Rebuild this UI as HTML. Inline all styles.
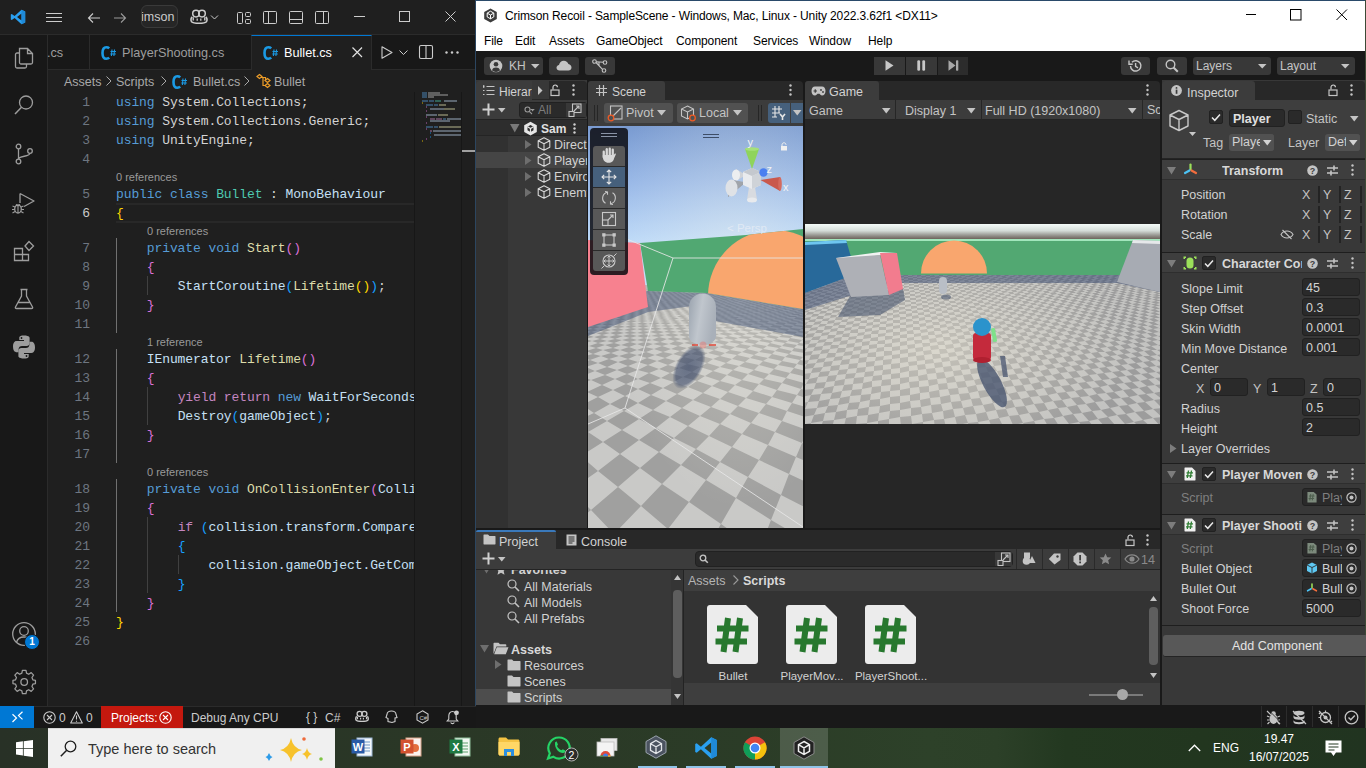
<!DOCTYPE html>
<html><head><meta charset="utf-8">
<style>
*{box-sizing:border-box;margin:0;padding:0}
html,body{width:1366px;height:768px;overflow:hidden;background:#1f1f1f;font-family:"Liberation Sans",sans-serif}
.a{position:absolute}
svg{position:absolute;overflow:visible}
/* VS Code */
#vs{left:0;top:0;width:476px;height:728px;background:#1f1f1f;overflow:hidden}
.code{font-family:"Liberation Mono",monospace;font-size:13px;letter-spacing:-0.1px;white-space:pre;color:#d4d4d4;line-height:19px;height:19px}
.ln{font-family:"Liberation Mono",monospace;font-size:13px;letter-spacing:-0.1px;color:#6e7681;width:40px;text-align:right;line-height:19px;height:19px}
.cl{font-size:11px;color:#999999;line-height:16px;height:16px;white-space:pre}
.k{color:#569cd6}.c{color:#c586c0}.t{color:#4ec9b0}.f{color:#dcdcaa}.v{color:#c6e0f5}.y{color:#ffd700}.p{color:#da70d6}.b{color:#179fff}
.ui{font-size:13px;color:#cccccc;white-space:pre}
/* Unity */
#un{left:476px;top:0;width:890px;height:728px;background:#191919;overflow:hidden}
.u{font-size:12px;color:#d2d2d2;white-space:pre}
.btn{background:#3a3a3a;border-radius:3px}
</style></head><body>

<!-- ================= VS CODE ================= -->
<div id="vs" class="a">
  <!-- title bar -->
  <div class="a" style="left:0;top:0;width:476px;height:35px;background:#1f1f1f;border-bottom:1px solid #2b2b2b"></div>
  <!-- vscode logo -->
  <svg style="left:10px;top:9px" width="16" height="16" viewBox="0 0 16 16"><path d="M11.5 0.8 L15.2 2.6 V13.4 L11.5 15.2 L4.6 8.9 L1.8 11.1 L0.8 10.6 V5.4 L1.8 4.9 L4.6 7.1 Z M11.5 4.4 L7 8 L11.5 11.6 Z" fill="#2aa0f0"/><path d="M11.5 0.8 L15.2 2.6 V13.4 L11.5 15.2 Z" fill="#1f8ad8"/></svg>
  <!-- hamburger -->
  <svg style="left:46px;top:12px" width="16" height="12"><path d="M0 1.5H16M0 5.5H16M0 9.5H16" stroke="#cccccc" stroke-width="1"/></svg>
  <!-- arrows -->
  <svg style="left:87px;top:12px" width="14" height="12"><path d="M13 6H1.5M6 1.5L1.5 6L6 10.5" stroke="#cccccc" fill="none" stroke-width="1.1"/></svg>
  <svg style="left:113px;top:12px" width="14" height="12"><path d="M1 6H12.5M8 1.5L12.5 6L8 10.5" stroke="#9a9a9a" fill="none" stroke-width="1.1"/></svg>
  <!-- search -->
  <div class="a" style="left:141px;top:5px;width:37px;height:23px;background:#262626;border:1px solid #3a3a3a;border-radius:6px;overflow:hidden"><div class="a ui" style="left:-1px;top:4px;font-size:12.5px;color:#cccccc">imson</div></div>
  <!-- copilot -->
  <svg style="left:190px;top:9px" width="30" height="16" viewBox="0 0 30 16"><path d="M2.2 7.8C0.8 8.8 0.6 11.5 1.6 12.8C3.3 14.8 14.7 14.8 16.4 12.8C17.4 11.5 17.2 8.8 15.8 7.8" stroke="#cccccc" stroke-width="1.6" fill="none"/><circle cx="6" cy="4.6" r="3.3" stroke="#cccccc" stroke-width="1.5" fill="none"/><circle cx="12" cy="4.6" r="3.3" stroke="#cccccc" stroke-width="1.5" fill="none"/><path d="M3 9.2H15V12.2C12 13.4 6 13.4 3 12.2Z" fill="none"/><path d="M3.2 8.3V11.6M14.8 8.3V11.6" stroke="#cccccc" stroke-width="1.4"/><path d="M7.2 9.6V11.8M10.8 9.6V11.8" stroke="#cccccc" stroke-width="1.3"/><path d="M21 6.5L24.5 10L28 6.5" stroke="#cccccc" fill="none" stroke-width="1"/></svg>
  <!-- layout icons -->
  <svg style="left:237px;top:12px" width="15" height="12"><rect x="0.5" y="0.5" width="5" height="11" rx="1" stroke="#cccccc" fill="none"/><rect x="8.5" y="0.5" width="5" height="4" rx="1" stroke="#cccccc" fill="none"/><rect x="8.5" y="7.5" width="5" height="4" rx="1" stroke="#cccccc" fill="none"/></svg>
  <svg style="left:263px;top:11px" width="15" height="14"><rect x="0.5" y="0.5" width="13" height="12" rx="1" stroke="#cccccc" fill="none"/><path d="M5.5 0.5V12.5" stroke="#cccccc"/></svg>
  <svg style="left:289px;top:11px" width="15" height="14"><rect x="0.5" y="0.5" width="13" height="12" rx="1" stroke="#cccccc" fill="none"/><path d="M0.5 8.5H13.5" stroke="#cccccc"/></svg>
  <svg style="left:315px;top:11px" width="15" height="14"><rect x="0.5" y="0.5" width="13" height="12" rx="1" stroke="#cccccc" fill="none"/><path d="M8.5 0.5V12.5" stroke="#cccccc"/></svg>
  <!-- window controls -->
  <svg style="left:354px;top:16px" width="12" height="2"><path d="M0 0.5H11" stroke="#cccccc"/></svg>
  <svg style="left:399px;top:11px" width="12" height="12"><rect x="0.5" y="0.5" width="10" height="10" stroke="#cccccc" fill="none"/></svg>
  <svg style="left:445px;top:11px" width="12" height="12"><path d="M0.5 0.5L10.5 10.5M10.5 0.5L0.5 10.5" stroke="#cccccc"/></svg>

  <!-- activity bar -->
  <div class="a" style="left:0;top:35px;width:48px;height:671px;background:#181818;border-right:1px solid #2b2b2b"></div>
  <!-- explorer -->
  <svg style="left:12px;top:46px" width="24" height="24" viewBox="0 0 24 24"><path d="M7.5 2.5H15.5L20.5 7.5V16.5C20.5 17.3 19.8 18 19 18H9C8.2 18 7.5 17.3 7.5 16.5Z M15.5 2.5V7.5H20.5" stroke="#9d9d9d" fill="none" stroke-width="1.3"/><path d="M7.5 7H5C4.2 7 3.5 7.7 3.5 8.5V20.5C3.5 21.3 4.2 22 5 22H13C13.8 22 14.5 21.3 14.5 20.5V18" stroke="#9d9d9d" fill="none" stroke-width="1.3"/></svg>
  <!-- search -->
  <svg style="left:12px;top:93px" width="24" height="24" viewBox="0 0 24 24"><circle cx="14" cy="9.5" r="6.5" stroke="#9d9d9d" fill="none" stroke-width="1.3"/><path d="M9.5 14.3L3 21" stroke="#9d9d9d" stroke-width="1.5"/></svg>
  <!-- scm -->
  <svg style="left:12px;top:142px" width="24" height="24" viewBox="0 0 24 24"><circle cx="6.5" cy="4.5" r="2.3" stroke="#9d9d9d" fill="none" stroke-width="1.3"/><circle cx="6.5" cy="19.5" r="2.3" stroke="#9d9d9d" fill="none" stroke-width="1.3"/><circle cx="18" cy="9" r="2.3" stroke="#9d9d9d" fill="none" stroke-width="1.3"/><path d="M6.5 6.8V17.2M18 11.3C18 15 6.5 13.5 6.5 17.2" stroke="#9d9d9d" fill="none" stroke-width="1.3"/></svg>
  <!-- run debug -->
  <svg style="left:11px;top:190px" width="26" height="26" viewBox="0 0 26 26"><path d="M9 3.5V13M9 3.5L23 11L13 16.5" stroke="#9d9d9d" fill="none" stroke-width="1.3" stroke-linejoin="round"/><ellipse cx="7" cy="19" rx="3.3" ry="4" stroke="#9d9d9d" fill="none" stroke-width="1.3"/><path d="M1.5 16L4 17M1 19.5H3.7M1.5 23L4 21.5M12.5 16L10 17M13 19.5H10.3M12.5 23L10 21.5M5 14.5L7 16L9 14.5M7 15.5V23" stroke="#9d9d9d" fill="none" stroke-width="1.1"/></svg>
  <!-- extensions -->
  <svg style="left:12px;top:239px" width="24" height="24" viewBox="0 0 24 24"><path d="M2.5 9.5H10.5V21.5H2.5Z M2.5 15.5H16.5V21.5H10.5 M10.5 9.5V15.5" stroke="#9d9d9d" fill="none" stroke-width="1.3"/><path d="M13 7L17 2.5L21.5 7L17 11.5Z" stroke="#9d9d9d" fill="none" stroke-width="1.3"/></svg>
  <!-- testing -->
  <svg style="left:12px;top:287px" width="24" height="24" viewBox="0 0 24 24"><path d="M8.5 2.5H15.5M9.5 2.5V9L3.5 20C3 21 3.5 21.5 4.5 21.5H19.5C20.5 21.5 21 21 20.5 20L14.5 9V2.5 M6 15.5H18" stroke="#9d9d9d" fill="none" stroke-width="1.3"/></svg>
  <!-- python -->
  <svg style="left:11px;top:334px" width="26" height="26" viewBox="0 0 26 26"><path d="M12.8 1.5C8 1.5 8.3 3.6 8.3 3.6V6H13V7H6C6 7 2 6.6 2 12.5C2 18.4 5.5 18.2 5.5 18.2H7.6V15.4C7.6 15.4 7.5 11.9 11 11.9H15.5C15.5 11.9 18.6 12 18.6 8.9V4C18.6 4 19.1 1.5 12.8 1.5Z" fill="#9d9d9d"/><path d="M13.2 24.5C18 24.5 17.7 22.4 17.7 22.4V20H13V19H20C20 19 24 19.4 24 13.5C24 7.6 20.5 7.8 20.5 7.8H18.4V10.6C18.4 10.6 18.5 14.1 15 14.1H10.5C10.5 14.1 7.4 14 7.4 17.1V22C7.4 22 6.9 24.5 13.2 24.5Z" fill="#9d9d9d"/><circle cx="10.5" cy="4" r="0.9" fill="#181818"/><circle cx="15.5" cy="22" r="0.9" fill="#181818"/></svg>
  <!-- account -->
  <svg style="left:11px;top:621px" width="28" height="28" viewBox="0 0 28 28"><circle cx="13" cy="13" r="11.3" stroke="#9d9d9d" fill="none" stroke-width="1.3"/><circle cx="13" cy="10" r="4.3" stroke="#9d9d9d" fill="none" stroke-width="1.3"/><path d="M5.5 21.5C6.5 17.5 9.5 16 13 16C16.5 16 19.5 17.5 20.5 21.5" stroke="#9d9d9d" fill="none" stroke-width="1.3"/></svg>
  <div class="a" style="left:24px;top:634px;width:16px;height:16px;border-radius:8px;background:#0078d4;border:1px solid #181818;color:#fff;font-size:10px;font-weight:bold;text-align:center;line-height:14px">1</div>
  <!-- settings -->
  <svg style="left:11px;top:670px" width="26" height="26" viewBox="0 0 26 26"><path d="M11 2H15L15.6 5.2L18 6.4L20.8 4.6L23.4 7.4L21.6 10L22.6 12.6L25.5 13.2V16.8L22.6 17.4L21.6 20L23.4 22.6L20.8 25.4L18 23.6L15.6 24.8L15 28H11L10.4 24.8L8 23.6L5.2 25.4L2.6 22.6L4.4 20L3.4 17.4L0.5 16.8V13.2L3.4 12.6L4.4 10L2.6 7.4L5.2 4.6L8 6.4L10.4 5.2Z" transform="translate(1.5,-1.5) scale(0.9)" stroke="#9d9d9d" fill="none" stroke-width="1.4" stroke-linejoin="round"/><circle cx="13.2" cy="12" r="3.3" stroke="#9d9d9d" fill="none" stroke-width="1.3"/></svg>

  <!-- tab bar -->
  <div class="a" style="left:48px;top:35px;width:428px;height:35px;background:#181818;border-bottom:1px solid #2b2b2b"></div>
  <div class="a ui" style="left:47px;top:46px;color:#9d9d9d;font-size:12.7px">.cs</div>
  <div class="a" style="left:89px;top:35px;width:1px;height:35px;background:#2b2b2b"></div>
  <svg style="left:101px;top:46px" width="16" height="14" viewBox="0 0 16 14"><path d="M8.2 2.3C7.4 1.5 6.3 1.2 5.3 1.2C2.8 1.2 1.5 3.6 1.5 7C1.5 10.4 2.8 12.8 5.3 12.8C6.3 12.8 7.4 12.5 8.2 11.7" stroke="#1b9ae4" stroke-width="2.6" fill="none"/><path d="M11 3.5L10.4 10M13.5 3.5L12.9 10M9.5 5.5H15M9.3 8H14.8" stroke="#1b9ae4" stroke-width="1.1"/></svg>
  <div class="a ui" style="left:122px;top:46px;color:#9d9d9d;font-size:12.7px">PlayerShooting.cs</div>
  <div class="a" style="left:251px;top:35px;width:121px;height:35px;background:#1f1f1f;border-top:1px solid #0078d4;border-left:1px solid #2b2b2b;border-right:1px solid #2b2b2b"></div>
  <svg style="left:263px;top:46px" width="16" height="14" viewBox="0 0 16 14"><path d="M8.2 2.3C7.4 1.5 6.3 1.2 5.3 1.2C2.8 1.2 1.5 3.6 1.5 7C1.5 10.4 2.8 12.8 5.3 12.8C6.3 12.8 7.4 12.5 8.2 11.7" stroke="#1b9ae4" stroke-width="2.6" fill="none"/><path d="M11 3.5L10.4 10M13.5 3.5L12.9 10M9.5 5.5H15M9.3 8H14.8" stroke="#1b9ae4" stroke-width="1.1"/></svg>
  <div class="a ui" style="left:284px;top:46px;color:#ffffff;font-size:12.7px">Bullet.cs</div>
  <svg style="left:352px;top:47px" width="11" height="11"><path d="M0.5 0.5L10 10M10 0.5L0.5 10" stroke="#e0e0e0" stroke-width="1.2"/></svg>
  <svg style="left:381px;top:46px" width="12" height="13"><path d="M1 0.8L11 6.5L1 12.2Z" stroke="#cccccc" fill="none" stroke-width="1.1" stroke-linejoin="round"/></svg>
  <svg style="left:399px;top:50px" width="9" height="5"><path d="M0.5 0.5L4.5 4.5L8.5 0.5" stroke="#cccccc" fill="none"/></svg>
  <svg style="left:419px;top:45px" width="15" height="14"><rect x="0.5" y="0.5" width="13" height="13" rx="1.5" stroke="#cccccc" fill="none" stroke-width="1.1"/><path d="M7 0.5V13.5" stroke="#cccccc" stroke-width="1.1"/></svg>
  <svg style="left:445px;top:51px" width="14" height="3"><circle cx="1.5" cy="1.5" r="1.2" fill="#cccccc"/><circle cx="7" cy="1.5" r="1.2" fill="#cccccc"/><circle cx="12.5" cy="1.5" r="1.2" fill="#cccccc"/></svg>

  <!-- breadcrumbs -->
  <div class="a ui" style="left:64px;top:75px;color:#a9a9a9;font-size:12.5px">Assets</div>
  <svg style="left:106px;top:76px" width="6" height="10"><path d="M0.5 0.5L5 5L0.5 9.5" stroke="#a9a9a9" fill="none"/></svg>
  <div class="a ui" style="left:116px;top:75px;color:#a9a9a9;font-size:12.5px">Scripts</div>
  <svg style="left:161px;top:76px" width="6" height="10"><path d="M0.5 0.5L5 5L0.5 9.5" stroke="#a9a9a9" fill="none"/></svg>
  <svg style="left:172px;top:75px" width="16" height="14" viewBox="0 0 16 14"><path d="M8.2 2.3C7.4 1.5 6.3 1.2 5.3 1.2C2.8 1.2 1.5 3.6 1.5 7C1.5 10.4 2.8 12.8 5.3 12.8C6.3 12.8 7.4 12.5 8.2 11.7" stroke="#1b9ae4" stroke-width="2.6" fill="none"/><path d="M11 3.5L10.4 10M13.5 3.5L12.9 10M9.5 5.5H15M9.3 8H14.8" stroke="#1b9ae4" stroke-width="1.1"/></svg>
  <div class="a ui" style="left:193px;top:75px;color:#a9a9a9;font-size:12.5px">Bullet.cs</div>
  <svg style="left:244px;top:76px" width="6" height="10"><path d="M0.5 0.5L5 5L0.5 9.5" stroke="#a9a9a9" fill="none"/></svg>
  <svg style="left:256px;top:74px" width="15" height="15" viewBox="0 0 15 15"><path d="M1 2.5L3.5 0.5L6 2.5L3.5 4.5Z M9 6.5L11.5 4.5L14 6.5L11.5 8.5Z M9 11.5L11.5 9.5L14 11.5L11.5 13.5Z M5 3.5H9.5V6 M7 3.5V11.5H9.5" stroke="#ee9d28" fill="none" stroke-width="1.2"/></svg>
  <div class="a ui" style="left:274px;top:75px;color:#a9a9a9;font-size:12.5px">Bullet</div>

  <!-- current line highlight (line 6) -->
  <div class="a" style="left:116px;top:203px;width:298px;height:20px;border-top:2px solid #282828;border-bottom:2px solid #282828"></div>

  <!-- indent guides -->
  <div class="a" style="left:116px;top:238px;width:1px;height:95px;background:#707070"></div>
  <div class="a" style="left:116px;top:349px;width:1px;height:114px;background:#707070"></div>
  <div class="a" style="left:116px;top:479px;width:1px;height:133px;background:#707070"></div>
  <div class="a" style="left:147px;top:276px;width:1px;height:19px;background:#404040"></div>
  <div class="a" style="left:147px;top:387px;width:1px;height:38px;background:#404040"></div>
  <div class="a" style="left:147px;top:517px;width:1px;height:76px;background:#404040"></div>
  <div class="a" style="left:178px;top:555px;width:1px;height:19px;background:#404040"></div>

  <!-- code -->
  <div class="a" style="left:0;top:0;width:414px;height:706px;overflow:hidden">
  <div class="a ln" style="left:50px;top:93px;color:#6e7681">1</div>
  <div class="a code" style="left:116px;top:93px"><span class="k">using</span> System.Collections;</div>
  <div class="a ln" style="left:50px;top:112px;color:#6e7681">2</div>
  <div class="a code" style="left:116px;top:112px"><span class="k">using</span> System.Collections.Generic;</div>
  <div class="a ln" style="left:50px;top:131px;color:#6e7681">3</div>
  <div class="a code" style="left:116px;top:131px"><span class="k">using</span> UnityEngine;</div>
  <div class="a ln" style="left:50px;top:150px;color:#6e7681">4</div>
  <div class="a cl" style="left:116px;top:169px">0 references</div>
  <div class="a ln" style="left:50px;top:185px;color:#6e7681">5</div>
  <div class="a code" style="left:116px;top:185px"><span class="k">public</span> <span class="k">class</span> <span class="t">Bullet</span> : <span class="v">MonoBehaviour</span></div>
  <div class="a ln" style="left:50px;top:204px;color:#cccccc">6</div>
  <div class="a code" style="left:116px;top:204px"><span class="y">{</span></div>
  <div class="a cl" style="left:147px;top:223px">0 references</div>
  <div class="a ln" style="left:50px;top:239px;color:#6e7681">7</div>
  <div class="a code" style="left:116px;top:239px">    <span class="k">private</span> <span class="k">void</span> <span class="f">Start</span><span class="p">()</span></div>
  <div class="a ln" style="left:50px;top:258px;color:#6e7681">8</div>
  <div class="a code" style="left:116px;top:258px">    <span class="p">{</span></div>
  <div class="a ln" style="left:50px;top:277px;color:#6e7681">9</div>
  <div class="a code" style="left:116px;top:277px">        <span class="v">StartCoroutine</span><span class="b">(</span><span class="f">Lifetime</span><span class="y">()</span><span class="b">)</span>;</div>
  <div class="a ln" style="left:50px;top:296px;color:#6e7681">10</div>
  <div class="a code" style="left:116px;top:296px">    <span class="p">}</span></div>
  <div class="a ln" style="left:50px;top:315px;color:#6e7681">11</div>
  <div class="a cl" style="left:147px;top:334px">1 reference</div>
  <div class="a ln" style="left:50px;top:350px;color:#6e7681">12</div>
  <div class="a code" style="left:116px;top:350px">    <span class="v">IEnumerator</span> <span class="f">Lifetime</span><span class="p">()</span></div>
  <div class="a ln" style="left:50px;top:369px;color:#6e7681">13</div>
  <div class="a code" style="left:116px;top:369px">    <span class="p">{</span></div>
  <div class="a ln" style="left:50px;top:388px;color:#6e7681">14</div>
  <div class="a code" style="left:116px;top:388px">        <span class="c">yield</span> <span class="c">return</span> <span class="k">new</span> <span class="v">WaitForSeconds(2f);</span></div>
  <div class="a ln" style="left:50px;top:407px;color:#6e7681">15</div>
  <div class="a code" style="left:116px;top:407px">        <span class="v">Destroy</span><span class="b">(</span><span class="v">gameObject</span><span class="b">)</span>;</div>
  <div class="a ln" style="left:50px;top:426px;color:#6e7681">16</div>
  <div class="a code" style="left:116px;top:426px">    <span class="p">}</span></div>
  <div class="a ln" style="left:50px;top:445px;color:#6e7681">17</div>
  <div class="a cl" style="left:147px;top:464px">0 references</div>
  <div class="a ln" style="left:50px;top:480px;color:#6e7681">18</div>
  <div class="a code" style="left:116px;top:480px">    <span class="k">private</span> <span class="k">void</span> <span class="f">OnCollisionEnter</span><span class="p">(</span><span class="v">Collision collision)</span></div>
  <div class="a ln" style="left:50px;top:499px;color:#6e7681">19</div>
  <div class="a code" style="left:116px;top:499px">    <span class="p">{</span></div>
  <div class="a ln" style="left:50px;top:518px;color:#6e7681">20</div>
  <div class="a code" style="left:116px;top:518px">        <span class="c">if</span> <span class="b">(</span><span class="v">collision.transform.CompareTag</span></div>
  <div class="a ln" style="left:50px;top:537px;color:#6e7681">21</div>
  <div class="a code" style="left:116px;top:537px">        <span class="b">{</span></div>
  <div class="a ln" style="left:50px;top:556px;color:#6e7681">22</div>
  <div class="a code" style="left:116px;top:556px">            <span class="v">collision.gameObject.GetComponent</span></div>
  <div class="a ln" style="left:50px;top:575px;color:#6e7681">23</div>
  <div class="a code" style="left:116px;top:575px">        <span class="b">}</span></div>
  <div class="a ln" style="left:50px;top:594px;color:#6e7681">24</div>
  <div class="a code" style="left:116px;top:594px">    <span class="p">}</span></div>
  <div class="a ln" style="left:50px;top:613px;color:#6e7681">25</div>
  <div class="a code" style="left:116px;top:613px"><span class="y">}</span></div>
  <div class="a ln" style="left:50px;top:632px;color:#6e7681">26</div>
  </div>

  <!-- minimap -->
  <div class="a" style="left:414px;top:92px;width:1px;height:614px;background:#171717"></div>
  <div class="a" style="left:461px;top:92px;width:1px;height:614px;background:#171717"></div>
  <div class="a" style="left:462px;top:150px;width:13px;height:2px;background:#a0a0a0"></div>
  <div class="a" style="left:475px;top:0;width:1px;height:728px;background:#2c4660"></div>
  <div class="a" style="left:422px;top:92px;width:5px;height:2px;background:#569cd6;opacity:.4"></div>
  <div class="a" style="left:428px;top:92px;width:12px;height:2px;background:#c0c0c0;opacity:.4"></div>
  <div class="a" style="left:422px;top:94px;width:5px;height:2px;background:#569cd6;opacity:.4"></div>
  <div class="a" style="left:428px;top:94px;width:20px;height:2px;background:#c0c0c0;opacity:.4"></div>
  <div class="a" style="left:422px;top:96px;width:5px;height:2px;background:#569cd6;opacity:.4"></div>
  <div class="a" style="left:428px;top:96px;width:6px;height:2px;background:#c0c0c0;opacity:.4"></div>
  <div class="a" style="left:422px;top:100px;width:6px;height:2px;background:#569cd6;opacity:.4"></div>
  <div class="a" style="left:429px;top:100px;width:5px;height:2px;background:#569cd6;opacity:.4"></div>
  <div class="a" style="left:435px;top:100px;width:6px;height:2px;background:#4ec9b0;opacity:.4"></div>
  <div class="a" style="left:444px;top:100px;width:13px;height:2px;background:#b8d0e8;opacity:.4"></div>
  <div class="a" style="left:422px;top:102px;width:1px;height:2px;background:#ffd700;opacity:.4"></div>
  <div class="a" style="left:426px;top:104px;width:7px;height:2px;background:#569cd6;opacity:.4"></div>
  <div class="a" style="left:434px;top:104px;width:4px;height:2px;background:#569cd6;opacity:.4"></div>
  <div class="a" style="left:439px;top:104px;width:7px;height:2px;background:#dcdcaa;opacity:.4"></div>
  <div class="a" style="left:426px;top:106px;width:1px;height:2px;background:#da70d6;opacity:.4"></div>
  <div class="a" style="left:430px;top:108px;width:14px;height:2px;background:#b8d0e8;opacity:.4"></div>
  <div class="a" style="left:444px;top:108px;width:11px;height:2px;background:#dcdcaa;opacity:.4"></div>
  <div class="a" style="left:426px;top:110px;width:1px;height:2px;background:#da70d6;opacity:.4"></div>
  <div class="a" style="left:426px;top:114px;width:11px;height:2px;background:#b8d0e8;opacity:.4"></div>
  <div class="a" style="left:438px;top:114px;width:10px;height:2px;background:#dcdcaa;opacity:.4"></div>
  <div class="a" style="left:426px;top:116px;width:1px;height:2px;background:#da70d6;opacity:.4"></div>
  <div class="a" style="left:430px;top:118px;width:5px;height:2px;background:#c586c0;opacity:.4"></div>
  <div class="a" style="left:436px;top:118px;width:6px;height:2px;background:#c586c0;opacity:.4"></div>
  <div class="a" style="left:443px;top:118px;width:3px;height:2px;background:#569cd6;opacity:.4"></div>
  <div class="a" style="left:447px;top:118px;width:14px;height:2px;background:#b8d0e8;opacity:.4"></div>
  <div class="a" style="left:430px;top:120px;width:20px;height:2px;background:#b8d0e8;opacity:.4"></div>
  <div class="a" style="left:426px;top:122px;width:1px;height:2px;background:#da70d6;opacity:.4"></div>
  <div class="a" style="left:426px;top:126px;width:7px;height:2px;background:#569cd6;opacity:.4"></div>
  <div class="a" style="left:434px;top:126px;width:4px;height:2px;background:#569cd6;opacity:.4"></div>
  <div class="a" style="left:439px;top:126px;width:22px;height:2px;background:#dcdcaa;opacity:.4"></div>
  <div class="a" style="left:426px;top:128px;width:1px;height:2px;background:#da70d6;opacity:.4"></div>
  <div class="a" style="left:430px;top:130px;width:2px;height:2px;background:#c586c0;opacity:.4"></div>
  <div class="a" style="left:433px;top:130px;width:28px;height:2px;background:#b8d0e8;opacity:.4"></div>
  <div class="a" style="left:430px;top:132px;width:1px;height:2px;background:#179fff;opacity:.4"></div>
  <div class="a" style="left:434px;top:134px;width:27px;height:2px;background:#b8d0e8;opacity:.4"></div>
  <div class="a" style="left:430px;top:136px;width:1px;height:2px;background:#179fff;opacity:.4"></div>
  <div class="a" style="left:426px;top:138px;width:1px;height:2px;background:#da70d6;opacity:.4"></div>
  <div class="a" style="left:422px;top:140px;width:1px;height:2px;background:#ffd700;opacity:.4"></div>

  <!-- status bar -->
  <div class="a" style="left:0;top:706px;width:476px;height:22px;background:#181818;border-top:1px solid #2b2b2b"></div>
  <div class="a" style="left:0;top:706px;width:34px;height:22px;background:#0078d4"></div>
  <svg style="left:12px;top:711px" width="11" height="12"><path d="M0.5 11L4.5 7L0.5 3.2M10.5 0.8L6.5 4.6L10.5 8.4" stroke="#ffffff" fill="none" stroke-width="1.2"/></svg>
  <svg style="left:43px;top:711px" width="13" height="13"><circle cx="6.5" cy="6.5" r="5.7" stroke="#cccccc" fill="none" stroke-width="1.1"/><path d="M4 4L9 9M9 4L4 9" stroke="#cccccc" stroke-width="1.1"/></svg>
  <div class="a ui" style="left:59px;top:711px;font-size:12px">0</div>
  <svg style="left:70px;top:711px" width="13" height="13"><path d="M6.5 0.8L12.3 12H0.7Z" stroke="#cccccc" fill="none" stroke-width="1.1" stroke-linejoin="round"/><path d="M6.5 4.5V8.5M6.5 9.8V10.8" stroke="#cccccc" stroke-width="1.1"/></svg>
  <div class="a ui" style="left:86px;top:711px;font-size:12px">0</div>
  <div class="a" style="left:101px;top:706px;width:82px;height:22px;background:#c4180e"></div>
  <div class="a ui" style="left:111px;top:711px;font-size:12px;color:#ffffff">Projects:</div>
  <svg style="left:159px;top:711px" width="13" height="13"><circle cx="6.5" cy="6.5" r="5.7" stroke="#ffffff" fill="none" stroke-width="1.1"/><path d="M4 4L9 9M9 4L4 9" stroke="#ffffff" stroke-width="1.1"/></svg>
  <div class="a ui" style="left:191px;top:711px;font-size:12px">Debug Any CPU</div>
  <div class="a ui" style="left:306px;top:710px;font-size:12px">{ }</div>
  <div class="a ui" style="left:325px;top:711px;font-size:12px">C#</div>
  <svg style="left:355px;top:710px" width="14" height="13" viewBox="0 0 18 16"><path d="M2.2 7.8C0.8 8.8 0.6 11.5 1.6 12.8C3.3 14.8 14.7 14.8 16.4 12.8C17.4 11.5 17.2 8.8 15.8 7.8" stroke="#cccccc" stroke-width="1.8" fill="none"/><circle cx="6" cy="4.6" r="3.3" stroke="#cccccc" stroke-width="1.7" fill="none"/><circle cx="12" cy="4.6" r="3.3" stroke="#cccccc" stroke-width="1.7" fill="none"/><path d="M3.2 8.3V11.6M14.8 8.3V11.6M7.2 9.6V11.8M10.8 9.6V11.8" stroke="#cccccc" stroke-width="1.5"/></svg>
  <svg style="left:385px;top:710px" width="13" height="14"><path d="M2 4.5C2 2.5 4 1 6.5 1C9 1 11 2.5 11 4.5L12 7.5L10 8V11.5L7 12.5L3 11.5V8.5L1 7.5Z" stroke="#cccccc" fill="none" stroke-width="1.1"/></svg>
  <svg style="left:416px;top:710px" width="13" height="14"><path d="M6.5 0.8L12 4V10L6.5 13.2L1 10V4Z" stroke="#cccccc" fill="none" stroke-width="1.1"/><text x="3.5" y="9.5" font-size="6" fill="#cccccc" font-family="Liberation Sans">C#</text></svg>
  <svg style="left:446px;top:710px" width="13" height="14"><path d="M6.5 1.5C4 1.5 2.8 3.5 2.8 6V9L1.2 11H11.8L10.2 9V6C10.2 3.5 9 1.5 6.5 1.5Z M4.8 12.3C5 13.2 5.7 13.6 6.5 13.6C7.3 13.6 8 13.2 8.2 12.3" stroke="#cccccc" fill="none" stroke-width="1.1"/><circle cx="10.5" cy="2.8" r="2.4" fill="#cccccc"/></svg>
</div>

<!-- ================= UNITY ================= -->
<div class="a" style="left:476px;top:0;width:890px;height:728px;background:#191919"></div>
<!-- title + menu -->
<div class="a" style="left:476px;top:0;width:889px;height:51px;background:#ffffff"></div>
<div class="a" style="left:476px;top:0;width:890px;height:1px;background:#2a4a6a"></div>
<svg style="left:483px;top:8px" width="15" height="15" viewBox="0 0 15 15"><path d="M7.5 0.5L13.8 4V11L7.5 14.5L1.2 11V4Z" fill="#3c3c3c"/><path d="M7.5 3.2L10.8 5.1V8.9L7.5 10.8L4.2 8.9V5.1Z" fill="none" stroke="#ffffff" stroke-width="1"/><path d="M7.5 7V10.8M4.2 5.1L7.5 7L10.8 5.1" stroke="#ffffff" stroke-width="1" fill="none"/></svg>
<div class="a" style="left:505px;top:9px;font-size:12px;letter-spacing:-0.12px;color:#000000;white-space:pre">Crimson Recoil - SampleScene - Windows, Mac, Linux - Unity 2022.3.62f1 &lt;DX11&gt;</div>
<svg style="left:1246px;top:14px" width="11" height="2"><path d="M0 0.5H10" stroke="#000" stroke-width="1"/></svg>
<svg style="left:1290px;top:9px" width="12" height="12"><rect x="0.5" y="0.5" width="10.5" height="10.5" fill="none" stroke="#000"/></svg>
<svg style="left:1336px;top:9px" width="12" height="12"><path d="M0.5 0.5L11 11M11 0.5L0.5 11" stroke="#000"/></svg>
<div class="a" style="left:484px;top:34px;font-size:12px;letter-spacing:-0.1px;color:#000;white-space:pre">File</div>
<div class="a" style="left:515px;top:34px;font-size:12px;letter-spacing:-0.1px;color:#000;white-space:pre">Edit</div>
<div class="a" style="left:549px;top:34px;font-size:12px;letter-spacing:-0.1px;color:#000;white-space:pre">Assets</div>
<div class="a" style="left:596px;top:34px;font-size:12px;letter-spacing:-0.1px;color:#000;white-space:pre">GameObject</div>
<div class="a" style="left:676px;top:34px;font-size:12px;letter-spacing:-0.1px;color:#000;white-space:pre">Component</div>
<div class="a" style="left:753px;top:34px;font-size:12px;letter-spacing:-0.1px;color:#000;white-space:pre">Services</div>
<div class="a" style="left:809px;top:34px;font-size:12px;letter-spacing:-0.1px;color:#000;white-space:pre">Window</div>
<div class="a" style="left:868px;top:34px;font-size:12px;letter-spacing:-0.1px;color:#000;white-space:pre">Help</div>
<!-- right 1px strip -->
<div class="a" style="left:1365px;top:0;width:1px;height:728px;background:#3d4a36"></div>

<!-- toolbar -->
<div class="a" style="left:476px;top:51px;width:889px;height:29px;background:#191919"></div>
<div class="a btn" style="left:484px;top:57px;width:59px;height:18px;background:#383838"></div>
<svg style="left:489px;top:59px" width="14" height="14" viewBox="0 0 14 14"><circle cx="7" cy="7" r="6.3" fill="#c4c4c4"/><circle cx="7" cy="5.3" r="2.3" fill="#383838"/><path d="M3 11.2C3.6 9.3 5 8.6 7 8.6C9 8.6 10.4 9.3 11 11.2C10 12.3 8.6 12.9 7 12.9C5.4 12.9 4 12.3 3 11.2Z" fill="#383838"/></svg>
<div class="a u" style="left:509px;top:59px;color:#c4c4c4;font-size:12px">KH</div>
<svg style="left:531px;top:64px" width="9" height="5"><path d="M0 0H8.5L4.25 4.5Z" fill="#c4c4c4"/></svg>
<div class="a btn" style="left:549px;top:57px;width:30px;height:18px;background:#383838"></div>
<svg style="left:556px;top:60px" width="16" height="11" viewBox="0 0 16 11"><path d="M3.5 10.5C1.8 10.5 0.5 9.3 0.5 7.8C0.5 6.4 1.6 5.3 3 5.1C3.3 2.6 5.3 0.7 7.8 0.7C10 0.7 11.8 2.1 12.4 4.1C14.2 4.3 15.5 5.8 15.5 7.5C15.5 9.2 14.1 10.5 12.4 10.5Z" fill="#c4c4c4"/></svg>
<div class="a btn" style="left:585px;top:57px;width:30px;height:18px;background:#383838"></div>
<svg style="left:592px;top:59px" width="16" height="14" viewBox="0 0 16 14"><circle cx="2.5" cy="2.5" r="1.8" stroke="#c4c4c4" fill="none" stroke-width="1.1"/><circle cx="13" cy="3.5" r="1.8" stroke="#c4c4c4" fill="none" stroke-width="1.1"/><circle cx="12" cy="11.5" r="1.8" stroke="#c4c4c4" fill="none" stroke-width="1.1"/><path d="M4.3 2.8L11.2 3.3M4 3.5L10.5 10.3M7 6.5V3" stroke="#c4c4c4" stroke-width="1.1"/></svg>
<!-- play controls -->
<div class="a" style="left:874px;top:57px;width:31px;height:18px;background:#383838"></div>
<div class="a" style="left:906px;top:57px;width:31px;height:18px;background:#383838"></div>
<div class="a" style="left:938px;top:57px;width:30px;height:18px;background:#2c2c2c"></div>
<svg style="left:885px;top:60px" width="9" height="11"><path d="M0.5 0.3L8.5 5.5L0.5 10.7Z" fill="#c8c8c8"/></svg>
<svg style="left:917px;top:60px" width="9" height="11"><rect x="0.3" y="0.3" width="2.8" height="10.4" rx="1.2" fill="#c8c8c8"/><rect x="5.3" y="0.3" width="2.8" height="10.4" rx="1.2" fill="#c8c8c8"/></svg>
<svg style="left:948px;top:60px" width="11" height="11"><path d="M0.5 0.3L7.5 5.5L0.5 10.7Z" fill="#a8a8a8"/><rect x="8" y="0.3" width="2.3" height="10.4" rx="0.8" fill="#a8a8a8"/></svg>
<!-- right toolbar -->
<div class="a btn" style="left:1121px;top:57px;width:29px;height:18px;background:#383838"></div>
<svg style="left:1128px;top:59px" width="15" height="14" viewBox="0 0 15 14"><path d="M2.5 7A5.2 5.2 0 1 0 4 3.2" stroke="#c4c4c4" fill="none" stroke-width="1.5"/><path d="M1 1.5V5.2H4.7" stroke="#c4c4c4" fill="none" stroke-width="1.4"/><path d="M7.6 4V7.3L10 8.8" stroke="#c4c4c4" fill="none" stroke-width="1.4"/></svg>
<div class="a btn" style="left:1157px;top:57px;width:30px;height:18px;background:#383838"></div>
<svg style="left:1165px;top:59px" width="14" height="14"><circle cx="5.5" cy="5.5" r="4.3" stroke="#c4c4c4" fill="none" stroke-width="1.4"/><path d="M8.5 8.5L12.8 12.8" stroke="#c4c4c4" stroke-width="2"/></svg>
<div class="a btn" style="left:1193px;top:57px;width:78px;height:18px;background:#383838"></div>
<div class="a u" style="left:1196px;top:59px;color:#c4c4c4">Layers</div>
<svg style="left:1258px;top:64px" width="9" height="5"><path d="M0 0H8.5L4.25 4.5Z" fill="#c4c4c4"/></svg>
<div class="a btn" style="left:1277px;top:57px;width:78px;height:18px;background:#383838"></div>
<div class="a u" style="left:1280px;top:59px;color:#c4c4c4">Layout</div>
<svg style="left:1341px;top:64px" width="9" height="5"><path d="M0 0H8.5L4.25 4.5Z" fill="#c4c4c4"/></svg>

<!-- ===== dock area backgrounds ===== -->
<div class="a" style="left:476px;top:80px;width:889px;height:625px;background:#191919"></div>

<!-- ===== HIERARCHY ===== -->
<div class="a" style="left:476px;top:80px;width:111px;height:448px;background:#383838"></div>
<div class="a" style="left:476px;top:81px;width:111px;height:19px;background:#282828;border-radius:4px 4px 0 0"></div>
<div class="a" style="left:476px;top:81px;width:56px;height:19px;background:#3c3c3c;border-radius:3px 0 0 0;overflow:hidden"></div>
<svg style="left:482px;top:85px" width="13" height="11"><path d="M4.5 1.5H12.5M4.5 5.5H12.5M4.5 9.5H12.5" stroke="#c4c4c4" stroke-width="1.1"/><path d="M1 1.5H2.5M1 5.5H2.5M1 9.5H2.5M1.75 0V3" stroke="#c4c4c4" stroke-width="1.1"/></svg>
<div class="a" style="left:499px;top:81px;width:33px;height:19px;overflow:hidden"><div class="a u" style="left:0;top:4px;color:#d2d2d2">Hierarchy</div></div>
<div class="a" style="left:532px;top:81px;width:17px;height:18px;background:#383838"></div>
<svg style="left:538px;top:86px" width="5" height="9"><path d="M0 0L4.5 4.5L0 9Z" fill="#c4c4c4"/></svg>
<svg style="left:550px;top:84px" width="10" height="12"><path d="M3 5.5V3.2C3 1.8 4 1 5.2 1C6.4 1 7.4 1.8 7.4 3.2" stroke="#d0d0d0" fill="none" stroke-width="1.2"/><rect x="1" y="6" width="8" height="5.5" stroke="#c4c4c4" fill="none" stroke-width="1.2"/></svg>
<svg style="left:572px;top:84px" width="3" height="12"><circle cx="1.5" cy="1.5" r="1.2" fill="#c4c4c4"/><circle cx="1.5" cy="6" r="1.2" fill="#c4c4c4"/><circle cx="1.5" cy="10.5" r="1.2" fill="#c4c4c4"/></svg>
<!-- hierarchy toolbar -->
<div class="a" style="left:476px;top:100px;width:111px;height:20px;background:#3c3c3c;border-bottom:1px solid #232323"></div>
<svg style="left:482px;top:103px" width="13" height="13"><path d="M6.5 0.5V12.5M0.5 6.5H12.5" stroke="#d0d0d0" stroke-width="2"/></svg>
<svg style="left:498px;top:108px" width="8" height="5"><path d="M0 0H7.5L3.75 4.5Z" fill="#c4c4c4"/></svg>
<div class="a" style="left:519px;top:102px;width:68px;height:16px;background:#2a2a2a;border:1px solid #212121;border-radius:3px"></div>
<svg style="left:524px;top:106px" width="10" height="9"><circle cx="3.5" cy="3.5" r="2.5" stroke="#9a9a9a" fill="none" stroke-width="1.1"/><path d="M5.3 5.3L8 8M6.5 3.5H9.5L8 5" stroke="#9a9a9a" stroke-width="1.1" fill="none"/></svg>
<div class="a u" style="left:538px;top:103px;color:#7d7d7d">All</div>
<div class="a" style="left:565px;top:103px;width:21px;height:14px;background:#383838;border-left:1px solid #2a2a2a"></div>
<svg style="left:568px;top:103px" width="14" height="14"><rect x="4.5" y="1" width="8.5" height="8.5" stroke="#c4c4c4" fill="none" stroke-width="1.1"/><rect x="1" y="8.5" width="5" height="5" stroke="#c4c4c4" fill="#383838" stroke-width="1.1"/><path d="M6 8L11 3M8 3H11V6" stroke="#c4c4c4" fill="none" stroke-width="1.1"/></svg>
<!-- hierarchy rows -->
<div class="a" style="left:476px;top:120px;width:111px;height:16px;background:#2d2d2d;border-bottom:1px solid #242424"></div>
<div class="a" style="left:476px;top:136px;width:32px;height:392px;background:#313131"></div>
<div class="a" style="left:476px;top:152px;width:111px;height:16px;background:#454545"></div>
<svg style="left:510px;top:124px" width="10" height="9"><path d="M0 0H9.5L4.75 8.5Z" fill="#7a7a7a"/></svg>
<svg style="left:523px;top:121px" width="15" height="15" viewBox="0 0 15 15"><path d="M7.5 0.8L13.8 4.3V11L7.5 14.5L1.2 11V4.3Z" fill="#e6e6e6"/><path d="M7.5 4L10.5 5.8V9.2L7.5 11L4.5 9.2V5.8Z" fill="#2d2d2d"/><path d="M7.5 7.5V11M4.5 5.8L7.5 7.5L10.5 5.8" stroke="#e6e6e6" stroke-width="1.2" fill="none"/></svg>
<div class="a u" style="left:541px;top:122px;color:#e0e0e0;font-weight:bold">Sam</div>
<svg style="left:573px;top:123px" width="3" height="11"><circle cx="1.5" cy="1.5" r="1.2" fill="#d0d0d0"/><circle cx="1.5" cy="5.5" r="1.2" fill="#d0d0d0"/><circle cx="1.5" cy="9.5" r="1.2" fill="#d0d0d0"/></svg>
<svg style="left:525px;top:140px" width="7" height="9"><path d="M0 0L6.5 4.5L0 9Z" fill="#6e6e6e"/></svg>
<svg style="left:537px;top:137px" width="14" height="14" viewBox="0 0 14 14"><path d="M7 0.8L12.8 3.8V10.2L7 13.2L1.2 10.2V3.8Z M1.2 3.8L7 6.8L12.8 3.8 M7 6.8V13.2" stroke="#d8d8d8" fill="none" stroke-width="1.1" stroke-linejoin="round"/></svg>
<div class="a" style="left:554px;top:136px;width:33px;height:16px;overflow:hidden"><div class="a u" style="left:0;top:2px;color:#d2d2d2;font-size:12.5px">Directional Light</div></div>
<svg style="left:525px;top:156px" width="7" height="9"><path d="M0 0L6.5 4.5L0 9Z" fill="#6e6e6e"/></svg>
<svg style="left:537px;top:153px" width="14" height="14" viewBox="0 0 14 14"><path d="M7 0.8L12.8 3.8V10.2L7 13.2L1.2 10.2V3.8Z M1.2 3.8L7 6.8L12.8 3.8 M7 6.8V13.2" stroke="#d8d8d8" fill="none" stroke-width="1.1" stroke-linejoin="round"/></svg>
<div class="a" style="left:554px;top:152px;width:33px;height:16px;overflow:hidden"><div class="a u" style="left:0;top:2px;color:#d2d2d2;font-size:12.5px">Player</div></div>
<svg style="left:525px;top:172px" width="7" height="9"><path d="M0 0L6.5 4.5L0 9Z" fill="#6e6e6e"/></svg>
<svg style="left:537px;top:169px" width="14" height="14" viewBox="0 0 14 14"><path d="M7 0.8L12.8 3.8V10.2L7 13.2L1.2 10.2V3.8Z M1.2 3.8L7 6.8L12.8 3.8 M7 6.8V13.2" stroke="#d8d8d8" fill="none" stroke-width="1.1" stroke-linejoin="round"/></svg>
<div class="a" style="left:554px;top:168px;width:33px;height:16px;overflow:hidden"><div class="a u" style="left:0;top:2px;color:#d2d2d2;font-size:12.5px">Environment</div></div>
<svg style="left:525px;top:188px" width="7" height="9"><path d="M0 0L6.5 4.5L0 9Z" fill="#6e6e6e"/></svg>
<svg style="left:537px;top:185px" width="14" height="14" viewBox="0 0 14 14"><path d="M7 0.8L12.8 3.8V10.2L7 13.2L1.2 10.2V3.8Z M1.2 3.8L7 6.8L12.8 3.8 M7 6.8V13.2" stroke="#d8d8d8" fill="none" stroke-width="1.1" stroke-linejoin="round"/></svg>
<div class="a" style="left:554px;top:184px;width:33px;height:16px;overflow:hidden"><div class="a u" style="left:0;top:2px;color:#d2d2d2;font-size:12.5px">Enemy</div></div>

<!-- ===== SCENE ===== -->
<div class="a" style="left:588px;top:81px;width:215px;height:19px;background:#282828;border-radius:4px 4px 0 0"></div>
<div class="a" style="left:588px;top:81px;width:77px;height:19px;background:#3c3c3c;border-radius:3px 3px 0 0"></div>
<svg style="left:596px;top:85px" width="11" height="11"><path d="M3.5 0V11M7.5 0V11M0 3.5H11M0 7.5H11" stroke="#c4c4c4" stroke-width="1.2"/></svg>
<div class="a u" style="left:612px;top:85px;color:#d2d2d2">Scene</div>
<svg style="left:789px;top:84px" width="3" height="12"><circle cx="1.5" cy="1.5" r="1.2" fill="#c4c4c4"/><circle cx="1.5" cy="6" r="1.2" fill="#c4c4c4"/><circle cx="1.5" cy="10.5" r="1.2" fill="#c4c4c4"/></svg>
<div class="a" style="left:588px;top:100px;width:215px;height:26px;background:#3c3c3c"></div>
<div class="a" style="left:594px;top:105px;width:1px;height:16px;background:#262626"></div>
<div class="a" style="left:597px;top:105px;width:1px;height:16px;background:#262626"></div>
<div class="a" style="left:604px;top:103px;width:69px;height:20px;background:#515151;border-radius:3px"></div>
<svg style="left:607px;top:105px" width="16" height="16" viewBox="0 0 16 16"><rect x="3.5" y="1" width="11.5" height="13" stroke="#c4c4c4" fill="none" stroke-width="1.1"/><path d="M5 12L14 3" stroke="#c4c4c4" stroke-width="1.1"/><circle cx="4" cy="13" r="2.8" stroke="#ee5a24" fill="#515151" stroke-width="1.3"/></svg>
<div class="a u" style="left:626px;top:106px;color:#c4c4c4;font-size:12.5px">Pivot</div>
<svg style="left:657px;top:110px" width="10" height="6"><path d="M0 0H9L4.5 5.5Z" fill="#c4c4c4"/></svg>
<div class="a" style="left:677px;top:103px;width:71px;height:20px;background:#515151;border-radius:3px"></div>
<svg style="left:680px;top:105px" width="17" height="17" viewBox="0 0 17 17"><path d="M7.5 1L13.5 4V11L7.5 14L1.5 11V4Z M1.5 4L7.5 7L13.5 4 M7.5 7V14" stroke="#c4c4c4" fill="none" stroke-width="1.1"/><circle cx="12.5" cy="13" r="2.8" stroke="#ee5a24" fill="#515151" stroke-width="1.3"/></svg>
<div class="a u" style="left:699px;top:106px;color:#c4c4c4;font-size:12.5px">Local</div>
<svg style="left:733px;top:110px" width="10" height="6"><path d="M0 0H9L4.5 5.5Z" fill="#c4c4c4"/></svg>
<div class="a" style="left:758px;top:105px;width:1px;height:16px;background:#262626"></div>
<div class="a" style="left:761px;top:105px;width:1px;height:16px;background:#262626"></div>
<div class="a" style="left:768px;top:103px;width:22px;height:20px;background:#46607c;border-radius:3px 0 0 3px"></div>
<div class="a" style="left:791px;top:103px;width:12px;height:20px;background:#46607c"></div>
<svg style="left:771px;top:105px" width="17" height="16" viewBox="0 0 17 16"><path d="M4 1V12M8 1V8M1 4H11M1 8H9M1 12H6" stroke="#e6e6e6" stroke-width="1.1"/><path d="M9 9L11.5 12L14 9M11.5 12V15" stroke="#e6e6e6" stroke-width="1.6" fill="none"/></svg>
<svg style="left:793px;top:110px" width="9" height="6"><path d="M0 0H8.5L4.25 5.5Z" fill="#c4c4c4"/></svg>
<svg style="left:588px;top:126px;overflow:hidden" width="215" height="402" viewBox="0 0 215 402">
<defs><linearGradient id="sky" gradientUnits="userSpaceOnUse" x1="0" y1="0" x2="0" y2="117"><stop offset="0" stop-color="#7a9bd1"/><stop offset="0.5" stop-color="#98b8e8"/><stop offset="1" stop-color="#bddaf9"/></linearGradient><radialGradient id="glow" cx="0.7" cy="0.35" r="0.6"><stop offset="0" stop-color="#fffbea" stop-opacity="0.35"/><stop offset="1" stop-color="#fffbea" stop-opacity="0"/></radialGradient><radialGradient id="shad" cx="0.5" cy="0.5" r="0.5"><stop offset="0" stop-color="#3a4868" stop-opacity="0.7"/><stop offset="0.8" stop-color="#3a4868" stop-opacity="0.6"/><stop offset="1" stop-color="#3a4868" stop-opacity="0.05"/></radialGradient><linearGradient id="caps" x1="0" y1="0" x2="1" y2="0.3"><stop offset="0" stop-color="#9aa3ae"/><stop offset="0.5" stop-color="#c0c6cd"/><stop offset="1" stop-color="#a9b0b9"/></linearGradient></defs>
<rect x="0" y="0" width="215" height="402" fill="url(#sky)"/>
<rect x="0" y="159" width="215" height="402" fill="#b0b0b0"/>
<rect x="0" y="163" width="215" height="402" fill="#c9c9c7"/><path d="M-31 413L3 384L-17 364L-49 388ZM26 408L53 380L30 361L3 384ZM-17 364L10 345L-7 330L-33 347ZM155 465L171 425L133 398L113 431ZM80 403L101 376L74 358L53 380ZM30 361L52 342L32 328L10 345ZM-7 330L15 316L0 306L-22 318ZM218 458L226 419L183 394L171 425ZM133 398L148 372L118 354L101 376ZM74 358L93 339L71 326L52 342ZM32 328L51 314L34 304L15 316ZM0 306L19 295L6 287L-13 296ZM183 394L193 369L160 351L148 372ZM118 354L132 336L108 323L93 339ZM71 326L86 312L68 302L51 314ZM34 304L51 293L36 285L19 295ZM6 287L22 278L10 271L-6 279ZM232 389L237 365L201 348L193 369ZM160 351L171 334L144 321L132 336ZM108 323L121 310L100 300L86 312ZM68 302L82 291L65 284L51 293ZM36 285L50 277L37 270L22 278ZM10 271L25 264L14 259L-1 266ZM-11 260L3 254L-6 250L-20 255ZM201 348L208 331L180 319L171 334ZM144 321L154 308L132 298L121 310ZM100 300L112 290L94 282L82 291ZM65 284L78 275L63 269L50 277ZM37 270L50 263L38 258L25 264ZM14 259L27 253L17 249L3 254ZM-6 250L7 245L-2 241L-15 246ZM241 345L245 329L214 317L208 331ZM180 319L187 306L163 297L154 308ZM132 298L142 288L123 281L112 290ZM94 282L105 274L89 268L78 275ZM63 269L75 262L62 257L50 263ZM38 258L50 253L39 248L27 253ZM17 249L29 244L19 241L7 245ZM-2 241L10 237L2 234L-10 238ZM214 317L219 304L194 295L187 306ZM163 297L171 287L150 280L142 288ZM123 281L132 273L115 267L105 274ZM89 268L100 261L86 256L75 262ZM62 257L73 252L61 247L50 253ZM39 248L50 244L40 240L29 244ZM19 241L30 236L21 233L10 237ZM2 234L13 230L5 228L-6 231ZM194 295L199 285L178 278L171 287ZM150 280L158 272L140 266L132 273ZM115 267L124 260L109 255L100 261ZM86 256L95 251L82 247L73 252ZM61 247L71 243L60 239L50 244ZM40 240L50 236L40 233L30 236ZM21 233L31 230L23 227L13 230ZM5 228L15 224L8 222L-2 225ZM-9 222L1 220L-6 218L-15 220ZM223 293L227 284L204 277L199 285ZM178 278L184 271L165 265L158 272ZM140 266L147 259L132 255L124 260ZM109 255L117 250L104 246L95 251ZM82 247L91 242L80 239L71 243ZM60 239L69 235L59 232L50 236ZM40 233L49 229L41 227L31 230ZM23 227L32 224L25 222L15 224ZM8 222L17 219L10 217L1 220ZM-6 218L4 215L-3 213L-12 216ZM204 277L209 269L189 264L184 271ZM165 265L171 258L154 254L147 259ZM132 255L139 249L125 245L117 250ZM104 246L112 241L99 238L91 242ZM80 239L88 235L77 232L69 235ZM59 232L67 229L58 226L49 229ZM41 227L49 224L41 221L32 224ZM25 222L33 219L26 217L17 219ZM10 217L19 215L12 213L4 215ZM-3 213L6 211L0 209L-8 211ZM230 276L233 268L213 263L209 269ZM189 264L194 257L176 253L171 258ZM154 254L160 248L145 244L139 249ZM125 245L132 241L119 237L112 241ZM99 238L107 234L96 231L88 235ZM77 232L85 228L75 226L67 229ZM58 226L66 223L57 221L49 224ZM41 221L49 218L42 216L33 219ZM26 217L34 214L27 213L19 215ZM12 213L21 211L14 209L6 211ZM0 209L8 207L3 206L-5 208ZM213 263L216 257L198 252L194 257ZM176 253L181 248L166 244L160 248ZM145 244L151 240L138 237L132 241ZM119 237L125 233L114 230L107 234ZM96 231L103 228L92 225L85 228ZM75 226L83 223L74 220L66 223ZM57 221L65 218L57 216L49 218ZM42 216L49 214L42 212L34 214ZM27 213L35 210L28 209L21 211ZM14 209L22 207L16 206L8 207ZM3 206L10 204L5 203L-3 204ZM198 252L202 247L186 243L181 248ZM166 244L171 239L157 236L151 240ZM138 237L144 233L132 230L125 233ZM114 230L120 227L109 225L103 228ZM92 225L99 222L90 220L83 223ZM74 220L81 218L72 216L65 218ZM57 216L64 214L56 212L49 214ZM42 212L49 210L42 208L35 210ZM28 209L36 207L29 205L22 207ZM16 206L23 204L18 203L10 204ZM5 203L12 201L7 200L-0 201ZM-5 200L2 199L-3 198L-10 199ZM220 251L222 246L206 242L202 247ZM186 243L190 239L175 235L171 239ZM157 236L162 232L149 229L144 233ZM132 230L137 227L126 224L120 227ZM109 225L115 222L105 219L99 222ZM90 220L96 217L87 215L81 218ZM72 216L79 213L71 211L64 214ZM56 212L63 210L56 208L49 210ZM42 208L49 207L42 205L36 207ZM29 205L36 204L30 202L23 204ZM18 203L24 201L19 200L12 201ZM7 200L14 198L9 197L2 199ZM-3 198L4 196L-1 195L-8 196ZM206 242L209 238L194 235L190 239ZM175 235L180 232L166 229L162 232ZM149 229L154 226L142 224L137 227ZM126 224L131 221L121 219L115 222ZM105 219L111 217L102 215L96 217ZM87 215L93 213L85 211L79 213ZM71 211L77 209L70 208L63 210ZM56 208L62 206L55 205L49 207ZM42 205L49 203L43 202L36 204ZM30 202L37 201L31 199L24 201ZM19 200L26 198L20 197L14 198ZM9 197L15 196L10 195L4 196ZM-1 195L6 194L1 193L-5 194ZM225 242L228 237L212 234L209 238ZM194 235L197 231L184 228L180 232ZM166 229L171 226L159 223L154 226ZM142 224L147 221L137 219L131 221ZM121 219L126 216L117 214L111 217ZM102 215L108 213L99 211L93 213ZM85 211L91 209L83 207L77 209ZM70 208L76 206L68 204L62 206ZM55 205L62 203L55 202L49 203ZM43 202L49 200L43 199L37 201ZM31 199L37 198L32 197L26 198ZM20 197L26 196L21 195L15 196ZM10 195L17 194L12 193L6 194ZM1 193L7 192L3 191L-3 192ZM212 234L215 231L201 228L197 231ZM184 228L187 225L175 223L171 226ZM159 223L163 220L152 218L147 221ZM137 219L141 216L131 214L126 216ZM117 214L122 212L113 210L108 213ZM99 211L104 209L96 207L91 209ZM83 207L89 206L81 204L76 206ZM68 204L74 203L67 201L62 203ZM55 202L61 200L55 199L49 200ZM43 199L49 198L43 197L37 198ZM32 197L38 196L32 195L26 196ZM21 195L27 194L23 193L17 194ZM12 193L18 192L13 191L7 192ZM3 191L9 190L5 189L-1 190ZM-5 189L1 188L-3 188L-9 188ZM230 234L232 230L217 227L215 231ZM201 228L204 225L191 222L187 225ZM175 223L179 220L167 218L163 220ZM152 218L156 216L146 214L141 216ZM131 214L136 212L127 210L122 212ZM113 210L118 208L110 207L104 209ZM96 207L102 205L94 204L89 206ZM81 204L87 203L80 201L74 203ZM67 201L73 200L67 199L61 200ZM55 199L60 198L54 196L49 198ZM43 197L49 195L43 194L38 196ZM32 195L38 193L33 192L27 194ZM23 193L28 192L23 191L18 192ZM13 191L19 190L15 189L9 190ZM5 189L10 188L6 187L1 188ZM-3 188L2 187L-1 186L-7 187ZM217 227L220 224L206 222L204 225ZM191 222L194 220L182 217L179 220ZM167 218L171 215L160 213L156 216ZM146 214L150 212L140 210L136 212ZM127 210L131 208L123 207L118 208ZM110 207L114 205L106 204L102 205ZM94 204L99 202L92 201L87 203ZM80 201L85 200L78 199L73 200ZM67 199L72 197L66 196L60 198ZM54 196L60 195L54 194L49 195ZM43 194L49 193L44 192L38 193ZM33 192L38 191L34 190L28 192ZM23 191L29 190L24 189L19 190ZM15 189L20 188L16 187L10 188ZM6 187L12 187L8 186L2 187ZM-1 186L4 185L0 184L-5 185ZM206 222L209 219L197 217L194 220ZM182 217L185 215L174 213L171 215ZM160 213L164 211L154 210L150 212ZM140 210L145 208L136 206L131 208ZM123 207L127 205L119 203L114 205ZM106 204L111 202L104 201L99 202ZM92 201L97 200L90 198L85 200ZM78 199L83 197L77 196L72 197ZM66 196L71 195L65 194L60 195ZM54 194L59 193L54 192L49 193ZM44 192L49 191L44 190L38 191ZM34 190L39 189L34 189L29 190ZM24 189L30 188L25 187L20 188ZM16 187L21 186L17 186L12 187ZM8 186L13 185L9 184L4 185ZM0 184L5 184L2 183L-3 184ZM222 221L224 219L211 217L209 219ZM197 217L200 215L188 213L185 215ZM174 213L178 211L167 209L164 211ZM154 210L158 208L149 206L145 208ZM136 206L140 205L131 203L127 205ZM119 203L123 202L116 201L111 202ZM104 201L108 199L101 198L97 200ZM90 198L94 197L88 196L83 197ZM77 196L82 195L76 194L71 195ZM65 194L70 193L64 192L59 193ZM54 192L59 191L54 190L49 191ZM44 190L49 189L44 188L39 189ZM34 189L39 188L35 187L30 188ZM25 187L30 186L26 186L21 186ZM17 186L22 185L18 184L13 185ZM9 184L14 184L10 183L5 184ZM2 183L7 182L3 182L-2 182ZM211 217L214 214L202 212L200 215ZM188 213L191 211L181 209L178 211ZM167 209L171 207L161 206L158 208ZM149 206L152 204L144 203L140 205ZM131 203L135 202L127 200L123 202ZM116 201L120 199L113 198L108 199ZM101 198L106 197L99 196L94 197ZM88 196L92 195L86 194L82 195ZM76 194L80 193L74 192L70 193ZM64 192L69 191L64 190L59 191ZM54 190L58 189L53 188L49 189ZM44 188L49 188L44 187L39 188ZM35 187L39 186L35 185L30 186ZM26 186L31 185L27 184L22 185ZM18 184L23 183L19 183L14 184ZM10 183L15 182L12 182L7 182ZM3 182L8 181L5 180L-0 181ZM-3 181L1 180L-2 179L-7 180ZM226 216L228 214L216 212L214 214ZM202 212L205 210L194 209L191 211ZM181 209L184 207L174 205L171 207ZM161 206L165 204L156 203L152 204ZM144 203L147 201L139 200L135 202ZM127 200L131 199L124 198L120 199ZM113 198L117 197L110 195L106 197ZM99 196L103 194L97 193L92 195ZM86 194L91 192L85 192L80 193ZM74 192L79 191L73 190L69 191ZM64 190L68 189L63 188L58 189ZM53 188L58 187L53 187L49 188ZM44 187L49 186L44 185L39 186ZM35 185L40 185L36 184L31 185ZM27 184L31 183L27 183L23 183ZM19 183L24 182L20 181L15 182ZM12 182L16 181L13 180L8 181ZM5 180L9 180L6 179L1 180ZM-2 179L3 179L-0 178L-5 179ZM216 212L218 210L207 208L205 210ZM194 209L196 207L186 205L184 207ZM174 205L177 204L168 202L165 204ZM156 203L159 201L151 200L147 201ZM139 200L143 199L135 197L131 199ZM124 198L128 196L121 195L117 197ZM110 195L114 194L107 193L103 194ZM97 193L101 192L95 191L91 192ZM85 192L89 191L83 190L79 191ZM73 190L78 189L73 188L68 189ZM63 188L67 187L62 187L58 187ZM53 187L58 186L53 185L49 186ZM44 185L49 184L44 184L40 185ZM36 184L40 183L36 183L31 183ZM27 183L32 182L28 181L24 182ZM20 181L24 181L21 180L16 181ZM13 180L17 180L14 179L9 180ZM6 179L10 179L7 178L3 179ZM-0 178L4 178L1 177L-4 178ZM207 208L209 206L199 205L196 207ZM186 205L189 203L180 202L177 204ZM168 202L171 201L162 200L159 201ZM151 200L154 198L146 197L143 199ZM135 197L139 196L131 195L128 196ZM121 195L124 194L118 193L114 194ZM107 193L111 192L105 191L101 192ZM95 191L99 190L93 189L89 191ZM83 190L87 189L82 188L78 189ZM73 188L77 187L72 186L67 187ZM62 187L67 186L62 185L58 186ZM53 185L57 184L53 184L49 184ZM44 184L49 183L44 182L40 183ZM36 183L40 182L36 181L32 182ZM28 181L32 181L29 180L24 181ZM21 180L25 180L22 179L17 180ZM14 179L18 179L15 178L10 179ZM7 178L11 178L8 177L4 178ZM1 177L5 177L2 176L-2 177ZM220 208L222 206L211 205L209 206ZM199 205L201 203L192 202L189 203ZM180 202L182 201L174 199L171 201ZM162 200L165 198L157 197L154 198ZM146 197L149 196L142 195L139 196ZM131 195L135 194L128 193L124 194ZM118 193L121 192L115 191L111 192ZM105 191L109 190L103 189L99 190ZM93 189L97 189L91 188L87 189ZM82 188L86 187L81 186L77 187ZM72 186L76 186L71 185L67 186ZM62 185L66 184L61 184L57 184ZM53 184L57 183L53 182L49 183ZM44 182L49 182L44 181L40 182ZM36 181L40 181L37 180L32 181ZM29 180L33 180L29 179L25 180ZM22 179L26 179L22 178L18 179ZM15 178L19 178L16 177L11 178ZM8 177L12 177L9 176L5 177ZM2 176L6 176L3 175L-1 176ZM-4 175L1 175L-2 175L-6 175ZM211 205L213 203L203 202L201 203ZM192 202L194 200L185 199L182 201ZM174 199L176 198L168 197L165 198ZM157 197L160 196L152 195L149 196ZM142 195L145 194L138 193L135 194ZM128 193L131 192L125 191L121 192ZM115 191L118 190L112 189L109 190ZM103 189L106 188L101 188L97 189ZM91 188L95 187L90 186L86 187ZM81 186L85 185L80 185L76 186ZM71 185L75 184L70 183L66 184ZM61 184L65 183L61 182L57 183ZM53 182L57 182L53 181L49 182ZM44 181L48 180L45 180L40 181ZM37 180L41 179L37 179L33 180ZM29 179L33 178L30 178L26 179ZM22 178L26 177L23 177L19 178ZM16 177L20 177L17 176L12 177ZM9 176L13 176L10 175L6 176ZM3 175L7 175L5 175L1 175ZM-2 175L2 174L-1 174L-5 174ZM223 204L225 203L215 201L213 203ZM203 202L205 200L196 199L194 200ZM185 199L187 198L179 197L176 198ZM168 197L171 196L163 194L160 196ZM152 195L155 193L148 193L145 194ZM138 193L141 192L135 191L131 192ZM125 191L128 190L122 189L118 190ZM112 189L116 188L110 187L106 188ZM101 188L104 187L99 186L95 187ZM90 186L93 185L88 185L85 185ZM80 185L83 184L79 183L75 184ZM70 183L74 183L69 182L65 183ZM61 182L65 182L61 181L57 182ZM53 181L56 180L52 180L48 180ZM45 180L48 179L45 179L41 179ZM37 179L41 178L37 178L33 178ZM30 178L34 177L30 177L26 177ZM23 177L27 176L24 176L20 177ZM17 176L21 176L17 175L13 176ZM10 175L14 175L11 174L7 175ZM5 175L9 174L6 174L2 174ZM-1 174L3 173L0 173L-4 173ZM215 201L217 200L207 199L205 200ZM196 199L198 197L190 196L187 198ZM179 197L181 195L173 194L171 196ZM163 194L166 193L158 192L155 193ZM148 193L151 191L144 191L141 192ZM135 191L138 190L131 189L128 190ZM122 189L125 188L119 187L116 188ZM110 187L113 187L108 186L104 187ZM99 186L102 185L97 184L93 185ZM88 185L92 184L87 183L83 184ZM79 183L82 183L78 182L74 183ZM69 182L73 181L69 181L65 182ZM61 181L64 180L60 180L56 180ZM52 180L56 179L52 179L48 179ZM45 179L48 178L45 178L41 178ZM37 178L41 177L38 177L34 177ZM30 177L34 176L31 176L27 176ZM24 176L28 176L24 175L21 176ZM17 175L21 175L18 174L14 175ZM11 174L15 174L12 174L9 174ZM6 174L9 173L7 173L3 173ZM0 173L4 173L1 172L-2 173ZM207 199L209 197L200 196L198 197ZM190 196L192 195L184 194L181 195ZM173 194L176 193L168 192L166 193ZM158 192L161 191L154 190L151 191ZM144 191L147 190L141 189L138 190ZM131 189L134 188L128 187L125 188ZM119 187L122 186L117 186L113 187ZM108 186L111 185L106 184L102 185ZM97 184L100 184L95 183L92 184ZM87 183L90 182L86 182L82 183ZM78 182L81 181L77 181L73 181ZM69 181L72 180L68 180L64 180ZM60 180L64 179L60 179L56 179ZM52 179L56 178L52 178L48 178ZM45 178L48 177L45 177L41 177ZM38 177L41 176L38 176L34 176ZM31 176L35 175L31 175L28 176ZM24 175L28 175L25 174L21 175ZM18 174L22 174L19 174L15 174ZM12 174L16 173L13 173L9 173ZM7 173L10 172L8 172L4 173ZM1 172L5 172L2 171L-1 172ZM218 198L220 197L211 196L209 197ZM200 196L202 195L194 194L192 195ZM184 194L186 193L178 192L176 193ZM168 192L171 191L164 190L161 191ZM154 190L157 189L150 189L147 190ZM141 189L144 188L137 187L134 188ZM128 187L131 186L125 186L122 186ZM117 186L120 185L114 184L111 185ZM106 184L109 184L104 183L100 184ZM95 183L99 182L94 182L90 182ZM86 182L89 181L85 181L81 181ZM77 181L80 180L76 180L72 180ZM68 180L71 179L67 179L64 179ZM60 179L63 178L59 178L56 178ZM52 178L56 177L52 177L48 177ZM45 177L48 176L45 176L41 176ZM38 176L41 175L38 175L35 175ZM31 175L35 175L32 174L28 175ZM25 174L29 174L26 173L22 174ZM19 174L23 173L20 173L16 173ZM13 173L17 172L14 172L10 172ZM8 172L11 172L9 171L5 172ZM2 171L6 171L4 171L-0 171ZM-3 171L1 170L-1 170L-5 171ZM211 196L213 195L204 194L202 195ZM194 194L196 193L188 192L186 193ZM178 192L180 191L173 190L171 191ZM164 190L166 189L159 188L157 189ZM150 189L153 188L146 187L144 188ZM137 187L140 186L134 185L131 186ZM125 186L128 185L123 184L120 185ZM114 184L117 183L112 183L109 184ZM104 183L107 182L102 182L99 182ZM94 182L97 181L92 181L89 181ZM85 181L88 180L83 179L80 180ZM76 180L79 179L75 178L71 179ZM67 179L71 178L67 177L63 178ZM59 178L63 177L59 177L56 177ZM52 177L55 176L52 176L48 176ZM45 176L48 175L45 175L41 175ZM38 175L42 175L38 174L35 175ZM32 174L35 174L32 173L29 174ZM26 173L29 173L26 173L23 173ZM20 173L23 172L20 172L17 172ZM14 172L18 172L15 171L11 172ZM9 171L12 171L10 171L6 171ZM4 171L7 170L5 170L1 170ZM-1 170L2 170L-0 170L-4 170ZM221 196L223 195L214 194L213 195ZM204 194L206 193L198 192L196 193ZM188 192L190 191L183 190L180 191ZM173 190L175 189L168 188L166 189ZM159 188L162 187L155 187L153 188ZM146 187L149 186L143 185L140 186ZM134 185L137 185L131 184L128 185ZM123 184L126 183L120 183L117 183ZM112 183L115 182L110 182L107 182ZM102 182L105 181L100 180L97 181ZM92 181L96 180L91 179L88 180ZM83 179L87 179L82 178L79 179ZM75 178L78 178L74 177L71 178ZM67 177L70 177L66 177L63 177ZM59 177L63 176L59 176L55 176ZM52 176L55 175L52 175L48 175ZM45 175L48 174L45 174L42 175ZM38 174L42 174L39 173L35 174ZM32 173L35 173L32 173L29 173ZM26 173L29 172L27 172L23 172ZM20 172L24 172L21 171L18 172ZM15 171L18 171L16 171L12 171ZM10 171L13 170L10 170L7 170ZM5 170L8 170L5 170L2 170ZM-0 170L3 169L1 169L-3 169ZM214 194L216 192L208 191L206 193ZM198 192L200 191L192 190L190 191ZM183 190L185 189L178 188L175 189ZM168 188L171 187L164 187L162 187ZM155 187L158 186L151 185L149 186ZM143 185L145 184L140 184L137 185ZM131 184L134 183L128 183L126 183ZM120 183L123 182L118 181L115 182ZM110 182L113 181L108 180L105 181ZM100 180L103 180L99 179L96 180ZM91 179L94 179L90 178L87 179ZM82 178L86 178L81 177L78 178ZM74 177L77 177L73 176L70 177ZM66 177L70 176L66 176L63 176ZM59 176L62 175L59 175L55 175ZM52 175L55 174L52 174L48 174ZM45 174L48 174L45 173L42 174ZM39 173L42 173L39 173L35 173ZM32 173L36 172L33 172L29 172ZM27 172L30 172L27 171L24 172ZM21 171L24 171L22 171L18 171ZM16 171L19 170L16 170L13 170ZM10 170L14 170L11 169L8 170ZM5 170L9 169L6 169L3 169ZM1 169L4 169L2 168L-2 169ZM208 191L209 190L201 190L200 191ZM192 190L194 189L187 188L185 189ZM178 188L180 187L173 186L171 187ZM164 187L166 186L160 185L158 186ZM151 185L154 184L148 184L145 184ZM140 184L142 183L137 182L134 183ZM128 183L131 182L126 181L123 182ZM118 181L121 181L116 180L113 181ZM108 180L111 180L106 179L103 180ZM99 179L102 179L97 178L94 179ZM90 178L93 178L89 177L86 178ZM81 177L84 177L80 176L77 177ZM73 176L77 176L73 175L70 176ZM66 176L69 175L65 175L62 175ZM59 175L62 174L58 174L55 174ZM52 174L55 174L52 173L48 174ZM45 173L48 173L45 172L42 173ZM39 173L42 172L39 172L36 172ZM33 172L36 171L33 171L30 172ZM27 171L30 171L28 171L24 171ZM22 171L25 170L22 170L19 170ZM16 170L20 170L17 169L14 170ZM11 169L15 169L12 169L9 169ZM6 169L10 169L7 168L4 169ZM2 168L5 168L3 168L-1 168ZM-3 168L0 168L-2 167L-5 168ZM217 191L219 190L211 189L209 190ZM201 190L203 189L196 188L194 189ZM187 188L189 187L182 186L180 187ZM173 186L175 186L169 185L166 186ZM160 185L162 184L156 184L154 184ZM148 184L150 183L145 182L142 183ZM137 182L139 182L134 181L131 182ZM126 181L129 181L123 180L121 181ZM116 180L119 180L114 179L111 180ZM106 179L109 179L105 178L102 179ZM97 178L100 178L96 177L93 178ZM89 177L92 177L87 176L84 177ZM80 176L83 176L80 175L77 176ZM73 175L76 175L72 175L69 175ZM65 175L68 174L65 174L62 174ZM58 174L61 173L58 173L55 174ZM52 173L55 173L51 172L48 173ZM45 172L48 172L45 172L42 172ZM39 172L42 171L39 171L36 171ZM33 171L36 171L34 171L30 171ZM28 171L31 170L28 170L25 170ZM22 170L25 170L23 169L20 170ZM17 169L20 169L18 169L15 169ZM12 169L15 169L13 168L10 169ZM7 168L10 168L8 168L5 168ZM3 168L6 168L4 167L0 168ZM-2 167L1 167L-1 167L-4 167ZM211 189L212 188L205 188L203 189ZM196 188L198 187L191 186L189 187ZM182 186L184 185L177 185L175 186ZM169 185L171 184L165 183L162 184ZM156 184L159 183L153 182L150 183ZM145 182L147 182L142 181L139 182ZM134 181L136 181L131 180L129 181ZM123 180L126 179L121 179L119 180ZM114 179L116 178L112 178L109 179ZM105 178L107 178L103 177L100 178ZM96 177L99 177L94 176L92 177ZM87 176L90 176L86 175L83 176ZM80 175L83 175L79 175L76 175ZM72 175L75 174L71 174L68 174ZM65 174L68 173L64 173L61 173ZM58 173L61 173L58 172L55 173ZM51 172L55 172L51 172L48 172ZM45 172L48 171L45 171L42 171ZM39 171L42 171L39 170L36 171ZM34 171L37 170L34 170L31 170ZM28 170L31 170L28 169L25 170ZM23 169L26 169L23 169L20 169ZM18 169L21 169L18 168L15 169ZM13 168L16 168L14 168L10 168ZM8 168L11 168L9 167L6 168ZM4 167L7 167L4 167L1 167ZM-1 167L2 167L0 166L-3 167ZM220 189L221 188L214 188L212 188ZM205 188L206 187L199 186L198 187ZM191 186L192 185L186 185L184 185ZM177 185L179 184L173 183L171 184ZM165 183L167 183L161 182L159 183ZM153 182L155 182L149 181L147 182ZM142 181L144 180L139 180L136 181ZM131 180L134 179L129 179L126 179ZM121 179L124 178L119 178L116 178ZM112 178L115 177L110 177L107 178ZM103 177L106 177L101 176L99 177ZM94 176L97 176L93 175L90 176ZM86 175L89 175L85 174L83 175ZM79 175L82 174L78 174L75 174ZM71 174L74 173L71 173L68 173ZM64 173L67 173L64 172L61 173ZM58 172L61 172L58 172L55 172ZM51 172L54 171L51 171L48 171ZM45 171L48 171L45 170L42 171ZM39 170L42 170L40 170L37 170ZM34 170L37 170L34 169L31 170ZM28 169L31 169L29 169L26 169ZM23 169L26 168L24 168L21 169ZM18 168L21 168L19 168L16 168ZM14 168L17 167L14 167L11 168ZM9 167L12 167L10 167L7 167ZM4 167L8 167L5 166L2 167ZM0 166L3 166L1 166L-2 166ZM214 188L215 187L208 186L206 187ZM199 186L201 185L194 185L192 185ZM186 185L187 184L181 183L179 184ZM173 183L175 183L169 182L167 183ZM161 182L163 181L157 181L155 182ZM149 181L152 180L146 180L144 180ZM139 180L141 179L136 179L134 179ZM129 179L131 178L126 178L124 178ZM119 178L122 177L117 177L115 177ZM110 177L113 176L108 176L106 177ZM101 176L104 176L100 175L97 176ZM93 175L96 175L92 174L89 175ZM85 174L88 174L84 174L82 174ZM78 174L81 173L77 173L74 173ZM71 173L74 173L70 172L67 173ZM64 172L67 172L64 172L61 172ZM58 172L60 171L57 171L54 171ZM51 171L54 171L51 170L48 171ZM45 170L48 170L45 170L42 170ZM40 170L43 169L40 169L37 170ZM34 169L37 169L34 169L31 169ZM29 169L32 168L29 168L26 168ZM24 168L27 168L24 168L21 168ZM19 168L22 167L20 167L17 167ZM14 167L17 167L15 167L12 167ZM10 167L13 167L10 166L8 167ZM5 166L8 166L6 166L3 166ZM1 166L4 166L2 165L-1 166ZM208 186L209 185L202 184L201 185ZM194 185L196 184L189 183L187 184ZM181 183L183 183L177 182L175 183ZM169 182L171 181L165 181L163 181ZM157 181L159 180L154 180L152 180ZM146 180L149 179L143 179L141 179ZM136 179L138 178L134 178L131 178ZM126 178L129 177L124 177L122 177ZM117 177L120 176L115 176L113 176ZM108 176L111 176L107 175L104 176ZM100 175L103 175L99 174L96 175ZM92 174L95 174L91 174L88 174ZM84 174L87 173L83 173L81 173ZM77 173L80 173L76 172L74 173ZM70 172L73 172L70 172L67 172ZM64 172L66 171L63 171L60 171ZM57 171L60 171L57 170L54 171ZM51 170L54 170L51 170L48 170ZM45 170L48 169L45 169L43 169ZM40 169L43 169L40 169L37 169ZM34 169L37 168L35 168L32 168ZM29 168L32 168L30 168L27 168ZM24 168L27 167L25 167L22 167ZM20 167L22 167L20 167L17 167ZM15 167L18 166L16 166L13 167ZM10 166L13 166L11 166L8 166ZM6 166L9 166L7 165L4 166ZM2 165L5 165L3 165L-0 165ZM-2 165L1 165L-1 165L-4 165ZM216 186L218 185L211 184L209 185ZM202 184L204 184L197 183L196 184ZM189 183L191 182L185 182L183 183ZM177 182L179 181L173 181L171 181ZM165 181L167 180L161 180L159 180ZM154 180L156 179L151 179L149 179ZM143 179L146 178L141 178L138 178ZM134 178L136 177L131 177L129 177ZM124 177L127 176L122 176L120 176ZM115 176L118 175L113 175L111 176ZM107 175L109 175L105 174L103 175ZM99 174L101 174L97 173L95 174ZM91 174L94 173L90 173L87 173ZM83 173L86 172L83 172L80 173ZM76 172L79 172L76 171L73 172ZM70 172L72 171L69 171L66 171ZM63 171L66 171L63 170L60 171ZM57 170L60 170L57 170L54 170ZM51 170L54 169L51 169L48 169ZM45 169L48 169L45 169L43 169ZM40 169L43 168L40 168L37 168ZM35 168L38 168L35 168L32 168ZM30 168L32 167L30 167L27 167ZM25 167L28 167L25 167L22 167ZM20 167L23 166L21 166L18 166ZM16 166L18 166L16 166L13 166ZM11 166L14 166L12 165L9 166ZM7 165L10 165L8 165L5 165ZM3 165L6 165L4 165L1 165ZM-1 165L2 164L-0 164L-3 164ZM211 184L212 184L205 183L204 184ZM197 183L199 182L192 182L191 182ZM185 182L186 181L180 181L179 181ZM173 181L175 180L169 179L167 180ZM161 180L163 179L158 178L156 179ZM151 179L153 178L148 178L146 178ZM141 178L143 177L138 177L136 177ZM131 177L133 176L129 176L127 176ZM122 176L124 175L120 175L118 175ZM113 175L116 175L112 174L109 175ZM105 174L108 174L104 173L101 174ZM97 173L100 173L96 173L94 173ZM90 173L92 172L89 172L86 172ZM83 172L85 172L82 171L79 172ZM76 171L78 171L75 171L72 171ZM69 171L72 170L69 170L66 171ZM63 170L66 170L63 170L60 170ZM57 170L60 169L57 169L54 169ZM51 169L54 169L51 169L48 169ZM45 169L48 168L46 168L43 168ZM40 168L43 168L40 168L38 168ZM35 168L38 167L35 167L32 167ZM30 167L33 167L30 167L28 167ZM25 167L28 166L26 166L23 166ZM21 166L23 166L21 166L18 166ZM16 166L19 166L17 165L14 166ZM12 165L15 165L13 165L10 165ZM8 165L10 165L8 165L6 165ZM4 165L6 164L4 164L2 164ZM-0 164L3 164L1 164L-2 164ZM219 184L220 183L213 183L212 184ZM205 183L207 182L200 182L199 182ZM192 182L194 181L188 180L186 181ZM180 181L182 180L176 179L175 180ZM169 179L171 179L165 178L163 179ZM158 178L160 178L155 177L153 178ZM148 178L150 177L145 177L143 177ZM138 177L140 176L136 176L133 176ZM129 176L131 175L127 175L124 175ZM120 175L122 174L118 174L116 175ZM112 174L114 174L110 173L108 174ZM104 173L106 173L102 173L100 173ZM96 173L99 172L95 172L92 172ZM89 172L91 172L88 171L85 172ZM82 171L84 171L81 171L78 171ZM75 171L78 170L74 170L72 170ZM69 170L71 170L68 170L66 170ZM63 170L65 169L62 169L60 169ZM57 169L59 169L56 168L54 169ZM51 169L54 168L51 168L48 168ZM46 168L48 168L46 167L43 168ZM40 168L43 167L40 167L38 167ZM35 167L38 167L35 167L33 167ZM30 167L33 166L31 166L28 166ZM26 166L28 166L26 166L23 166ZM21 166L24 165L22 165L19 166ZM17 165L19 165L17 165L15 165ZM13 165L15 165L13 165L10 165ZM8 165L11 164L9 164L6 164ZM4 164L7 164L5 164L3 164ZM1 164L3 164L1 163L-1 164ZM213 183L215 182L208 181L207 182ZM200 182L202 181L196 180L194 181ZM188 180L190 180L184 179L182 180ZM176 179L178 179L173 178L171 179ZM165 178L167 178L162 177L160 178ZM155 177L157 177L152 176L150 177ZM145 177L147 176L142 176L140 176ZM136 176L138 175L133 175L131 175ZM127 175L129 174L125 174L122 174ZM118 174L121 174L116 173L114 174ZM110 173L112 173L109 173L106 173ZM102 173L105 172L101 172L99 172ZM95 172L97 172L94 171L91 172ZM88 171L90 171L87 171L84 171ZM81 171L84 170L80 170L78 170ZM74 170L77 170L74 169L71 170ZM68 170L71 169L68 169L65 169ZM62 169L65 169L62 168L59 169ZM56 168L59 168L56 168L54 168ZM51 168L54 168L51 167L48 168ZM46 167L48 167L46 167L43 167ZM40 167L43 167L41 167L38 167ZM35 167L38 166L36 166L33 166ZM31 166L33 166L31 166L28 166ZM26 166L29 165L26 165L24 165ZM22 165L24 165L22 165L19 165ZM17 165L20 165L18 164L15 165ZM13 165L16 164L14 164L11 164ZM9 164L12 164L10 164L7 164ZM5 164L8 164L6 163L3 164ZM1 163L4 163L2 163L-0 163ZM-2 163L0 163L-1 163L-4 163ZM221 183L222 182L216 181L215 182ZM208 181L209 181L203 180L202 181ZM196 180L197 180L191 179L190 180ZM184 179L185 179L180 178L178 179ZM173 178L174 178L169 177L167 178ZM162 177L164 177L159 176L157 177ZM152 176L154 176L149 176L147 176ZM142 176L144 175L140 175L138 175ZM133 175L135 174L131 174L129 174ZM125 174L127 174L123 173L121 174ZM116 173L119 173L115 173L112 173ZM109 173L111 172L107 172L105 172ZM101 172L103 172L100 171L97 172ZM94 171L96 171L93 171L90 171ZM87 171L89 170L86 170L84 170ZM80 170L83 170L80 169L77 170ZM74 169L76 169L73 169L71 169ZM68 169L70 169L67 168L65 169ZM62 168L64 168L62 168L59 168ZM56 168L59 168L56 167L54 168ZM51 167L53 167L51 167L48 167ZM46 167L48 167L46 166L43 167ZM41 167L43 166L41 166L38 166ZM36 166L38 166L36 166L33 166ZM31 166L34 165L31 165L29 165ZM26 165L29 165L27 165L24 165ZM22 165L25 165L23 164L20 165ZM18 164L20 164L18 164L16 164ZM14 164L16 164L14 164L12 164ZM10 164L12 164L10 163L8 164ZM6 163L9 163L7 163L4 163ZM2 163L5 163L3 163L0 163ZM216 181L217 181L211 180L209 181ZM203 180L204 180L198 179L197 180ZM191 179L193 179L187 178L185 179ZM180 178L181 178L176 177L174 178ZM169 177L171 177L166 176L164 177ZM159 176L161 176L156 175L154 176ZM149 176L151 175L146 175L144 175ZM140 175L142 174L138 174L135 174ZM131 174L133 174L129 173L127 174ZM123 173L125 173L121 172L119 173ZM115 173L117 172L113 172L111 172ZM107 172L109 171L106 171L103 172ZM100 171L102 171L99 171L96 171ZM93 171L95 170L92 170L89 170ZM86 170L88 170L85 169L83 170ZM80 169L82 169L79 169L76 169ZM73 169L76 169L73 168L70 169ZM67 168L70 168L67 168L64 168ZM62 168L64 168L61 167L59 168ZM56 167L59 167L56 167L53 167ZM51 167L53 167L51 166L48 167ZM46 166L48 166L46 166L43 166ZM41 166L43 166L41 166L38 166ZM36 166L38 165L36 165L34 165ZM31 165L34 165L32 165L29 165ZM27 165L29 165L27 164L25 165ZM23 164L25 164L23 164L20 164ZM18 164L21 164L19 164L16 164ZM14 164L17 164L15 163L12 164ZM10 163L13 163L11 163L9 163ZM7 163L9 163L7 163L5 163ZM211 180L212 180L206 179L204 180ZM198 179L200 179L194 178L193 179ZM187 178L188 178L183 177L181 178ZM176 177L178 177L172 176L171 177ZM166 176L167 176L162 175L161 176ZM156 175L158 175L153 175L151 175ZM146 175L148 174L144 174L142 174ZM138 174L140 173L135 173L133 174ZM129 173L131 173L127 172L125 173ZM121 172L123 172L119 172L117 172ZM113 172L115 171L112 171L109 171ZM106 171L108 171L104 170L102 171ZM99 171L101 170L97 170L95 170ZM92 170L94 170L91 169L88 170ZM85 169L88 169L84 169L82 169ZM79 169L81 169L78 168L76 169ZM73 168L75 168L72 168L70 168ZM67 168L69 168L67 167L64 168ZM61 167L64 167L61 167L59 167ZM56 167L58 167L56 166L53 167ZM51 166L53 166L51 166L48 166ZM46 166L48 166L46 166L43 166ZM41 166L43 165L41 165L38 165ZM36 165L39 165L36 165L34 165ZM32 165L34 165L32 164L29 165ZM27 164L30 164L28 164L25 164ZM23 164L26 164L23 164L21 164ZM19 164L21 163L19 163L17 164ZM15 163L17 163L15 163L13 163ZM11 163L14 163L12 163L9 163ZM218 180L219 179L213 179L212 180ZM206 179L207 178L201 178L200 179ZM194 178L195 177L190 177L188 178ZM183 177L185 177L179 176L178 177ZM172 176L174 176L169 175L167 176ZM162 175L164 175L159 174L158 175ZM153 175L155 174L150 174L148 174ZM144 174L146 173L142 173L140 173ZM135 173L137 173L133 172L131 173ZM127 172L129 172L125 172L123 172ZM119 172L121 171L117 171L115 171ZM112 171L114 171L110 170L108 171ZM104 170L107 170L103 170L101 170ZM97 170L100 170L96 169L94 170ZM91 169L93 169L90 169L88 169ZM84 169L87 168L84 168L81 169ZM78 168L81 168L78 168L75 168ZM72 168L75 167L72 167L69 168ZM67 167L69 167L66 167L64 167ZM61 167L63 167L61 166L58 167ZM56 166L58 166L56 166L53 166ZM51 166L53 166L51 166L48 166ZM46 166L48 165L46 165L43 165ZM41 165L43 165L41 165L39 165ZM36 165L39 165L37 164L34 165ZM32 164L34 164L32 164L30 164ZM28 164L30 164L28 164L26 164ZM23 164L26 163L24 163L21 163ZM19 163L22 163L20 163L17 163ZM213 179L214 178L208 178L207 178ZM201 178L202 177L197 177L195 177ZM190 177L191 176L186 176L185 177ZM179 176L181 176L176 175L174 176ZM169 175L171 175L166 174L164 175ZM159 174L161 174L157 174L155 174ZM150 174L152 173L148 173L146 173ZM142 173L143 173L139 172L137 173ZM133 172L135 172L131 172L129 172ZM125 172L127 171L123 171L121 171ZM117 171L120 171L116 170L114 171ZM110 170L112 170L109 170L107 170ZM103 170L105 169L102 169L100 170ZM96 169L99 169L95 169L93 169ZM90 169L92 168L89 168L87 168ZM84 168L86 168L83 168L81 168ZM78 168L80 167L77 167L75 167ZM72 167L74 167L71 167L69 167ZM66 167L69 167L66 166L63 167ZM61 166L63 166L61 166L58 166ZM56 166L58 166L55 165L53 166ZM51 166L53 165L51 165L48 165ZM46 165L48 165L46 165L43 165ZM41 165L43 164L41 164L39 165ZM37 164L39 164L37 164L34 164ZM32 164L35 164L32 164L30 164ZM28 164L30 163L28 163L26 163ZM24 163L26 163L24 163L22 163ZM220 179L221 178L215 178L214 178ZM208 178L209 177L204 177L202 177ZM197 177L198 176L193 176L191 176ZM186 176L187 176L182 175L181 176ZM176 175L177 175L172 174L171 175ZM166 174L168 174L163 174L161 174ZM157 174L158 173L154 173L152 173ZM148 173L150 173L145 172L143 173ZM139 172L141 172L137 172L135 172ZM131 172L133 171L129 171L127 171ZM123 171L125 171L122 170L120 171ZM116 170L118 170L114 170L112 170ZM109 170L111 169L107 169L105 169ZM102 169L104 169L101 169L99 169ZM95 169L97 168L94 168L92 168ZM89 168L91 168L88 168L86 168ZM83 168L85 167L82 167L80 167ZM77 167L79 167L76 167L74 167ZM71 167L74 166L71 166L69 167ZM66 166L68 166L65 166L63 166ZM61 166L63 166L60 165L58 166ZM55 165L58 165L55 165L53 165ZM51 165L53 165L51 165L48 165ZM46 165L48 164L46 164L43 164ZM41 164L44 164L41 164L39 164ZM37 164L39 164L37 164L35 164ZM32 164L35 163L33 163L30 163ZM28 163L31 163L29 163L26 163ZM215 178L216 177L210 177L209 177ZM204 177L205 176L199 176L198 176ZM193 176L194 175L189 175L187 176ZM182 175L184 175L179 174L177 175ZM172 174L174 174L169 174L168 174ZM163 174L165 173L160 173L158 173ZM154 173L156 172L151 172L150 173ZM145 172L147 172L143 171L141 172ZM137 172L139 171L135 171L133 171ZM129 171L131 171L127 170L125 171ZM122 170L124 170L120 170L118 170ZM114 170L116 169L113 169L111 169ZM107 169L109 169L106 169L104 169ZM101 169L103 168L100 168L97 168ZM94 168L96 168L93 168L91 168ZM88 168L90 167L87 167L85 167ZM82 167L84 167L81 167L79 167ZM76 167L79 166L76 166L74 166ZM71 166L73 166L70 166L68 166ZM65 166L68 166L65 165L63 166ZM60 165L63 165L60 165L58 165ZM55 165L58 165L55 165L53 165ZM51 165L53 164L50 164L48 164ZM46 164L48 164L46 164L44 164ZM41 164L44 164L41 164L39 164ZM37 164L39 163L37 163L35 163ZM33 163L35 163L33 163L31 163ZM210 177L212 176L206 176L205 176ZM199 176L201 175L195 175L194 175ZM189 175L190 175L185 174L184 175ZM179 174L180 174L175 173L174 174ZM169 174L171 173L166 173L165 173ZM160 173L162 172L157 172L156 172ZM151 172L153 172L149 171L147 172ZM143 171L145 171L141 171L139 171ZM135 171L137 170L133 170L131 171ZM127 170L129 170L126 170L124 170ZM120 170L122 169L118 169L116 169ZM113 169L115 169L111 169L109 169ZM106 169L108 168L105 168L103 168ZM100 168L102 168L99 168L96 168ZM93 168L95 167L92 167L90 167ZM87 167L89 167L86 167L84 167ZM81 167L84 166L81 166L79 166ZM76 166L78 166L75 166L73 166ZM70 166L73 166L70 165L68 166ZM65 165L67 165L65 165L63 165ZM60 165L62 165L60 165L58 165ZM55 165L57 164L55 164L53 164ZM50 164L53 164L50 164L48 164ZM46 164L48 164L46 163L44 164ZM41 164L44 163L42 163L39 163ZM37 163L39 163L37 163L35 163ZM217 177L218 176L213 176L212 176ZM206 176L207 175L202 175L201 175ZM195 175L197 175L192 174L190 175ZM185 174L187 174L182 173L180 174ZM175 173L177 173L172 173L171 173ZM166 173L168 172L163 172L162 172ZM157 172L159 172L155 171L153 172ZM149 171L151 171L147 171L145 171ZM141 171L143 170L139 170L137 170ZM133 170L135 170L131 170L129 170ZM126 170L127 169L124 169L122 169ZM118 169L120 169L117 168L115 169ZM111 169L113 168L110 168L108 168ZM105 168L107 168L104 167L102 168ZM99 168L101 167L97 167L95 167ZM92 167L94 167L91 167L89 167ZM86 167L89 166L86 166L84 166ZM81 166L83 166L80 166L78 166ZM75 166L77 166L75 165L73 166ZM70 165L72 165L70 165L67 165ZM65 165L67 165L65 165L62 165ZM60 165L62 164L60 164L57 164ZM55 164L57 164L55 164L53 164ZM50 164L53 164L50 163L48 164ZM46 163L48 163L46 163L44 163ZM42 163L44 163L42 163L39 163ZM213 176L214 175L208 175L207 175ZM202 175L203 174L198 174L197 175ZM192 174L193 174L188 173L187 174ZM182 173L183 173L178 173L177 173ZM172 173L174 172L169 172L168 172ZM163 172L165 172L161 171L159 172ZM155 171L156 171L152 171L151 171ZM147 171L148 170L144 170L143 170ZM139 170L140 170L137 170L135 170ZM131 170L133 169L129 169L127 169ZM124 169L126 169L122 168L120 169ZM117 168L119 168L115 168L113 168ZM110 168L112 168L109 167L107 168ZM104 167L106 167L103 167L101 167ZM97 167L100 167L96 167L94 167ZM91 167L94 166L91 166L89 166ZM86 166L88 166L85 166L83 166ZM80 166L82 165L80 165L77 166ZM75 165L77 165L74 165L72 165ZM70 165L72 165L69 164L67 165ZM65 165L67 164L64 164L62 164ZM60 164L62 164L59 164L57 164ZM55 164L57 164L55 163L53 164ZM50 163L53 163L50 163L48 163ZM46 163L48 163L46 163L44 163ZM219 176L220 175L215 175L214 175ZM208 175L209 174L204 174L203 174ZM198 174L199 174L194 173L193 174ZM188 173L189 173L184 173L183 173ZM178 173L180 172L175 172L174 172ZM169 172L171 172L166 171L165 172ZM161 171L162 171L158 171L156 171ZM152 171L154 170L150 170L148 170ZM144 170L146 170L142 169L140 170ZM137 170L138 169L135 169L133 169ZM129 169L131 169L128 168L126 169ZM122 168L124 168L121 168L119 168ZM115 168L117 168L114 167L112 168ZM109 167L111 167L108 167L106 167ZM103 167L105 167L101 166L100 167ZM96 167L98 166L96 166L94 166ZM91 166L93 166L90 166L88 166ZM85 166L87 165L84 165L82 165ZM80 165L82 165L79 165L77 165ZM74 165L76 165L74 164L72 165ZM69 164L71 164L69 164L67 164ZM64 164L66 164L64 164L62 164ZM59 164L62 164L59 163L57 164ZM55 163L57 163L55 163L53 163ZM50 163L52 163L50 163L48 163ZM215 175L216 174L210 174L209 174ZM204 174L205 174L200 173L199 174ZM194 173L195 173L190 172L189 173ZM184 173L186 172L181 172L180 172ZM175 172L177 171L172 171L171 172ZM166 171L168 171L164 171L162 171ZM158 171L160 170L156 170L154 170ZM150 170L152 170L148 169L146 170ZM142 169L144 169L140 169L138 169ZM135 169L136 169L133 168L131 169ZM128 168L129 168L126 168L124 168ZM121 168L122 168L119 167L117 168ZM114 167L116 167L113 167L111 167ZM108 167L110 167L106 166L105 167ZM101 166L103 166L100 166L98 166ZM96 166L98 166L95 166L93 166ZM90 166L92 165L89 165L87 165ZM84 165L86 165L84 165L82 165ZM79 165L81 165L78 164L76 165ZM74 164L76 164L73 164L71 164ZM69 164L71 164L68 164L66 164ZM64 164L66 164L64 163L62 164ZM59 163L61 163L59 163L57 163ZM55 163L57 163L55 163L52 163ZM210 174L211 173L206 173L205 174ZM200 173L201 173L196 172L195 173ZM190 172L192 172L187 172L186 172ZM181 172L182 171L178 171L177 171ZM172 171L174 171L169 170L168 171ZM164 171L165 170L161 170L160 170ZM156 170L157 170L153 169L152 170ZM148 169L149 169L145 169L144 169ZM140 169L142 169L138 168L136 169ZM133 168L135 168L131 168L129 168ZM126 168L128 168L124 167L122 168ZM119 167L121 167L118 167L116 167ZM113 167L115 167L111 166L110 167ZM106 166L108 166L105 166L103 166ZM100 166L102 166L99 166L98 166ZM95 166L97 165L94 165L92 165ZM89 165L91 165L88 165L86 165ZM84 165L86 165L83 164L81 165ZM78 164L80 164L78 164L76 164ZM73 164L75 164L73 164L71 164ZM68 164L70 164L68 163L66 164ZM64 163L66 163L63 163L61 163ZM59 163L61 163L59 163L57 163ZM217 174L218 173L212 173L211 173ZM206 173L207 173L202 172L201 173ZM196 172L198 172L193 172L192 172ZM187 172L188 171L184 171L182 171ZM178 171L179 171L175 170L174 171ZM169 170L171 170L167 170L165 170ZM161 170L163 170L159 169L157 170ZM153 169L155 169L151 169L149 169ZM145 169L147 168L143 168L142 169ZM138 168L140 168L136 168L135 168ZM131 168L133 168L129 167L128 168ZM124 167L126 167L123 167L121 167ZM118 167L120 167L116 166L115 167ZM111 166L113 166L110 166L108 166ZM105 166L107 166L104 166L102 166ZM99 166L101 165L98 165L97 165ZM94 165L96 165L93 165L91 165ZM88 165L90 165L88 164L86 165ZM83 164L85 164L82 164L80 164ZM78 164L80 164L77 164L75 164ZM73 164L75 163L72 163L70 164ZM68 163L70 163L68 163L66 163ZM63 163L65 163L63 163L61 163ZM212 173L213 173L208 172L207 173ZM202 172L203 172L199 172L198 172ZM193 172L194 171L189 171L188 171ZM184 171L185 171L181 170L179 171ZM175 170L176 170L172 170L171 170ZM167 170L168 170L164 169L163 170ZM159 169L160 169L156 169L155 169ZM151 169L152 168L149 168L147 168ZM143 168L145 168L141 168L140 168ZM136 168L138 167L134 167L133 168ZM129 167L131 167L128 167L126 167ZM123 167L124 167L121 166L120 167ZM116 166L118 166L115 166L113 166ZM110 166L112 166L109 165L107 166ZM104 166L106 165L103 165L101 165ZM98 165L100 165L98 165L96 165ZM93 165L95 165L92 164L90 165ZM88 164L89 164L87 164L85 164ZM82 164L84 164L82 164L80 164ZM77 164L79 163L77 163L75 163ZM72 163L74 163L72 163L70 163ZM218 173L219 173L214 172L213 173ZM208 172L209 172L205 172L203 172ZM199 172L200 171L195 171L194 171ZM189 171L191 171L186 170L185 171ZM181 170L182 170L178 170L176 170ZM172 170L174 169L169 169L168 170ZM164 169L165 169L162 169L160 169ZM156 169L158 168L154 168L152 168ZM149 168L150 168L147 168L145 168ZM141 168L143 167L140 167L138 167ZM134 167L136 167L133 167L131 167ZM128 167L129 166L126 166L124 167ZM121 166L123 166L120 166L118 166ZM115 166L117 166L114 165L112 166ZM109 165L111 165L108 165L106 165ZM103 165L105 165L102 165L100 165ZM98 165L99 164L97 164L95 165ZM92 164L94 164L91 164L89 164ZM87 164L89 164L86 164L84 164ZM82 164L84 163L81 163L79 163ZM77 163L79 163L76 163L74 163ZM214 172L215 172L210 171L209 172ZM205 172L206 171L201 171L200 171ZM195 171L196 171L192 170L191 171ZM186 170L187 170L183 170L182 170ZM178 170L179 169L175 169L174 169ZM169 169L171 169L167 169L165 169ZM162 169L163 168L159 168L158 168ZM154 168L155 168L152 168L150 168ZM147 168L148 167L145 167L143 167ZM140 167L141 167L138 167L136 167ZM133 167L134 166L131 166L129 166ZM126 166L128 166L125 166L123 166ZM120 166L122 166L119 165L117 166ZM114 165L115 165L113 165L111 165ZM108 165L110 165L107 165L105 165ZM102 165L104 164L101 164L99 164ZM97 164L98 164L96 164L94 164ZM91 164L93 164L91 164L89 164ZM86 164L88 163L85 163L84 163ZM81 163L83 163L81 163L79 163ZM210 171L211 171L207 171L206 171ZM201 171L202 171L197 170L196 171ZM192 170L193 170L189 170L187 170ZM183 170L184 169L180 169L179 169ZM175 169L176 169L172 169L171 169ZM167 169L168 168L164 168L163 168ZM159 168L161 168L157 168L155 168ZM152 168L153 167L150 167L148 167ZM145 167L146 167L143 167L141 167ZM138 167L139 166L136 166L134 166ZM131 166L133 166L129 166L128 166ZM125 166L126 166L123 165L122 166ZM119 165L120 165L117 165L115 165ZM113 165L114 165L111 165L110 165ZM107 165L109 164L106 164L104 164ZM101 164L103 164L100 164L98 164ZM96 164L98 164L95 164L93 164ZM91 164L92 163L90 163L88 163ZM85 163L87 163L85 163L83 163ZM216 171L217 171L212 171L211 171ZM207 171L208 170L203 170L202 171ZM197 170L198 170L194 170L193 170ZM189 170L190 169L186 169L184 169ZM180 169L181 169L177 169L176 169ZM172 169L173 168L169 168L168 168ZM164 168L166 168L162 168L161 168ZM157 168L158 167L155 167L153 167ZM150 167L151 167L148 167L146 167ZM143 167L144 166L141 166L139 166ZM136 166L138 166L134 166L133 166ZM129 166L131 166L128 165L126 166ZM123 165L125 165L122 165L120 165ZM117 165L119 165L116 165L114 165ZM111 165L113 164L110 164L109 164ZM106 164L107 164L105 164L103 164ZM100 164L102 164L99 163L98 164ZM95 164L97 163L94 163L92 163ZM90 163L92 163L89 163L87 163ZM212 171L213 170L208 170L208 170ZM203 170L204 170L199 170L198 170ZM194 170L195 169L191 169L190 169ZM186 169L187 169L183 168L181 169ZM177 169L179 168L175 168L173 168ZM169 168L171 168L167 167L166 168ZM162 168L163 167L160 167L158 167ZM155 167L156 167L153 167L151 167ZM148 167L149 166L146 166L144 166ZM141 166L142 166L139 166L138 166ZM134 166L136 165L133 165L131 166ZM128 165L130 165L126 165L125 165ZM122 165L123 165L120 165L119 165ZM116 165L118 164L115 164L113 164ZM110 164L112 164L109 164L107 164ZM105 164L106 164L104 163L102 164ZM99 163L101 163L98 163L97 163ZM94 163L96 163L93 163L92 163ZM218 171L219 170L214 170L213 170ZM208 170L209 170L205 169L204 170ZM199 170L200 169L196 169L195 169ZM191 169L192 169L188 168L187 169ZM183 168L184 168L180 168L179 168ZM175 168L176 168L172 167L171 168ZM167 167L168 167L165 167L163 167ZM160 167L161 167L157 167L156 167ZM153 167L154 166L150 166L149 166ZM146 166L147 166L144 166L142 166ZM139 166L141 165L137 165L136 165ZM133 165L134 165L131 165L130 165ZM126 165L128 165L125 164L123 165ZM120 165L122 164L119 164L118 164ZM115 164L116 164L114 164L112 164ZM109 164L111 164L108 163L106 164ZM104 163L105 163L103 163L101 163ZM98 163L100 163L98 163L96 163ZM214 170L215 170L210 169L209 170ZM205 169L206 169L201 169L200 169ZM196 169L197 169L193 168L192 169ZM188 168L189 168L185 168L184 168ZM180 168L181 168L177 167L176 168ZM172 167L173 167L170 167L168 167ZM165 167L166 167L162 166L161 167ZM157 167L159 166L155 166L154 166ZM150 166L152 166L149 166L147 166ZM144 166L145 165L142 165L141 165ZM137 165L139 165L136 165L134 165ZM131 165L133 165L130 164L128 165ZM125 164L127 164L124 164L122 164ZM119 164L121 164L118 164L116 164ZM114 164L115 164L112 163L111 164ZM108 163L110 163L107 163L105 163ZM103 163L104 163L102 163L100 163ZM219 170L220 170L216 169L215 170ZM210 169L211 169L207 169L206 169ZM201 169L202 169L198 168L197 169ZM193 168L194 168L190 168L189 168ZM185 168L186 168L182 167L181 168ZM177 167L178 167L174 167L173 167ZM170 167L171 167L167 166L166 167ZM162 166L164 166L160 166L159 166ZM155 166L157 166L153 166L152 166ZM149 166L150 165L147 165L145 165ZM142 165L143 165L140 165L139 165ZM136 165L137 165L134 164L133 165ZM130 164L131 164L128 164L127 164ZM124 164L125 164L122 164L121 164ZM118 164L120 164L117 163L115 164ZM112 163L114 163L111 163L110 163ZM107 163L109 163L106 163L104 163ZM216 169L216 169L212 169L211 169ZM207 169L208 169L203 168L202 169ZM198 168L199 168L195 168L194 168ZM190 168L191 168L187 167L186 168ZM182 167L183 167L179 167L178 167ZM174 167L176 167L172 166L171 167ZM167 166L168 166L165 166L164 166ZM160 166L161 166L158 166L157 166ZM153 166L155 165L151 165L150 165ZM147 165L148 165L145 165L143 165ZM140 165L142 165L139 164L137 165ZM134 164L136 164L133 164L131 164ZM128 164L130 164L127 164L125 164ZM122 164L124 163L121 163L120 164ZM117 163L118 163L116 163L114 163ZM111 163L113 163L110 163L109 163ZM212 169L213 168L209 168L208 169ZM203 168L204 168L200 168L199 168ZM195 168L196 167L192 167L191 168ZM187 167L188 167L184 167L183 167ZM179 167L181 167L177 166L176 167ZM172 166L173 166L170 166L168 166ZM165 166L166 166L163 165L161 166ZM158 166L159 165L156 165L155 165ZM151 165L153 165L149 165L148 165ZM145 165L146 165L143 164L142 165ZM139 164L140 164L137 164L136 164ZM133 164L134 164L131 164L130 164ZM127 164L128 163L125 163L124 163ZM121 163L123 163L120 163L118 163ZM217 169L218 168L214 168L213 168ZM209 168L209 168L205 168L204 168ZM200 168L201 167L197 167L196 167ZM192 167L193 167L189 167L188 167ZM184 167L185 167L182 166L181 167ZM177 166L178 166L174 166L173 166ZM170 166L171 166L167 165L166 166ZM163 165L164 165L160 165L159 165ZM156 165L157 165L154 165L153 165ZM149 165L151 164L148 164L146 165ZM143 164L144 164L141 164L140 164ZM137 164L138 164L135 164L134 164ZM131 164L132 163L130 163L128 163ZM125 163L127 163L124 163L123 163ZM214 168L214 168L210 168L209 168ZM205 168L206 167L202 167L201 167ZM197 167L198 167L194 167L193 167ZM189 167L190 166L186 166L185 167ZM182 166L183 166L179 166L178 166ZM174 166L175 166L172 165L171 166ZM167 165L168 165L165 165L164 165ZM160 165L162 165L158 165L157 165ZM154 165L155 164L152 164L151 164ZM148 164L149 164L146 164L144 164ZM141 164L143 164L140 164L138 164ZM135 164L137 163L134 163L132 163ZM130 163L131 163L128 163L127 163ZM219 168L219 168L215 168L214 168ZM210 168L211 167L207 167L206 167ZM202 167L203 167L199 167L198 167ZM194 167L195 166L191 166L190 166ZM186 166L187 166L184 166L183 166ZM179 166L180 166L177 165L175 166ZM172 165L173 165L170 165L168 165ZM165 165L166 165L163 165L162 165ZM158 165L160 164L156 164L155 164ZM152 164L153 164L150 164L149 164ZM146 164L147 164L144 164L143 164ZM140 164L141 163L138 163L137 163ZM134 163L135 163L132 163L131 163ZM215 168L216 167L212 167L211 167ZM207 167L208 167L204 167L203 167ZM199 167L200 166L196 166L195 166ZM191 166L192 166L188 166L187 166ZM184 166L185 166L181 165L180 166ZM177 165L178 165L174 165L173 165ZM170 165L171 165L167 165L166 165ZM163 165L164 164L161 164L160 164ZM156 164L158 164L155 164L153 164ZM150 164L151 164L148 163L147 164ZM144 164L145 163L142 163L141 163ZM138 163L140 163L137 163L135 163ZM212 167L213 167L209 167L208 167ZM204 167L205 166L201 166L200 166ZM196 166L197 166L193 166L192 166ZM188 166L189 166L186 165L185 166ZM181 165L182 165L179 165L178 165ZM174 165L175 165L172 165L171 165ZM167 165L169 164L165 164L164 164ZM161 164L162 164L159 164L158 164ZM155 164L156 164L153 163L151 164ZM148 163L150 163L147 163L145 163ZM142 163L144 163L141 163L140 163ZM217 167L217 167L213 167L213 167ZM209 167L209 166L205 166L205 166ZM201 166L202 166L198 166L197 166ZM193 166L194 165L190 165L189 166ZM186 165L187 165L183 165L182 165ZM179 165L180 165L176 164L175 165ZM172 165L173 164L170 164L169 164ZM165 164L166 164L163 164L162 164ZM159 164L160 164L157 163L156 164ZM153 163L154 163L151 163L150 163ZM147 163L148 163L145 163L144 163ZM213 167L214 166L210 166L209 166ZM205 166L206 166L202 166L202 166ZM198 166L199 165L195 165L194 165ZM190 165L191 165L188 165L187 165ZM183 165L184 165L181 164L180 165ZM176 164L177 164L174 164L173 164ZM170 164L171 164L168 164L166 164ZM163 164L164 164L161 163L160 164ZM157 163L158 163L155 163L154 163ZM151 163L152 163L149 163L148 163ZM218 166L219 166L215 166L214 166ZM210 166L211 166L207 166L206 166ZM202 166L203 165L200 165L199 165ZM195 165L196 165L192 165L191 165ZM188 165L189 165L185 164L184 165ZM181 164L182 164L178 164L177 164ZM174 164L175 164L172 164L171 164ZM168 164L169 164L165 163L164 164ZM161 163L162 163L159 163L158 163ZM155 163L156 163L153 163L152 163ZM215 166L216 166L212 166L211 166ZM207 166L208 165L204 165L203 165ZM200 165L200 165L197 165L196 165ZM192 165L193 165L190 164L189 165ZM185 164L186 164L183 164L182 164ZM178 164L179 164L176 164L175 164ZM172 164L173 164L170 163L169 164ZM165 163L167 163L163 163L162 163ZM159 163L160 163L157 163L156 163ZM212 166L212 165L209 165L208 165ZM204 165L205 165L201 165L200 165ZM197 165L198 165L194 164L193 165ZM190 164L191 164L187 164L186 164ZM183 164L184 164L180 164L179 164ZM176 164L177 163L174 163L173 164ZM170 163L171 163L168 163L167 163ZM163 163L165 163L162 163L160 163ZM216 166L217 165L213 165L212 165ZM209 165L209 165L206 165L205 165ZM201 165L202 165L198 164L198 165ZM194 164L195 164L191 164L191 164ZM187 164L188 164L185 164L184 164ZM180 164L181 163L178 163L177 163ZM174 163L175 163L172 163L171 163ZM213 165L214 165L210 165L209 165ZM206 165L206 164L203 164L202 165ZM198 164L199 164L196 164L195 164ZM191 164L192 164L189 164L188 164ZM185 164L186 163L182 163L181 163ZM178 163L179 163L176 163L175 163ZM218 165L218 165L215 165L214 165ZM210 165L211 164L207 164L206 164ZM203 164L204 164L200 164L199 164ZM196 164L197 164L193 164L192 164ZM189 164L190 163L187 163L186 163ZM182 163L183 163L180 163L179 163ZM215 165L215 164L212 164L211 164ZM207 164L208 164L204 164L204 164ZM200 164L201 164L197 164L197 164ZM193 164L194 163L191 163L190 163ZM187 163L187 163L184 163L183 163ZM212 164L212 164L209 164L208 164ZM204 164L205 164L202 163L201 164ZM197 164L198 163L195 163L194 163ZM191 163L192 163L188 163L187 163ZM216 164L217 164L213 164L212 164ZM209 164L209 164L206 163L205 164ZM202 163L202 163L199 163L198 163ZM195 163L196 163L192 163L192 163ZM213 164L214 164L210 163L209 164ZM206 163L207 163L203 163L202 163ZM199 163L200 163L197 163L196 163ZM217 164L218 164L214 163L214 164ZM210 163L211 163L207 163L207 163ZM203 163L204 163L201 163L200 163ZM214 163L215 163L211 163L211 163ZM207 163L208 163L205 163L204 163ZM218 163L219 163L216 163L215 163ZM211 163L212 163L209 163L208 163Z" fill="#a0a09f"/>
<rect x="0" y="0" width="215" height="402" fill="url(#glow)"/>
<polygon points="0.0,174.0 60.0,165.0 119.0,167.0 215.0,183.0 215.0,211.0 127.0,195.0 104.0,180.0 60.0,186.0 0.0,210.0" fill="#34486e" fill-opacity="0.45"/>
<polygon points="52.0,117.0 158.0,109.0 215.0,103.0 215.0,183.0 119.0,167.0 60.0,165.0" fill="#51a872"/>
<clipPath id="wallclip"><polygon points="52.0,117.0 158.0,109.0 215.0,103.0 215.0,183.0 119.0,167.0 60.0,165.0"/></clipPath>
<ellipse cx="186.0" cy="170.0" rx="66" ry="66" fill="#f9a66e" clip-path="url(#wallclip)"/>
<polygon points="0.0,114.0 52.0,117.0 60.0,181.0 0.0,201.0" fill="#f7818f"/>
<ellipse cx="101.0" cy="241.0" rx="13" ry="24" transform="rotate(30 101.0 241.0)" fill="url(#shad)"/>
<path d="M101.0 210.0 V181.0 A13.5 13.5 0 0 1 128.0 181.0 V210.0 A13.5 9 0 0 1 101.0 210.0 Z" fill="url(#caps)"/>
<path d="M104.0 219.0 H110.0 M121.0 219.0 H128.0" stroke="#e23a2a" stroke-width="1.5" opacity="0.9"/>
<circle cx="115.0" cy="219.0" r="3.5" fill="#e8716a" opacity="0.45"/>
<path d="M12.0,102.0 L85.0,132.0 L215.0,132.0 M85.0,132.0 L37.0,282.0 L0.0,298.0 M37.0,282.0 L215.0,401.0" stroke="#e8e8e8" stroke-width="1" fill="none" opacity="0.85"/>
</svg>
<!-- scene overlays -->
<div class="a" style="left:590px;top:128px;width:38px;height:147px;background:rgba(12,12,16,0.86);border-radius:4px"></div>
<svg style="left:601px;top:133px" width="16" height="5"><path d="M0 0.5H16M0 3.5H16" stroke="#8a94a6" stroke-width="1"/></svg>
<div class="a" style="left:593px;top:146px;width:32px;height:125px;background:#585858;border-radius:3px"></div>
<div class="a" style="left:593px;top:166px;width:32px;height:21px;background:#46607c"></div>
<div class="a" style="left:593px;top:166px;width:32px;height:1px;background:#2a2a2a"></div>
<div class="a" style="left:593px;top:187px;width:32px;height:1px;background:#2a2a2a"></div>
<div class="a" style="left:593px;top:208px;width:32px;height:1px;background:#2a2a2a"></div>
<div class="a" style="left:593px;top:229px;width:32px;height:1px;background:#2a2a2a"></div>
<div class="a" style="left:593px;top:250px;width:32px;height:1px;background:#2a2a2a"></div>
<svg style="left:601px;top:147px" width="16" height="17" viewBox="0 0 16 17"><rect x="1.6" y="3.5" width="2.3" height="8" rx="1.15" fill="#d8d8d8"/><rect x="4.6" y="1" width="2.3" height="9" rx="1.15" fill="#d8d8d8"/><rect x="7.6" y="0.5" width="2.3" height="9.5" rx="1.15" fill="#d8d8d8"/><rect x="10.6" y="1.5" width="2.3" height="9" rx="1.15" fill="#d8d8d8"/><path d="M1.8 9C1.8 13.5 4 15.8 7.5 15.8C11 15.8 12.8 13.5 13 11.5L14.8 7.5C15.2 6.5 14.2 6 13.6 6.8L12.5 8.5V8H1.8Z" fill="#d8d8d8"/></svg>
<svg style="left:601px;top:169px" width="16" height="16" viewBox="0 0 16 16"><path d="M8 1V15M1 8H15M5.8 3.2L8 1L10.2 3.2M5.8 12.8L8 15L10.2 12.8M3.2 5.8L1 8L3.2 10.2M12.8 5.8L15 8L12.8 10.2" stroke="#e6e6e6" stroke-width="1.1" fill="none"/></svg>
<svg style="left:601px;top:190px" width="16" height="16" viewBox="0 0 16 16"><path d="M11.5 2.8A6 6 0 0 1 9.5 13.8M4.5 13.2A6 6 0 0 1 6.5 2.2M9.5 11.3V14L12 14.5M6.5 4.7V2L4 1.5" stroke="#c8c8c8" stroke-width="1.1" fill="none"/></svg>
<svg style="left:601px;top:211px" width="16" height="16" viewBox="0 0 16 16"><rect x="1.5" y="1.5" width="13" height="13" stroke="#c8c8c8" fill="none" stroke-width="1.1"/><rect x="1.5" y="9" width="5.5" height="5.5" stroke="#c8c8c8" fill="none" stroke-width="1.1"/><path d="M7 9L12 4M9 4H12V7" stroke="#c8c8c8" stroke-width="1.1" fill="none"/></svg>
<svg style="left:601px;top:232px" width="16" height="16" viewBox="0 0 16 16"><rect x="3" y="3" width="10" height="10" stroke="#c8c8c8" fill="none" stroke-width="1.1"/><rect x="1.2" y="1.2" width="3.3" height="3.3" fill="#c8c8c8"/><rect x="11.5" y="1.2" width="3.3" height="3.3" fill="#c8c8c8"/><rect x="1.2" y="11.5" width="3.3" height="3.3" fill="#c8c8c8"/><rect x="11.5" y="11.5" width="3.3" height="3.3" fill="#c8c8c8"/></svg>
<svg style="left:600px;top:253px" width="18" height="16" viewBox="0 0 18 16"><circle cx="9" cy="8" r="6" stroke="#c8c8c8" fill="none" stroke-width="1.1"/><path d="M9 3V13M4 8H14M7.5 4.5L9 3L10.5 4.5M7.5 11.5L9 13L10.5 11.5M5.5 6.5L4 8L5.5 9.5M12.5 6.5L14 8L12.5 9.5M1.5 15.5L4 13M16.5 0.5L14 3" stroke="#c8c8c8" stroke-width="1" fill="none"/></svg>
<!-- scene handle, lock -->
<svg style="left:703px;top:134px" width="16" height="5"><path d="M0 0.5H16M0 3.5H16" stroke="#3d4d66" stroke-width="1"/></svg>
<svg style="left:780px;top:142px" width="8" height="9"><path d="M2 4V2.8C2 1.6 2.8 0.8 4 0.8C5.2 0.8 6 1.6 6 2.8" stroke="#f0f0f0" fill="none"/><rect x="1" y="4" width="6" height="4.5" fill="#f0f0f0"/></svg>
<!-- gizmo -->
<svg style="left:715px;top:130px" width="88" height="110" viewBox="0 0 88 110">
 <path d="M31 45L21 39L21 51Z" fill="#d0d3d8"/>
 <ellipse cx="21" cy="45" rx="4" ry="5.5" fill="#eceef0"/>
 <path d="M28 50L16.5 50L16.5 66L28 50Z" fill="none"/>
 <path d="M30 53L18 50L13 67L18 63Z" fill="#9a9ea6"/>
 <path d="M30 52L14 50L13 67Z" fill="#a0a4aa"/>
 <ellipse cx="16.5" cy="58" rx="6" ry="8.5" fill="#dfe2e6"/>
 <path d="M34 57L32 70H42L40 57Z" fill="#d8dbe0"/>
 <ellipse cx="37" cy="70" rx="5" ry="2.5" fill="#e8eaed"/>
 <path d="M28 42L37 38L46 42V55L37 59L28 55Z" fill="#e9ebee"/>
 <path d="M37 46V59L46 55V42Z" fill="#cfd3d8"/>
 <path d="M28 42L37 38L46 42L37 46Z" fill="#c4c8ce"/>
 <path d="M45.5 50L65 47L65 61Z" fill="#c9584c"/>
 <ellipse cx="65" cy="54" rx="1.8" ry="7" fill="#d46a5e"/>
 <path d="M30 19H44L37 39Z" fill="#8fd45c"/>
 <ellipse cx="37" cy="19" rx="7" ry="1.8" fill="#a5e07a"/>
 <circle cx="48.5" cy="42.5" r="4.2" fill="#4a7ff0"/>
 <text x="32.5" y="16" font-size="11" fill="#f4f4f4" font-family="Liberation Sans">y</text>
 <text x="51.5" y="43" font-size="11" fill="#f4f4f4" font-family="Liberation Sans">z</text>
 <text x="68" y="61" font-size="11" fill="#f4f4f4" font-family="Liberation Sans">x</text>
</svg>
<div class="a" style="left:727px;top:222px;font-size:11.5px;color:#e8eef6;opacity:0.75;white-space:pre">&lt; Persp</div>


<!-- ===== GAME ===== -->
<div class="a" style="left:805px;top:81px;width:355px;height:19px;background:#282828;border-radius:4px 4px 0 0"></div>
<div class="a" style="left:805px;top:81px;width:74px;height:19px;background:#3c3c3c;border-radius:3px 3px 0 0"></div>
<svg style="left:811px;top:86px" width="15" height="10" viewBox="0 0 15 10"><path d="M4 0.5H11C13.2 0.5 14.5 2.5 14.5 5C14.5 7.5 13.2 9.5 11 9.5C9.8 9.5 9 8.5 8.5 7.8H6.5C6 8.5 5.2 9.5 4 9.5C1.8 9.5 0.5 7.5 0.5 5C0.5 2.5 1.8 0.5 4 0.5Z" fill="#c4c4c4"/><path d="M2.5 5H6M4.25 3.2V6.8" stroke="#3c3c3c" stroke-width="1.2"/><circle cx="10" cy="4" r="0.9" fill="#3c3c3c"/><circle cx="12" cy="6" r="0.9" fill="#3c3c3c"/></svg>
<div class="a u" style="left:829px;top:85px;color:#d2d2d2;font-size:12.5px">Game</div>
<svg style="left:1146px;top:84px" width="3" height="12"><circle cx="1.5" cy="1.5" r="1.2" fill="#c4c4c4"/><circle cx="1.5" cy="6" r="1.2" fill="#c4c4c4"/><circle cx="1.5" cy="10.5" r="1.2" fill="#c4c4c4"/></svg>
<div class="a" style="left:805px;top:100px;width:355px;height:20px;background:#3c3c3c;border-bottom:1px solid #242424"></div>
<div class="a" style="left:895px;top:100px;width:1px;height:20px;background:#262626"></div>
<div class="a" style="left:981px;top:100px;width:1px;height:20px;background:#262626"></div>
<div class="a" style="left:1142px;top:100px;width:1px;height:20px;background:#262626"></div>
<div class="a u" style="left:809px;top:104px;color:#c4c4c4;font-size:12.5px">Game</div>
<svg style="left:882px;top:108px" width="9" height="6"><path d="M0 0H8.5L4.25 5.5Z" fill="#c4c4c4"/></svg>
<div class="a u" style="left:905px;top:104px;color:#c4c4c4;font-size:12.5px">Display 1</div>
<svg style="left:967px;top:108px" width="9" height="6"><path d="M0 0H8.5L4.25 5.5Z" fill="#c4c4c4"/></svg>
<div class="a u" style="left:985px;top:104px;color:#c4c4c4;font-size:12.5px">Full HD (1920x1080)</div>
<svg style="left:1128px;top:108px" width="9" height="6"><path d="M0 0H8.5L4.25 5.5Z" fill="#c4c4c4"/></svg>
<div class="a" style="left:1143px;top:101px;width:17px;height:18px;overflow:hidden"><div class="a u" style="left:4px;top:2px;color:#c4c4c4;font-size:12.5px">Sc</div></div>
<div class="a" style="left:805px;top:120px;width:355px;height:408px;background:#262626"></div>
<svg style="left:805px;top:224px;overflow:hidden" width="355" height="200" viewBox="0 0 355 200">
<defs><linearGradient id="gsky" x1="0" y1="0" x2="0" y2="1"><stop offset="0" stop-color="#f4fbf8"/><stop offset="0.45" stop-color="#d4dcd8"/><stop offset="0.8" stop-color="#8e8c86"/><stop offset="1" stop-color="#6e645c"/></linearGradient><radialGradient id="gglow" cx="0.38" cy="0.62" r="0.55"><stop offset="0" stop-color="#f6f0dc" stop-opacity="0.45"/><stop offset="1" stop-color="#f6f0dc" stop-opacity="0"/></radialGradient><linearGradient id="gshad" x1="0" y1="0" x2="0" y2="1"><stop offset="0" stop-color="#3a4a6a" stop-opacity="0.7"/><stop offset="1" stop-color="#3a4a6a" stop-opacity="0.0"/></linearGradient></defs>
<rect x="0" y="0" width="355" height="200" fill="#aaaaaa"/>
<rect x="0" y="46" width="355" height="200" fill="#c3c3c1"/><path d="M-4 48L1 48L2 47L-2 47ZM-1 46L3 46L4 45L-0 45ZM-6 55L-1 54L0 53L-4 53ZM-3 52L2 52L3 50L-2 51ZM-0 49L4 49L5 48L1 48ZM2 47L6 47L7 46L3 46ZM-5 59L0 58L1 57L-3 57ZM-2 56L3 55L4 54L-1 54ZM0 53L5 53L6 51L2 52ZM3 50L8 50L9 49L4 49ZM5 48L10 48L11 47L6 47ZM-4 63L1 62L3 61L-3 61ZM-1 60L4 59L5 58L0 58ZM1 57L6 56L8 55L3 55ZM4 54L9 54L10 52L5 53ZM6 51L11 51L12 50L8 50ZM9 49L13 49L14 47L10 48ZM11 47L15 46L16 45L12 45ZM-6 71L-1 71L1 69L-5 69ZM-3 67L2 67L4 65L-2 66ZM-0 64L5 64L6 62L1 62ZM3 61L8 61L9 59L4 59ZM5 58L10 58L11 56L6 56ZM8 55L12 55L13 53L9 54ZM10 52L15 52L16 51L11 51ZM12 50L17 50L18 48L13 49ZM14 47L19 47L20 46L15 46ZM-5 76L0 76L2 74L-4 74ZM-2 73L4 72L5 70L-1 71ZM1 69L6 68L8 67L2 67ZM4 65L9 65L10 63L5 64ZM6 62L11 62L13 60L8 61ZM9 59L14 59L15 57L10 58ZM11 56L16 56L17 54L12 55ZM13 53L18 53L19 52L15 52ZM16 51L20 51L21 49L17 50ZM18 48L22 48L23 47L19 47ZM20 46L24 46L25 45L20 45ZM-8 87L-2 87L0 84L-6 85ZM-4 82L2 82L3 80L-3 80ZM-1 78L5 78L6 76L0 76ZM2 74L8 74L9 72L4 72ZM5 70L10 70L12 68L6 68ZM8 67L13 66L14 65L9 65ZM10 63L15 63L17 61L11 62ZM13 60L18 60L19 58L14 59ZM15 57L20 57L21 56L16 56ZM17 54L22 54L23 53L18 53ZM19 52L24 52L25 50L20 51ZM21 49L26 49L26 48L22 48ZM23 47L27 47L28 46L24 46ZM-7 94L-0 94L1 91L-5 92ZM-3 89L3 88L5 86L-2 87ZM0 84L6 84L8 81L2 82ZM3 80L9 79L11 77L5 78ZM6 76L12 75L13 73L8 74ZM9 72L15 71L16 69L10 70ZM12 68L17 68L18 66L13 66ZM14 65L20 64L21 63L15 63ZM17 61L22 61L23 60L18 60ZM19 58L24 58L25 57L20 57ZM21 56L26 55L27 54L22 54ZM23 53L27 53L28 51L24 52ZM25 50L29 50L30 49L26 49ZM26 48L31 48L32 46L27 47ZM-6 102L1 101L3 98L-4 99ZM-2 96L5 96L6 93L-0 94ZM1 91L8 90L9 88L3 88ZM5 86L11 86L12 83L6 84ZM8 81L14 81L15 79L9 79ZM11 77L17 77L18 75L12 75ZM13 73L19 73L20 71L15 71ZM16 69L21 69L23 67L17 68ZM18 66L24 66L25 64L20 64ZM21 63L26 62L27 61L22 61ZM23 60L28 59L29 58L24 58ZM25 57L30 56L30 55L26 55ZM27 54L31 54L32 52L27 53ZM28 51L33 51L34 50L29 50ZM30 49L34 49L35 47L31 48ZM32 46L36 46L37 45L32 45ZM-10 118L-2 117L0 114L-7 114ZM-5 111L2 110L4 107L-3 108ZM-1 104L6 104L8 101L1 101ZM3 98L10 98L11 95L5 96ZM6 93L13 92L14 90L8 90ZM9 88L16 87L17 85L11 86ZM12 83L19 83L20 81L14 81ZM15 79L21 78L22 76L17 77ZM18 75L24 74L25 72L19 73ZM20 71L26 71L27 69L21 69ZM23 67L28 67L29 65L24 66ZM25 64L30 64L31 62L26 62ZM27 61L32 60L33 59L28 59ZM29 58L33 58L34 56L30 56ZM30 55L35 55L36 53L31 54ZM32 52L37 52L37 51L33 51ZM34 50L38 50L39 48L34 49ZM35 47L40 47L40 46L36 46ZM-9 129L-0 128L2 124L-6 125ZM-4 121L4 120L6 116L-2 117ZM0 114L8 113L10 109L2 110ZM4 107L12 106L13 103L6 104ZM8 101L15 100L17 97L10 98ZM11 95L18 95L19 92L13 92ZM14 90L21 89L22 87L16 87ZM17 85L23 85L25 82L19 83ZM20 81L26 80L27 78L21 78ZM22 76L28 76L29 74L24 74ZM25 72L30 72L31 70L26 71ZM27 69L32 68L33 67L28 67ZM29 65L34 65L35 63L30 64ZM31 62L36 62L37 60L32 60ZM33 59L38 59L38 57L33 58ZM34 56L39 56L40 54L35 55ZM36 53L41 53L41 52L37 52ZM37 51L42 50L43 49L38 50ZM39 48L43 48L44 47L40 47ZM-7 141L2 140L4 136L-5 137ZM-2 132L6 131L8 127L-0 128ZM2 124L10 123L12 119L4 120ZM6 116L14 116L16 112L8 113ZM10 109L17 109L19 106L12 106ZM13 103L20 102L22 100L15 100ZM17 97L23 97L25 94L18 95ZM19 92L26 91L27 89L21 89ZM22 87L28 86L30 84L23 85ZM25 82L31 82L32 80L26 80ZM27 78L33 78L34 75L28 76ZM29 74L35 74L36 72L30 72ZM31 70L37 70L38 68L32 68ZM33 67L38 66L39 65L34 65ZM35 63L40 63L41 61L36 62ZM37 60L42 60L42 58L38 59ZM38 57L43 57L44 55L39 56ZM40 54L45 54L45 53L41 53ZM41 52L46 51L46 50L42 50ZM43 49L47 49L48 48L43 48ZM44 47L48 47L49 46L45 46ZM-12 168L-2 166L1 160L-9 162ZM-6 156L4 155L6 149L-3 150ZM-1 145L8 144L11 139L2 140ZM4 136L13 135L15 130L6 131ZM8 127L17 126L18 122L10 123ZM12 119L20 118L22 115L14 116ZM16 112L23 111L25 108L17 109ZM19 106L26 105L28 102L20 102ZM22 100L29 99L30 96L23 97ZM25 94L31 93L32 91L26 91ZM27 89L34 88L35 86L28 86ZM30 84L36 84L37 81L31 82ZM32 80L38 79L39 77L33 78ZM34 75L40 75L40 73L35 74ZM36 72L41 71L42 69L37 70ZM38 68L43 68L44 66L38 66ZM39 65L44 64L45 63L40 63ZM41 61L46 61L47 60L42 60ZM42 58L47 58L48 57L43 57ZM44 55L49 55L49 54L45 54ZM45 53L50 53L50 51L46 51ZM46 50L51 50L51 49L47 49ZM48 48L52 48L53 46L48 47ZM-11 187L0 185L3 178L-8 180ZM-4 173L6 171L9 165L-2 166ZM1 160L11 159L13 153L4 155ZM6 149L15 148L18 143L8 144ZM11 139L19 138L21 134L13 135ZM15 130L23 129L25 125L17 126ZM18 122L26 121L28 118L20 118ZM22 115L29 114L31 111L23 111ZM25 108L32 107L33 104L26 105ZM28 102L34 101L36 98L29 99ZM30 96L37 96L38 93L31 93ZM32 91L39 90L40 88L34 88ZM35 86L41 85L42 83L36 84ZM37 81L43 81L44 79L38 79ZM39 77L44 77L45 75L40 75ZM40 73L46 73L47 71L41 71ZM42 69L48 69L48 67L43 68ZM44 66L49 66L50 64L44 64ZM45 63L50 62L51 61L46 61ZM47 60L51 59L52 58L47 58ZM48 57L53 56L53 55L49 55ZM49 54L54 54L54 52L50 53ZM50 51L55 51L55 50L51 50ZM51 49L56 48L56 47L52 48ZM53 46L57 46L57 45L53 45ZM-9 210L3 208L6 199L-6 201ZM-3 193L9 191L12 184L0 185ZM3 178L14 177L16 170L6 171ZM9 165L19 164L21 158L11 159ZM13 153L23 152L25 147L15 148ZM18 143L26 142L28 137L19 138ZM21 134L30 133L31 129L23 129ZM25 125L33 124L34 121L26 121ZM28 118L36 117L37 113L29 114ZM31 111L38 110L39 107L32 107ZM33 104L40 104L41 101L34 101ZM36 98L42 98L43 95L37 96ZM38 93L44 92L45 90L39 90ZM40 88L46 87L47 85L41 85ZM42 83L48 83L49 80L43 81ZM44 79L49 78L50 76L44 77ZM45 75L51 74L52 72L46 73ZM47 71L52 70L53 69L48 69ZM48 67L53 67L54 65L49 66ZM50 64L55 64L55 62L50 62ZM51 61L56 60L56 59L51 59ZM52 58L57 57L57 56L53 56ZM53 55L58 55L58 53L54 54ZM54 52L59 52L59 51L55 51ZM55 50L60 49L60 48L56 48ZM56 47L61 47L61 46L57 46ZM6 199L18 197L20 189L9 191ZM12 184L23 182L25 175L14 177ZM16 170L27 169L29 162L19 164ZM21 158L30 157L32 151L23 152ZM25 147L34 146L35 141L26 142ZM28 137L37 136L38 132L30 133ZM31 129L40 128L41 124L33 124ZM34 121L42 120L43 116L36 117ZM37 113L44 113L45 109L38 110ZM39 107L46 106L47 103L40 104ZM41 101L48 100L49 97L42 98ZM43 95L50 94L51 92L44 92ZM45 90L52 89L52 87L46 87ZM47 85L53 84L54 82L48 83ZM49 80L54 80L55 78L49 78ZM50 76L56 76L56 74L51 74ZM52 72L57 72L58 70L52 70ZM53 69L58 68L59 67L53 67ZM54 65L59 65L60 63L55 64ZM55 62L60 62L61 60L56 60ZM56 59L61 59L62 57L57 57ZM57 56L62 56L62 54L58 55ZM58 53L63 53L63 52L59 52ZM59 51L64 50L64 49L60 49ZM60 48L64 48L65 47L61 47ZM15 206L27 204L29 196L18 197ZM20 189L31 188L33 181L23 182ZM25 175L35 174L37 167L27 169ZM29 162L39 161L40 155L30 157ZM32 151L41 150L43 145L34 146ZM35 141L44 140L45 135L37 136ZM38 132L47 131L48 127L40 128ZM41 124L49 123L50 119L42 120ZM43 116L51 115L52 112L44 113ZM45 109L53 109L53 105L46 106ZM47 103L54 102L55 99L48 100ZM49 97L56 97L56 94L50 94ZM51 92L57 91L58 89L52 89ZM52 87L59 86L59 84L53 84ZM54 82L60 82L60 79L54 80ZM55 78L61 77L61 75L56 76ZM56 74L62 73L62 71L57 72ZM58 70L63 70L63 68L58 68ZM59 67L64 66L64 64L59 65ZM60 63L65 63L65 61L60 62ZM61 60L66 60L66 58L61 59ZM62 57L66 57L67 55L62 56ZM62 54L67 54L67 53L63 53ZM63 52L68 51L68 50L64 50ZM64 49L68 49L69 48L64 48ZM65 47L69 47L69 45L65 46ZM29 196L41 194L42 186L31 188ZM33 181L44 179L45 172L35 174ZM37 167L47 166L48 160L39 161ZM40 155L49 154L51 149L41 150ZM43 145L52 144L53 139L44 140ZM45 135L54 134L55 130L47 131ZM48 127L56 126L57 122L49 123ZM50 119L57 118L58 115L51 115ZM52 112L59 111L60 108L53 109ZM53 105L60 105L61 102L54 102ZM55 99L62 99L62 96L56 97ZM56 94L63 93L64 91L57 91ZM58 89L64 88L65 86L59 86ZM59 84L65 83L66 81L60 82ZM60 79L66 79L67 77L61 77ZM61 75L67 75L67 73L62 73ZM62 71L68 71L68 69L63 70ZM63 68L69 67L69 66L64 66ZM64 64L69 64L70 63L65 63ZM65 61L70 61L70 59L66 60ZM66 58L71 58L71 57L66 57ZM67 55L71 55L72 54L67 54ZM67 53L72 52L72 51L68 51ZM68 50L73 50L73 49L68 49ZM69 48L73 47L73 46L69 47ZM39 202L51 200L52 192L41 194ZM42 186L53 185L55 178L44 179ZM45 172L56 171L57 165L47 166ZM48 160L58 159L59 153L49 154ZM51 149L60 148L61 143L52 144ZM53 139L61 138L62 133L54 134ZM55 130L63 129L64 125L56 126ZM57 122L64 121L65 117L57 118ZM58 115L66 114L66 110L59 111ZM60 108L67 107L67 104L60 105ZM61 102L68 101L68 98L62 99ZM62 96L69 95L69 93L63 93ZM64 91L70 90L70 88L64 88ZM65 86L71 85L71 83L65 83ZM66 81L71 81L72 79L66 79ZM67 77L72 77L73 75L67 75ZM67 73L73 73L73 71L68 71ZM68 69L74 69L74 67L69 67ZM69 66L74 65L74 64L69 64ZM70 63L75 62L75 61L70 61ZM70 59L75 59L75 58L71 58ZM71 57L76 56L76 55L71 55ZM72 54L76 53L76 52L72 52ZM72 51L77 51L77 50L73 50ZM73 49L77 48L77 47L73 47ZM73 46L78 46L78 45L74 45ZM49 209L61 207L62 199L51 200ZM52 192L63 191L64 183L53 185ZM55 178L65 176L66 170L56 171ZM57 165L67 163L67 157L58 159ZM59 153L68 152L69 147L60 148ZM61 143L69 142L70 137L61 138ZM62 133L71 133L71 128L63 129ZM64 125L72 124L72 120L64 121ZM65 117L73 117L73 113L66 114ZM66 110L73 110L74 106L67 107ZM67 104L74 103L75 100L68 101ZM68 98L75 98L75 95L69 95ZM69 93L76 92L76 90L70 90ZM70 88L76 87L77 85L71 85ZM71 83L77 82L77 80L71 81ZM72 79L78 78L78 76L72 77ZM73 75L78 74L78 72L73 73ZM73 71L79 70L79 69L74 69ZM74 67L79 67L79 65L74 65ZM74 64L79 63L80 62L75 62ZM75 61L80 60L80 59L75 59ZM75 58L80 57L80 56L76 56ZM76 55L81 55L81 53L76 53ZM76 52L81 52L81 51L77 51ZM77 50L81 49L81 48L77 48ZM77 47L82 47L82 46L78 46ZM62 199L73 197L74 189L63 191ZM64 183L75 182L75 175L65 176ZM66 170L76 168L76 162L67 163ZM67 157L77 156L77 151L68 152ZM69 147L78 146L78 141L69 142ZM70 137L78 136L79 132L71 133ZM71 128L79 127L79 123L72 124ZM72 120L80 120L80 116L73 117ZM73 113L80 112L81 109L73 110ZM74 106L81 106L81 103L74 103ZM75 100L81 100L82 97L75 98ZM75 95L82 94L82 92L76 92ZM76 90L82 89L82 87L76 87ZM77 85L83 84L83 82L77 82ZM77 80L83 80L83 78L78 78ZM78 76L83 76L84 74L78 74ZM78 72L84 72L84 70L79 70ZM79 69L84 68L84 66L79 67ZM79 65L84 65L84 63L79 63ZM80 62L85 62L85 60L80 60ZM80 59L85 58L85 57L80 57ZM80 56L85 56L85 54L81 55ZM81 53L85 53L85 52L81 52ZM81 51L85 50L86 49L81 49ZM81 48L86 48L86 47L82 47ZM73 205L84 203L84 195L73 197ZM74 189L85 187L85 180L75 182ZM75 175L85 173L85 167L76 168ZM76 162L86 161L86 155L77 156ZM77 151L86 150L86 145L78 146ZM78 141L86 140L87 135L78 136ZM79 132L87 131L87 127L79 127ZM79 123L87 123L87 119L80 120ZM80 116L87 115L88 112L80 112ZM81 109L88 108L88 105L81 106ZM81 103L88 102L88 99L81 100ZM82 97L88 96L88 94L82 94ZM82 92L88 91L88 89L82 89ZM82 87L88 86L89 84L83 84ZM83 82L89 82L89 79L83 80ZM83 78L89 77L89 75L83 76ZM84 74L89 73L89 71L84 72ZM84 70L89 70L89 68L84 68ZM84 66L89 66L89 64L84 65ZM84 63L89 63L89 61L85 62ZM85 60L89 60L89 58L85 58ZM85 57L90 57L90 55L85 56ZM85 54L90 54L90 53L85 53ZM85 52L90 51L90 50L85 50ZM86 49L90 49L90 48L86 48ZM86 47L90 46L90 45L86 46ZM84 195L95 193L95 186L85 187ZM85 180L95 179L95 172L85 173ZM85 167L95 166L95 160L86 161ZM86 155L95 154L95 149L86 150ZM86 145L95 144L95 139L86 140ZM87 135L95 134L95 130L87 131ZM87 127L95 126L95 122L87 123ZM87 119L95 118L95 114L87 115ZM88 112L95 111L95 108L88 108ZM88 105L95 104L95 101L88 102ZM88 99L95 99L95 96L88 96ZM88 94L95 93L94 90L88 91ZM88 89L94 88L94 86L88 86ZM89 84L94 83L94 81L89 82ZM89 79L94 79L94 77L89 77ZM89 75L94 75L94 73L89 73ZM89 71L94 71L94 69L89 70ZM89 68L94 67L94 66L89 66ZM89 64L94 64L94 62L89 63ZM89 61L94 61L94 59L89 60ZM89 58L94 58L94 56L90 57ZM90 55L94 55L94 54L90 54ZM90 53L94 52L94 51L90 51ZM90 50L94 50L94 49L90 49ZM90 48L94 47L94 46L90 46ZM96 202L107 200L106 192L95 193ZM95 186L106 184L105 177L95 179ZM95 172L105 171L105 164L95 166ZM95 160L104 158L104 153L95 154ZM95 149L104 147L104 142L95 144ZM95 139L103 138L103 133L95 134ZM95 130L103 129L103 125L95 126ZM95 122L102 121L102 117L95 118ZM95 114L102 114L102 110L95 111ZM95 108L102 107L101 104L95 104ZM95 101L101 101L101 98L95 99ZM95 96L101 95L101 93L95 93ZM94 90L101 90L101 87L94 88ZM94 86L100 85L100 83L94 83ZM94 81L100 81L100 78L94 79ZM94 77L100 76L100 74L94 75ZM94 73L100 72L100 71L94 71ZM94 69L99 69L99 67L94 67ZM94 66L99 65L99 64L94 64ZM94 62L99 62L99 61L94 61ZM94 59L99 59L99 58L94 58ZM94 56L99 56L99 55L94 55ZM94 54L99 53L99 52L94 52ZM94 51L98 51L98 50L94 50ZM94 49L98 48L98 47L94 47ZM94 46L98 46L98 45L94 45ZM107 208L119 207L118 198L107 200ZM106 192L117 190L116 183L106 184ZM105 177L115 176L115 169L105 171ZM105 164L114 163L114 157L104 158ZM104 153L113 152L113 146L104 147ZM104 142L112 141L112 137L103 138ZM103 133L111 132L111 128L103 129ZM103 125L110 124L110 120L102 121ZM102 117L109 116L109 113L102 114ZM102 110L109 110L108 106L102 107ZM101 104L108 103L108 100L101 101ZM101 98L108 97L107 95L101 95ZM101 93L107 92L107 89L101 90ZM101 87L107 87L106 85L100 85ZM100 83L106 82L106 80L100 81ZM100 78L106 78L105 76L100 76ZM100 74L105 74L105 72L100 72ZM100 71L105 70L105 68L99 69ZM99 67L104 67L104 65L99 65ZM99 64L104 63L104 62L99 62ZM99 61L104 60L104 59L99 59ZM99 58L104 57L103 56L99 56ZM99 55L103 54L103 53L99 53ZM99 52L103 52L103 51L98 51ZM98 50L103 49L103 48L98 48ZM98 47L102 47L102 46L98 46ZM118 198L129 196L127 189L117 190ZM116 183L126 181L125 174L115 176ZM115 169L124 168L124 162L114 163ZM114 157L123 156L122 150L113 152ZM113 146L121 145L120 140L112 141ZM112 137L120 136L119 131L111 132ZM111 128L118 127L118 123L110 124ZM110 120L117 119L117 116L109 116ZM109 113L116 112L116 109L109 110ZM108 106L115 106L115 103L108 103ZM108 100L114 100L114 97L108 97ZM107 95L114 94L113 91L107 92ZM107 89L113 89L112 86L107 87ZM106 85L112 84L112 82L106 82ZM106 80L111 80L111 78L106 78ZM105 76L111 76L111 74L105 74ZM105 72L110 72L110 70L105 70ZM105 68L110 68L109 66L104 67ZM104 65L109 65L109 63L104 63ZM104 62L109 61L109 60L104 60ZM104 59L108 58L108 57L104 57ZM103 56L108 56L108 54L103 54ZM103 53L108 53L107 52L103 52ZM103 51L107 50L107 49L103 49ZM103 48L107 48L107 47L102 47ZM130 205L141 203L139 195L129 196ZM127 189L138 187L136 180L126 181ZM125 174L135 173L134 166L124 168ZM124 162L133 160L132 155L123 156ZM122 150L131 149L130 144L121 145ZM120 140L129 139L128 135L120 136ZM119 131L127 130L126 126L118 127ZM118 123L125 122L125 119L117 119ZM117 116L124 115L123 111L116 112ZM116 109L123 108L122 105L115 106ZM115 103L121 102L121 99L114 100ZM114 97L120 96L120 93L114 94ZM113 91L119 91L119 88L113 89ZM112 86L118 86L118 84L112 84ZM112 82L117 81L117 79L111 80ZM111 78L117 77L116 75L111 76ZM111 74L116 73L116 71L110 72ZM110 70L115 69L115 68L110 68ZM109 66L114 66L114 64L109 65ZM109 63L114 63L114 61L109 61ZM109 60L113 60L113 58L108 58ZM108 57L113 57L112 55L108 56ZM108 54L112 54L112 53L108 53ZM107 52L112 51L111 50L107 50ZM107 49L111 49L111 48L107 48ZM107 47L111 46L111 45L106 46ZM139 195L150 193L148 185L138 187ZM136 180L146 178L145 171L135 173ZM134 166L143 165L142 159L133 160ZM132 155L141 154L139 148L131 149ZM130 144L138 143L137 138L129 139ZM128 135L136 134L135 130L127 130ZM126 126L134 125L133 121L125 122ZM125 119L132 118L131 114L124 115ZM123 111L130 111L129 107L123 108ZM122 105L129 104L128 101L121 102ZM121 99L127 98L127 96L120 96ZM120 93L126 93L125 90L119 91ZM119 88L125 88L124 85L118 86ZM118 84L124 83L123 81L117 81ZM117 79L123 79L122 77L117 77ZM116 75L122 75L121 73L116 73ZM116 71L121 71L120 69L115 69ZM115 68L120 67L119 66L114 66ZM114 64L119 64L119 62L114 63ZM114 61L118 61L118 59L113 60ZM113 58L118 58L117 56L113 57ZM112 55L117 55L117 54L112 54ZM112 53L116 52L116 51L112 51ZM111 50L116 50L115 49L111 49ZM111 48L115 47L115 46L111 46ZM152 201L163 199L160 191L150 193ZM148 185L158 184L156 177L146 178ZM145 171L154 170L153 164L143 165ZM142 159L151 158L149 152L141 154ZM139 148L148 147L146 142L138 143ZM137 138L145 137L144 133L136 134ZM135 130L143 129L141 125L134 125ZM133 121L140 121L139 117L132 118ZM131 114L138 113L137 110L130 111ZM129 107L136 107L135 104L129 104ZM128 101L135 101L134 98L127 98ZM127 96L133 95L132 92L126 93ZM125 90L131 90L131 87L125 88ZM124 85L130 85L129 83L124 83ZM123 81L129 80L128 78L123 79ZM122 77L128 76L127 74L122 75ZM121 73L126 72L126 70L121 71ZM120 69L125 69L125 67L120 67ZM119 66L124 65L124 64L119 64ZM119 62L123 62L123 60L118 61ZM118 59L123 59L122 57L118 58ZM117 56L122 56L121 55L117 55ZM117 54L121 53L121 52L116 52ZM116 51L120 51L120 49L116 50ZM115 49L120 48L119 47L115 47ZM115 46L119 46L119 45L115 45ZM165 208L176 206L173 198L163 199ZM160 191L171 190L168 182L158 184ZM156 177L166 175L164 169L154 170ZM153 164L162 163L160 157L151 158ZM149 152L158 151L156 146L148 147ZM146 142L155 141L153 136L145 137ZM144 133L152 132L150 128L143 129ZM141 125L149 124L148 120L140 121ZM139 117L146 116L145 113L138 113ZM137 110L144 109L143 106L136 107ZM135 104L142 103L141 100L135 101ZM134 98L140 97L139 94L133 95ZM132 92L138 92L137 89L131 90ZM131 87L137 87L136 84L130 85ZM129 83L135 82L134 80L129 80ZM128 78L134 78L133 76L128 76ZM127 74L132 74L132 72L126 72ZM126 70L131 70L130 68L125 69ZM125 67L130 67L129 65L124 65ZM124 64L129 63L128 62L123 62ZM123 60L128 60L127 59L123 59ZM122 57L127 57L126 56L122 56ZM121 55L126 54L125 53L121 53ZM121 52L125 52L125 50L120 51ZM120 49L124 49L124 48L120 48ZM119 47L123 47L123 46L119 46ZM173 198L184 196L181 188L171 190ZM168 182L178 181L175 174L166 175ZM164 169L173 167L171 161L162 163ZM160 157L169 156L166 150L158 151ZM156 146L165 145L163 140L155 141ZM153 136L161 135L159 131L152 132ZM150 128L158 127L156 123L149 124ZM148 120L155 119L153 115L146 116ZM145 113L152 112L151 109L144 109ZM143 106L150 105L148 102L142 103ZM141 100L147 99L146 97L140 97ZM139 94L145 94L144 91L138 92ZM137 89L143 89L142 86L137 87ZM136 84L142 84L141 82L135 82ZM134 80L140 80L139 77L134 78ZM133 76L138 75L138 73L132 74ZM132 72L137 72L136 70L131 70ZM130 68L135 68L135 66L130 67ZM129 65L134 65L134 63L129 63ZM128 62L133 61L132 60L128 60ZM127 59L132 58L131 57L127 57ZM126 56L131 55L130 54L126 54ZM125 53L130 53L129 51L125 52ZM125 50L129 50L128 49L124 49ZM124 48L128 48L127 47L123 47ZM187 204L198 202L194 194L184 196ZM181 188L191 186L188 179L178 181ZM175 174L185 172L182 166L173 167ZM171 161L180 160L177 154L169 156ZM166 150L175 149L173 144L165 145ZM163 140L171 139L169 135L161 135ZM159 131L167 130L165 126L158 127ZM156 123L164 122L162 118L155 119ZM153 115L160 115L159 111L152 112ZM151 109L158 108L156 105L150 105ZM148 102L155 102L154 99L147 99ZM146 97L153 96L151 93L145 94ZM144 91L150 91L149 88L143 89ZM142 86L148 86L147 83L142 84ZM141 82L146 81L145 79L140 80ZM139 77L144 77L144 75L138 75ZM138 73L143 73L142 71L137 72ZM136 70L141 69L140 68L135 68ZM135 66L140 66L139 64L134 65ZM134 63L138 63L138 61L133 61ZM132 60L137 59L136 58L132 58ZM131 57L136 57L135 55L131 55ZM130 54L135 54L134 52L130 53ZM129 51L134 51L133 50L129 50ZM128 49L132 49L132 48L128 48ZM127 47L131 46L131 45L127 45ZM194 194L204 192L201 185L191 186ZM188 179L197 178L194 171L185 172ZM182 166L191 165L188 159L180 160ZM177 154L186 153L183 148L175 149ZM173 144L181 143L179 138L171 139ZM169 135L177 134L175 129L167 130ZM165 126L173 125L171 121L164 122ZM162 118L169 118L167 114L160 115ZM159 111L166 111L164 107L158 108ZM156 105L163 104L161 101L155 102ZM154 99L160 98L159 95L153 96ZM151 93L157 93L156 90L150 91ZM149 88L155 88L154 85L148 86ZM147 83L153 83L152 81L146 81ZM145 79L151 79L150 77L144 77ZM144 75L149 75L148 73L143 73ZM142 71L147 71L146 69L141 69ZM140 68L145 67L145 65L140 66ZM139 64L144 64L143 62L138 63ZM138 61L142 61L142 59L137 59ZM136 58L141 58L140 56L136 57ZM135 55L140 55L139 53L135 54ZM134 52L138 52L138 51L134 51ZM133 50L137 50L137 48L132 49ZM132 48L136 47L136 46L131 46ZM208 201L218 199L214 191L204 192ZM201 185L210 183L207 176L197 178ZM194 171L203 170L200 163L191 165ZM188 159L197 158L194 152L186 153ZM183 148L192 147L189 142L181 143ZM179 138L187 137L184 133L177 134ZM175 129L182 128L180 124L173 125ZM171 121L178 120L176 117L169 118ZM167 114L174 113L173 110L166 111ZM164 107L171 107L169 103L163 104ZM161 101L168 100L166 98L160 98ZM159 95L165 95L163 92L157 93ZM156 90L162 90L161 87L155 88ZM154 85L160 85L158 83L153 83ZM152 81L157 80L156 78L151 79ZM150 77L155 76L154 74L149 75ZM148 73L153 72L152 70L147 71ZM146 69L151 69L150 67L145 67ZM145 65L149 65L149 63L144 64ZM143 62L148 62L147 60L142 61ZM142 59L146 59L145 57L141 58ZM140 56L145 56L144 55L140 55ZM139 53L143 53L143 52L138 52ZM138 51L142 51L141 49L137 50ZM137 48L141 48L140 47L136 47ZM136 46L140 46L139 45L135 45ZM223 207L233 205L229 197L218 199ZM214 191L224 189L220 182L210 183ZM207 176L216 175L212 168L203 170ZM200 163L209 162L206 156L197 158ZM194 152L203 151L200 146L192 147ZM189 142L197 141L194 136L187 137ZM184 133L192 132L190 128L182 128ZM180 124L187 123L185 120L178 120ZM176 117L183 116L181 112L174 113ZM173 110L179 109L177 106L171 107ZM169 103L176 103L174 100L168 100ZM166 98L172 97L171 94L165 95ZM163 92L169 92L168 89L162 90ZM161 87L167 87L165 84L160 85ZM158 83L164 82L163 80L157 80ZM156 78L162 78L160 76L155 76ZM154 74L159 74L158 72L153 72ZM152 70L157 70L156 68L151 69ZM150 67L155 66L154 65L149 65ZM149 63L153 63L152 62L148 62ZM147 60L152 60L151 59L146 59ZM145 57L150 57L149 56L145 56ZM144 55L148 54L148 53L143 53ZM143 52L147 52L146 50L142 51ZM141 49L146 49L145 48L141 48ZM140 47L144 47L144 46L140 46ZM229 197L239 195L234 188L224 189ZM220 182L229 180L225 173L216 175ZM212 168L221 167L218 161L209 162ZM206 156L214 155L211 150L203 151ZM200 146L208 145L205 140L197 141ZM194 136L202 135L199 131L192 132ZM190 128L197 127L194 123L187 123ZM185 120L192 119L190 115L183 116ZM181 112L188 112L186 108L179 109ZM177 106L184 105L182 102L176 103ZM174 100L180 99L179 96L172 97ZM171 94L177 94L175 91L169 92ZM168 89L174 89L172 86L167 87ZM165 84L171 84L170 82L164 82ZM163 80L168 79L167 77L162 78ZM160 76L166 75L165 73L159 74ZM158 72L163 71L162 70L157 70ZM156 68L161 68L160 66L155 66ZM154 65L159 64L158 63L153 63ZM152 62L157 61L156 60L152 60ZM151 59L155 58L154 57L150 57ZM149 56L154 55L153 54L148 54ZM148 53L152 53L151 51L147 52ZM146 50L150 50L150 49L146 49ZM145 48L149 48L148 47L144 47ZM244 204L254 202L249 194L239 195ZM234 188L243 186L239 179L229 180ZM225 173L234 172L230 166L221 167ZM218 161L226 160L223 154L214 155ZM211 150L219 149L216 144L208 145ZM205 140L213 139L210 134L202 135ZM199 131L207 130L204 126L197 127ZM194 123L202 122L199 118L192 119ZM190 115L197 114L195 111L188 112ZM186 108L192 108L190 105L184 105ZM182 102L188 102L186 99L180 99ZM179 96L185 96L183 93L177 94ZM175 91L181 91L180 88L174 89ZM172 86L178 86L176 83L171 84ZM170 82L175 81L174 79L168 79ZM167 77L172 77L171 75L166 75ZM165 73L170 73L168 71L163 71ZM162 70L167 69L166 67L161 68ZM160 66L165 66L164 64L159 64ZM158 63L163 62L162 61L157 61ZM156 60L161 59L160 58L155 58ZM154 57L159 56L158 55L154 55ZM153 54L157 54L156 52L152 53ZM151 51L155 51L155 50L150 50ZM150 49L154 49L153 47L149 48ZM148 47L152 46L151 45L148 45ZM249 194L258 192L253 184L243 186ZM239 179L248 177L243 171L234 172ZM230 166L239 164L235 158L226 160ZM223 154L231 153L227 148L219 149ZM216 144L224 143L220 138L213 139ZM210 134L217 133L214 129L207 130ZM204 126L211 125L209 121L202 122ZM199 118L206 117L204 114L197 114ZM195 111L201 110L199 107L192 108ZM190 105L197 104L195 101L188 102ZM186 99L193 98L191 95L185 96ZM183 93L189 93L187 90L181 91ZM180 88L185 88L184 85L178 86ZM176 83L182 83L180 81L175 81ZM174 79L179 79L177 76L172 77ZM171 75L176 74L175 73L170 73ZM168 71L173 71L172 69L167 69ZM166 67L171 67L170 65L165 66ZM164 64L169 64L167 62L163 62ZM162 61L166 61L165 59L161 59ZM160 58L164 58L163 56L159 56ZM158 55L162 55L161 53L157 54ZM156 52L160 52L160 51L155 51ZM155 50L159 50L158 48L154 49ZM153 47L157 47L156 46L152 46ZM264 200L274 198L268 190L258 192ZM253 184L262 183L257 176L248 177ZM243 171L252 169L248 163L239 164ZM235 158L243 157L239 152L231 153ZM227 148L235 147L232 142L224 143ZM220 138L228 137L225 132L217 133ZM214 129L222 128L219 124L211 125ZM209 121L216 120L213 117L206 117ZM204 114L210 113L208 110L201 110ZM199 107L205 106L203 103L197 104ZM195 101L201 100L199 97L193 98ZM191 95L197 95L195 92L189 93ZM187 90L193 89L191 87L185 88ZM184 85L189 85L187 82L182 83ZM180 81L186 80L184 78L179 79ZM177 76L183 76L181 74L176 74ZM175 73L180 72L178 70L173 71ZM172 69L177 68L176 67L171 67ZM170 65L174 65L173 63L169 64ZM167 62L172 62L171 60L166 61ZM165 59L170 59L169 57L164 58ZM163 56L168 56L167 54L162 55ZM161 53L166 53L165 52L160 52ZM160 51L164 51L163 49L159 50ZM158 48L162 48L161 47L157 47ZM156 46L160 46L159 45L155 45ZM280 207L290 205L284 197L274 198ZM268 190L277 189L272 181L262 183ZM257 176L266 174L261 168L252 169ZM248 163L256 162L252 156L243 157ZM239 152L247 151L243 145L235 147ZM232 142L239 141L236 136L228 137ZM225 132L232 131L229 127L222 128ZM219 124L226 123L223 119L216 120ZM213 117L220 116L217 112L210 113ZM208 110L214 109L212 106L205 106ZM203 103L209 103L207 100L201 100ZM199 97L205 97L203 94L197 95ZM195 92L200 91L198 89L193 89ZM191 87L197 87L195 84L189 85ZM187 82L193 82L191 80L186 80ZM184 78L189 78L188 76L183 76ZM181 74L186 74L185 72L180 72ZM178 70L183 70L182 68L177 68ZM176 67L181 66L179 65L174 65ZM173 63L178 63L177 61L172 62ZM171 60L175 60L174 58L170 59ZM169 57L173 57L172 56L168 56ZM167 54L171 54L170 53L166 53ZM165 52L169 52L168 50L164 51ZM163 49L167 49L166 48L162 48ZM161 47L165 47L164 46L160 46ZM284 197L293 195L287 187L277 189ZM272 181L281 180L275 173L266 174ZM261 168L270 167L265 161L256 162ZM252 156L260 155L255 149L247 151ZM243 145L251 144L247 140L239 141ZM236 136L243 135L239 131L232 131ZM229 127L236 126L233 122L226 123ZM223 119L229 119L226 115L220 116ZM217 112L223 112L221 108L214 109ZM212 106L218 105L215 102L209 103ZM207 100L213 99L211 96L205 97ZM203 94L208 94L206 91L200 91ZM198 89L204 88L202 86L197 87ZM195 84L200 84L198 81L193 82ZM191 80L196 79L195 77L189 78ZM188 76L193 75L191 73L186 74ZM185 72L190 71L188 69L183 70ZM182 68L187 68L185 66L181 66ZM179 65L184 64L183 63L178 63ZM177 61L181 61L180 60L175 60ZM174 58L179 58L178 57L173 57ZM172 56L176 55L175 54L171 54ZM170 53L174 53L173 51L169 52ZM168 50L172 50L171 49L167 49ZM166 48L170 48L169 46L165 47ZM300 203L310 201L303 193L293 195ZM287 187L296 186L290 178L281 180ZM275 173L284 172L278 165L270 167ZM265 161L273 159L268 154L260 155ZM255 149L263 148L259 143L251 144ZM247 140L254 139L250 134L243 135ZM239 131L247 130L243 126L236 126ZM233 122L240 122L236 118L229 119ZM226 115L233 114L230 111L223 112ZM221 108L227 108L224 104L218 105ZM215 102L222 101L219 98L213 99ZM211 96L217 96L214 93L208 94ZM206 91L212 90L210 88L204 88ZM202 86L208 86L206 83L200 84ZM198 81L204 81L202 79L196 79ZM195 77L200 77L198 75L193 75ZM191 73L196 73L195 71L190 71ZM188 69L193 69L192 67L187 68ZM185 66L190 66L189 64L184 64ZM183 63L187 62L186 61L181 61ZM180 60L184 59L183 58L179 58ZM178 57L182 56L181 55L176 55ZM175 54L179 54L178 52L174 53ZM173 51L177 51L176 50L172 50ZM171 49L175 49L174 47L170 48ZM169 46L173 46L172 45L168 45ZM318 210L328 208L320 200L310 201ZM303 193L312 191L305 184L296 186ZM290 178L299 177L292 170L284 172ZM278 165L287 164L281 158L273 159ZM268 154L276 153L271 147L263 148ZM259 143L266 142L262 138L254 139ZM250 134L258 133L254 129L247 130ZM243 126L250 125L246 121L240 122ZM236 118L243 117L240 113L233 114ZM230 111L236 110L233 107L227 108ZM224 104L231 104L228 101L222 101ZM219 98L225 98L223 95L217 96ZM214 93L220 92L218 90L212 90ZM210 88L215 87L213 85L208 86ZM206 83L211 83L209 81L204 81ZM202 79L207 78L205 76L200 77ZM198 75L203 74L201 72L196 73ZM195 71L200 71L198 69L193 69ZM192 67L196 67L195 65L190 66ZM189 64L193 64L192 62L187 62ZM186 61L190 60L189 59L184 59ZM183 58L188 57L186 56L182 56ZM181 55L185 55L184 53L179 54ZM178 52L182 52L181 51L177 51ZM176 50L180 50L179 48L175 49ZM174 47L178 47L177 46L173 46ZM320 200L329 198L321 190L312 191ZM305 184L314 182L307 175L299 177ZM292 170L301 169L295 163L287 164ZM281 158L289 157L284 151L276 153ZM271 147L279 146L274 141L266 142ZM262 138L269 137L265 132L258 133ZM254 129L261 128L257 124L250 125ZM246 121L253 120L250 116L243 117ZM240 113L246 113L243 109L236 110ZM233 107L240 106L237 103L231 104ZM228 101L234 100L231 97L225 98ZM223 95L228 95L226 92L220 92ZM218 90L223 89L221 87L215 87ZM213 85L219 85L216 82L211 83ZM209 81L214 80L212 78L207 78ZM205 76L210 76L208 74L203 74ZM201 72L206 72L205 70L200 71ZM198 69L203 68L201 67L196 67ZM195 65L199 65L198 63L193 64ZM192 62L196 62L195 60L190 60ZM189 59L193 59L192 57L188 57ZM186 56L191 56L189 54L185 55ZM184 53L188 53L187 52L182 52ZM181 51L185 50L184 49L180 50ZM179 48L183 48L182 47L178 47ZM337 206L347 204L338 196L329 198ZM321 190L330 188L323 181L314 182ZM307 175L316 174L309 168L301 169ZM295 163L303 161L297 156L289 157ZM284 151L292 150L286 145L279 146ZM274 141L281 140L277 136L269 137ZM265 132L272 131L268 127L261 128ZM257 124L264 123L260 119L253 120ZM250 116L256 116L253 112L246 113ZM243 109L249 109L246 105L240 106ZM237 103L243 102L240 99L234 100ZM231 97L237 97L234 94L228 95ZM226 92L231 91L229 89L223 89ZM221 87L226 86L224 84L219 85ZM216 82L222 82L219 80L214 80ZM212 78L217 77L215 75L210 76ZM208 74L213 73L211 72L206 72ZM205 70L209 70L208 68L203 68ZM201 67L206 66L204 65L199 65ZM198 63L202 63L201 61L196 62ZM195 60L199 60L198 58L193 59ZM192 57L196 57L195 55L191 56ZM189 54L193 54L192 53L188 53ZM187 52L191 51L189 50L185 50ZM184 49L188 49L187 48L183 48ZM182 47L186 47L185 45L181 46ZM338 196L348 194L339 187L330 188ZM323 181L332 179L324 173L316 174ZM309 168L318 166L311 160L303 161ZM297 156L305 155L299 149L292 150ZM286 145L294 144L289 139L281 140ZM277 136L284 135L279 130L272 131ZM268 127L275 126L271 122L264 123ZM260 119L267 118L263 115L256 116ZM253 112L259 111L255 108L249 109ZM246 105L252 105L249 102L243 102ZM240 99L246 99L243 96L237 97ZM234 94L240 93L237 91L231 91ZM229 89L234 88L232 86L226 86ZM224 84L229 84L227 81L222 82ZM219 80L225 79L222 77L217 77ZM215 75L220 75L218 73L213 73ZM211 72L216 71L214 69L209 70ZM208 68L212 68L211 66L206 66ZM204 65L209 64L207 63L202 63ZM201 61L205 61L204 59L199 60ZM198 58L202 58L201 57L196 57ZM195 55L199 55L198 54L193 54ZM192 53L196 52L195 51L191 51ZM189 50L194 50L192 49L188 49ZM187 48L191 48L190 46L186 47ZM356 203L366 201L357 193L348 194ZM339 187L348 185L340 178L332 179ZM324 173L333 171L326 165L318 166ZM311 160L319 159L313 153L305 155ZM299 149L307 148L301 143L294 144ZM289 139L296 138L291 134L284 135ZM279 130L286 129L282 125L275 126ZM271 122L277 121L273 118L267 118ZM263 115L269 114L265 111L259 111ZM255 108L262 107L258 104L252 105ZM249 102L255 101L252 98L246 99ZM243 96L249 95L246 93L240 93ZM237 91L243 90L240 88L234 88ZM232 86L237 85L235 83L229 84ZM227 81L232 81L230 79L225 79ZM222 77L228 77L225 75L220 75ZM218 73L223 73L221 71L216 71ZM214 69L219 69L217 67L212 68ZM211 66L215 66L213 64L209 64ZM207 63L212 62L210 61L205 61ZM204 59L208 59L206 58L202 58ZM201 57L205 56L203 55L199 55ZM198 54L202 54L200 52L196 52ZM195 51L199 51L198 50L194 50ZM192 49L196 48L195 47L191 48ZM190 46L194 46L192 45L189 45ZM357 193L366 191L357 184L348 185ZM340 178L349 176L341 170L333 171ZM326 165L334 164L327 158L319 159ZM313 153L321 152L315 147L307 148ZM301 143L309 142L303 137L296 138ZM291 134L298 133L293 128L286 129ZM282 125L289 124L284 121L277 121ZM273 118L280 117L276 113L269 114ZM265 111L272 110L268 107L262 107ZM258 104L264 104L261 101L255 101ZM252 98L257 98L254 95L249 95ZM246 93L251 92L248 90L243 90ZM240 88L245 87L243 85L237 85ZM235 83L240 83L237 80L232 81ZM230 79L235 78L233 76L228 77ZM225 75L230 74L228 72L223 73ZM221 71L226 70L224 69L219 69ZM217 67L222 67L220 65L215 66ZM213 64L218 64L216 62L212 62ZM210 61L214 60L213 59L208 59ZM206 58L211 57L209 56L205 56ZM203 55L208 55L206 53L202 54ZM200 52L204 52L203 51L199 51ZM198 50L202 49L200 48L196 48ZM195 47L199 47L197 46L194 46ZM357 184L366 182L357 175L349 176ZM341 170L349 169L342 162L334 164ZM327 158L335 157L328 151L321 152ZM315 147L322 146L316 141L309 142ZM303 137L311 136L305 132L298 133ZM293 128L300 128L295 124L289 124ZM284 121L291 120L286 116L280 117ZM276 113L282 113L278 109L272 110ZM268 107L274 106L270 103L264 104ZM261 101L267 100L263 97L257 98ZM254 95L260 94L257 92L251 92ZM248 90L254 89L251 87L245 87ZM243 85L248 84L245 82L240 83ZM237 80L243 80L240 78L235 78ZM233 76L238 76L235 74L230 74ZM228 72L233 72L231 70L226 70ZM224 69L229 68L226 66L222 67ZM220 65L224 65L222 63L218 64ZM216 62L221 62L219 60L214 60ZM213 59L217 59L215 57L211 57ZM209 56L213 56L212 54L208 55ZM206 53L210 53L209 52L204 52ZM203 51L207 50L206 49L202 49ZM200 48L204 48L203 47L199 47ZM357 175L366 174L358 167L349 169ZM342 162L350 161L343 155L335 157ZM328 151L336 150L330 145L322 146ZM316 141L323 140L318 135L311 136ZM305 132L312 131L307 127L300 128ZM295 124L302 123L297 119L291 120ZM286 116L293 115L288 112L282 113ZM278 109L284 108L280 105L274 106ZM270 103L276 102L273 99L267 100ZM263 97L269 96L266 94L260 94ZM257 92L262 91L259 89L254 89ZM251 87L256 86L253 84L248 84ZM245 82L250 82L248 79L243 80ZM240 78L245 77L243 75L238 76ZM235 74L240 73L238 71L233 72ZM231 70L235 70L233 68L229 68ZM226 66L231 66L229 64L224 65ZM222 63L227 63L225 61L221 62ZM219 60L223 60L221 58L217 59ZM215 57L219 57L218 55L213 56ZM212 54L216 54L214 53L210 53ZM209 52L213 51L211 50L207 50ZM206 49L210 49L208 48L204 48ZM203 47L207 47L205 45L201 46ZM358 167L366 166L358 160L350 161ZM343 155L350 154L343 149L336 150ZM330 145L337 144L331 139L323 140ZM318 135L325 134L319 130L312 131ZM307 127L314 126L309 122L302 123ZM297 119L304 118L299 115L293 115ZM288 112L294 111L290 108L284 108ZM280 105L286 105L282 102L276 102ZM273 99L278 99L275 96L269 96ZM266 94L271 93L268 91L262 91ZM259 89L265 88L262 86L256 86ZM253 84L259 83L256 81L250 82ZM248 79L253 79L250 77L245 77ZM243 75L248 75L245 73L240 73ZM238 71L243 71L240 69L235 70ZM233 68L238 67L236 66L231 66ZM229 64L233 64L231 62L227 63ZM225 61L229 61L227 59L223 60ZM221 58L225 58L224 56L219 57ZM218 55L222 55L220 54L216 54ZM214 53L218 52L217 51L213 51ZM211 50L215 50L213 49L210 49ZM208 48L212 47L210 46L207 47ZM358 160L365 159L358 153L350 154ZM343 149L351 148L344 143L337 144ZM331 139L338 138L332 133L325 134ZM319 130L326 129L320 125L314 126ZM309 122L315 121L310 117L304 118ZM299 115L305 114L301 110L294 111ZM290 108L296 107L292 104L286 105ZM282 102L288 101L284 98L278 99ZM275 96L280 95L277 93L271 93ZM268 91L273 90L270 88L265 88ZM262 86L267 85L264 83L259 83ZM256 81L261 81L258 79L253 79ZM250 77L255 76L252 74L248 75ZM245 73L250 73L247 71L243 71ZM240 69L245 69L243 67L238 67ZM236 66L240 65L238 64L233 64ZM231 62L236 62L234 61L229 61ZM227 59L232 59L230 58L225 58ZM224 56L228 56L226 55L222 55ZM220 54L224 53L222 52L218 52ZM217 51L221 51L219 50L215 50ZM213 49L217 48L216 47L212 47ZM210 46L214 46L213 45L209 45ZM358 153L365 152L358 147L351 148ZM344 143L351 142L345 137L338 138ZM332 133L338 132L333 128L326 129ZM320 125L327 124L322 120L315 121ZM310 117L316 117L311 113L305 114ZM301 110L307 110L302 106L296 107ZM292 104L298 103L294 100L288 101ZM284 98L290 97L286 95L280 95ZM277 93L282 92L279 90L273 90ZM270 88L275 87L272 85L267 85ZM264 83L269 82L266 80L261 81ZM258 79L263 78L260 76L255 76ZM252 74L257 74L255 72L250 73ZM247 71L252 70L250 68L245 69ZM243 67L247 67L245 65L240 65ZM238 64L242 63L240 62L236 62ZM234 61L238 60L236 59L232 59ZM230 58L234 57L232 56L228 56ZM226 55L230 55L228 53L224 53ZM222 52L226 52L225 51L221 51ZM219 50L223 49L221 48L217 48ZM216 47L220 47L218 46L214 46ZM358 147L365 146L358 141L351 142ZM345 137L352 136L345 132L338 132ZM333 128L339 127L333 123L327 124ZM322 120L328 119L323 116L316 117ZM311 113L318 112L313 109L307 110ZM302 106L308 106L304 103L298 103ZM294 100L300 100L295 97L290 97ZM286 95L292 94L288 92L282 92ZM279 90L284 89L281 87L275 87ZM272 85L277 84L274 82L269 82ZM266 80L271 80L268 78L263 78ZM260 76L265 76L262 74L257 74ZM255 72L259 72L257 70L252 70ZM250 68L254 68L252 66L247 67ZM245 65L249 65L247 63L242 63ZM240 62L245 61L242 60L238 60ZM236 59L240 58L238 57L234 57ZM232 56L236 56L234 54L230 55ZM228 53L232 53L230 52L226 52ZM225 51L229 50L227 49L223 49ZM221 48L225 48L223 47L220 47ZM358 141L365 140L358 135L352 136ZM345 132L352 131L346 126L339 127ZM333 123L340 123L334 119L328 119ZM323 116L329 115L324 112L318 112ZM313 109L319 108L314 105L308 106ZM304 103L310 102L305 99L300 100ZM295 97L301 96L297 94L292 94ZM288 92L293 91L290 88L284 89ZM281 87L286 86L282 84L277 84ZM274 82L279 81L276 79L271 80ZM268 78L273 77L270 75L265 76ZM262 74L267 73L264 71L259 72ZM257 70L261 70L259 68L254 68ZM252 66L256 66L254 64L249 65ZM247 63L251 63L249 61L245 61ZM242 60L247 60L245 58L240 58ZM238 57L242 57L240 55L236 56ZM234 54L238 54L236 53L232 53ZM230 52L234 51L233 50L229 50ZM227 49L231 49L229 48L225 48ZM223 47L227 46L226 45L222 46ZM358 135L365 134L359 130L352 131ZM346 126L352 126L346 122L340 123ZM334 119L341 118L335 114L329 115ZM324 112L330 111L325 108L319 108ZM314 105L320 104L315 101L310 102ZM305 99L311 99L307 96L301 96ZM297 94L303 93L299 90L293 91ZM290 88L295 88L291 86L286 86ZM282 84L288 83L284 81L279 81ZM276 79L281 79L278 77L273 77ZM270 75L275 75L272 73L267 73ZM264 71L269 71L266 69L261 70ZM259 68L263 67L261 66L256 66ZM254 64L258 64L256 62L251 63ZM249 61L253 61L251 59L247 60ZM245 58L249 58L247 56L242 57ZM240 55L244 55L242 54L238 54ZM236 53L240 52L238 51L234 51ZM233 50L237 50L235 49L231 49ZM229 48L233 47L231 46L227 46ZM359 130L365 129L359 125L352 126ZM346 122L353 121L347 117L341 118ZM335 114L341 114L336 110L330 111ZM325 108L331 107L326 104L320 104ZM315 101L321 101L317 98L311 99ZM307 96L312 95L308 92L303 93ZM299 90L304 90L300 87L295 88ZM291 86L296 85L293 83L288 83ZM284 81L289 81L286 78L281 79ZM278 77L283 76L279 74L275 75ZM272 73L276 72L274 71L269 71ZM266 69L271 69L268 67L263 67ZM261 66L265 65L263 64L258 64ZM256 62L260 62L258 60L253 61ZM251 59L255 59L253 58L249 58ZM247 56L251 56L249 55L244 55ZM242 54L246 53L244 52L240 52ZM238 51L242 51L240 50L237 50ZM235 49L239 48L237 47L233 47ZM231 46L235 46L233 45L229 45ZM359 125L365 124L359 120L353 121ZM347 117L353 116L347 113L341 114ZM336 110L342 109L337 106L331 107ZM326 104L332 103L327 100L321 101ZM317 98L322 97L318 95L312 95ZM308 92L313 92L309 89L304 90ZM300 87L305 87L301 85L296 85ZM293 83L298 82L294 80L289 81ZM286 78L291 78L287 76L283 76ZM279 74L284 74L281 72L276 72ZM274 71L278 70L275 68L271 69ZM268 67L272 67L270 65L265 65ZM263 64L267 63L264 62L260 62ZM258 60L262 60L260 59L255 59ZM253 58L257 57L255 56L251 56ZM249 55L253 54L250 53L246 53ZM244 52L248 52L246 51L242 51ZM240 50L244 49L242 48L239 48ZM237 47L240 47L239 46L235 46ZM359 120L365 119L359 116L353 116ZM347 113L353 112L348 109L342 109ZM337 106L342 106L337 102L332 103ZM327 100L332 100L328 97L322 97ZM318 95L323 94L319 91L313 92ZM309 89L315 89L310 86L305 87ZM301 85L307 84L303 82L298 82ZM294 80L299 80L296 78L291 78ZM287 76L292 76L289 74L284 74ZM281 72L286 72L283 70L278 70ZM275 68L280 68L277 66L272 67ZM270 65L274 65L271 63L267 63ZM264 62L269 61L266 60L262 60ZM260 59L264 58L261 57L257 57ZM255 56L259 56L257 54L253 54ZM250 53L254 53L252 52L248 52ZM246 51L250 50L248 49L244 49ZM242 48L246 48L244 47L240 47ZM359 116L365 115L359 111L353 112ZM348 109L354 108L348 105L342 106ZM337 102L343 102L338 99L332 100ZM328 97L333 96L328 93L323 94ZM319 91L324 91L320 88L315 89ZM310 86L316 86L312 84L307 84ZM303 82L308 81L304 79L299 80ZM296 78L301 77L297 75L292 76ZM289 74L294 73L290 71L286 72ZM283 70L287 69L284 68L280 68ZM277 66L281 66L278 64L274 65ZM271 63L276 63L273 61L269 61ZM266 60L270 60L268 58L264 58ZM261 57L265 57L263 55L259 56ZM257 54L261 54L258 53L254 53ZM252 52L256 51L254 50L250 50ZM248 49L252 49L250 48L246 48ZM244 47L248 46L246 45L242 46ZM359 111L365 111L359 107L354 108ZM348 105L354 104L348 101L343 102ZM338 99L343 98L339 96L333 96ZM328 93L334 93L329 90L324 91ZM320 88L325 88L321 85L316 86ZM312 84L317 83L313 81L308 81ZM304 79L309 79L305 77L301 77ZM297 75L302 75L298 73L294 73ZM290 71L295 71L292 69L287 69ZM284 68L289 67L286 66L281 66ZM278 64L283 64L280 62L276 63ZM273 61L277 61L275 59L270 60ZM268 58L272 58L270 56L265 57ZM263 55L267 55L265 54L261 54ZM258 53L262 52L260 51L256 51ZM254 50L258 50L256 49L252 49ZM250 48L254 47L252 46L248 46ZM359 107L365 107L359 104L354 104ZM348 101L354 101L349 98L343 98ZM339 96L344 95L339 92L334 93ZM329 90L334 90L330 87L325 88ZM321 85L326 85L322 83L317 83ZM313 81L318 80L314 78L309 79ZM305 77L310 76L306 74L302 75ZM298 73L303 72L300 70L295 71ZM292 69L296 69L293 67L289 67ZM286 66L290 65L287 64L283 64ZM280 62L284 62L282 60L277 61ZM275 59L279 59L276 57L272 58ZM270 56L274 56L271 55L267 55ZM265 54L269 53L266 52L262 52ZM260 51L264 51L262 49L258 50ZM256 49L260 48L257 47L254 47ZM252 46L255 46L253 45L250 45ZM359 104L365 103L360 100L354 101ZM349 98L354 97L349 94L344 95ZM339 92L344 92L340 89L334 90ZM330 87L335 87L331 84L326 85ZM322 83L327 82L323 80L318 80ZM314 78L319 78L315 76L310 76ZM306 74L311 74L308 72L303 72ZM300 70L304 70L301 68L296 69ZM293 67L298 67L295 65L290 65ZM287 64L292 63L289 62L284 62ZM282 60L286 60L283 59L279 59ZM276 57L280 57L278 56L274 56ZM271 55L275 54L273 53L269 53ZM266 52L270 52L268 50L264 51ZM262 49L266 49L263 48L260 48ZM257 47L261 47L259 46L255 46ZM360 100L365 99L360 97L354 97ZM349 94L355 94L350 91L344 92ZM340 89L345 89L340 86L335 87ZM331 84L336 84L331 82L327 82ZM323 80L327 80L323 77L319 78ZM315 76L320 75L316 73L311 74ZM308 72L312 72L309 70L304 70ZM301 68L305 68L302 66L298 67ZM295 65L299 64L296 63L292 63ZM289 62L293 61L290 60L286 60ZM283 59L287 58L284 57L280 57ZM278 56L282 55L279 54L275 54ZM273 53L277 53L274 51L270 52ZM268 50L272 50L269 49L266 49ZM263 48L267 48L265 47L261 47ZM360 97L365 96L360 93L355 94ZM350 91L355 91L350 88L345 89ZM340 86L345 86L341 83L336 84ZM331 82L336 81L332 79L327 80ZM323 77L328 77L324 75L320 75ZM316 73L320 73L317 71L312 72ZM309 70L313 69L310 68L305 68ZM302 66L306 66L303 64L299 64ZM296 63L300 63L297 61L293 61ZM290 60L294 59L291 58L287 58ZM284 57L288 57L286 55L282 55ZM279 54L283 54L280 52L277 53ZM274 51L278 51L276 50L272 50ZM269 49L273 49L271 47L267 48ZM265 47L269 46L266 45L263 45ZM360 93L365 93L360 90L355 91ZM350 88L355 88L350 85L345 86ZM341 83L346 83L341 81L336 81ZM332 79L337 79L333 77L328 77ZM324 75L329 75L325 73L320 73ZM317 71L321 71L318 69L313 69ZM310 68L314 67L311 65L306 66ZM303 64L307 64L304 62L300 63ZM297 61L301 61L298 59L294 59ZM291 58L295 58L292 56L288 57ZM286 55L290 55L287 53L283 54ZM280 52L284 52L282 51L278 51ZM276 50L279 50L277 48L273 49ZM271 47L275 47L272 46L269 46ZM360 90L365 90L360 87L355 88ZM350 85L355 85L350 82L346 83ZM341 81L346 80L342 78L337 79ZM333 77L337 76L333 74L329 75ZM325 73L330 72L326 70L321 71ZM318 69L322 69L319 67L314 67ZM311 65L315 65L312 63L307 64ZM304 62L308 62L305 60L301 61ZM298 59L302 59L299 57L295 58ZM292 56L296 56L294 55L290 55ZM287 53L291 53L288 52L284 52ZM282 51L286 51L283 49L279 50ZM277 48L281 48L278 47L275 47ZM272 46L276 46L274 45L270 45ZM350 82L355 82L351 80L346 80ZM342 78L346 78L342 76L337 76ZM333 74L338 74L334 72L330 72ZM326 70L330 70L326 68L322 69ZM319 67L323 66L319 65L315 65ZM312 63L316 63L313 62L308 62ZM305 60L309 60L306 58L302 59ZM299 57L303 57L300 56L296 56ZM294 55L298 54L295 53L291 53ZM288 52L292 52L289 50L286 51ZM283 49L287 49L284 48L281 48ZM278 47L282 47L280 46L276 46ZM351 80L355 79L351 77L346 78ZM342 76L347 75L343 73L338 74ZM334 72L339 71L335 70L330 70ZM326 68L331 68L327 66L323 66ZM319 65L324 64L320 63L316 63ZM313 62L317 61L314 60L309 60ZM306 58L310 58L307 57L303 57ZM300 56L304 55L301 54L298 54ZM295 53L299 53L296 51L292 52ZM289 50L293 50L291 49L287 49ZM284 48L288 48L286 47L282 47ZM351 77L356 77L351 75L347 75ZM343 73L347 73L343 71L339 71ZM335 70L339 69L335 67L331 68ZM327 66L331 66L328 64L324 64ZM320 63L324 62L321 61L317 61ZM314 60L318 59L314 58L310 58ZM307 57L311 56L308 55L304 55ZM301 54L305 54L302 52L299 53ZM296 51L300 51L297 50L293 50ZM291 49L294 49L292 47L288 48ZM286 47L289 46L287 45L283 45ZM351 75L356 74L352 72L347 73ZM343 71L347 71L343 69L339 69ZM335 67L339 67L336 65L331 66ZM328 64L332 64L328 62L324 62ZM321 61L325 61L322 59L318 59ZM314 58L318 58L315 56L311 56ZM308 55L312 55L309 53L305 54ZM302 52L306 52L303 51L300 51ZM297 50L301 50L298 48L294 49ZM292 47L295 47L293 46L289 46ZM352 72L356 72L352 70L347 71ZM343 69L348 68L344 67L339 67ZM336 65L340 65L336 63L332 64ZM328 62L333 62L329 60L325 61ZM322 59L326 59L322 57L318 58ZM315 56L319 56L316 54L312 55ZM309 53L313 53L310 52L306 52ZM303 51L307 51L304 49L301 50ZM298 48L302 48L299 47L295 47ZM293 46L296 46L294 45L290 45ZM352 70L356 70L352 68L348 68ZM344 67L348 66L344 65L340 65ZM336 63L340 63L337 61L333 62ZM329 60L333 60L330 58L326 59ZM322 57L326 57L323 56L319 56ZM316 54L320 54L317 53L313 53ZM310 52L314 52L311 50L307 51ZM304 49L308 49L305 48L302 48ZM299 47L303 47L300 46L296 46ZM352 68L356 68L352 66L348 66ZM344 65L348 64L344 63L340 63ZM337 61L341 61L337 60L333 60ZM330 58L334 58L330 57L326 57ZM323 56L327 55L324 54L320 54ZM317 53L321 53L318 51L314 52ZM311 50L315 50L312 49L308 49ZM305 48L309 48L306 46L303 47ZM352 66L356 66L352 64L348 64ZM344 63L349 62L345 61L341 61ZM337 60L341 59L338 58L334 58ZM330 57L334 56L331 55L327 55ZM324 54L328 54L324 52L321 53ZM318 51L321 51L318 50L315 50ZM312 49L315 49L313 47L309 48ZM306 46L310 46L307 45L304 45ZM352 64L357 64L353 62L349 62ZM345 61L349 60L345 59L341 59ZM338 58L342 57L338 56L334 56ZM331 55L335 55L331 53L328 54ZM324 52L328 52L325 51L321 51ZM318 50L322 49L319 48L315 49ZM313 47L316 47L313 46L310 46ZM353 62L357 62L353 60L349 60ZM345 59L349 59L345 57L342 57ZM338 56L342 56L339 54L335 55ZM331 53L335 53L332 52L328 52ZM325 51L329 50L326 49L322 49ZM319 48L323 48L320 47L316 47ZM353 60L357 60L353 58L349 59ZM345 57L349 57L346 55L342 56ZM339 54L342 54L339 53L335 53ZM332 52L336 51L332 50L329 50ZM326 49L329 49L326 48L323 48ZM320 47L323 47L320 45L317 46ZM353 58L357 58L353 57L349 57ZM346 55L350 55L346 54L342 54ZM339 53L343 52L339 51L336 51ZM332 50L336 50L333 49L329 49ZM326 48L330 48L327 46L323 47ZM353 57L357 56L353 55L350 55ZM346 54L350 54L346 52L343 52ZM339 51L343 51L340 50L336 50ZM333 49L337 48L333 47L330 48ZM327 46L330 46L327 45L324 45ZM353 55L357 55L354 53L350 54ZM346 52L350 52L347 51L343 51ZM340 50L343 49L340 48L337 48ZM333 47L337 47L334 46L330 46ZM354 53L357 53L354 52L350 52ZM347 51L350 50L347 49L343 49ZM340 48L344 48L340 47L337 47ZM354 52L357 51L354 50L350 50ZM347 49L351 49L347 48L344 48ZM340 47L344 47L341 45L337 46ZM354 50L358 50L354 49L351 49ZM347 48L351 47L347 46L344 47ZM354 49L358 48L354 47L351 47ZM347 46L351 46L348 45L344 45ZM354 47L358 47L354 46L351 46Z" fill="#9c9c9c"/>
<rect x="0" y="0" width="355" height="200" fill="url(#gglow)"/>
<polygon points="0.0,69.0 51.0,50.0 355.0,49.0 355.0,68.0 312.0,59.0 85.0,59.0 0.0,86.0" fill="#34466e" fill-opacity="0.5"/>
<rect x="0" y="0" width="355" height="15" fill="url(#gsky)"/>
<polygon points="0.0,17.0 355.0,15.0 355.0,51.0 0.0,51.0" fill="#52a872"/>
<rect x="0" y="15" width="355" height="2" fill="#a2e6bc"/>
<path d="M116.0 49.5 A33 33 0 0 1 182.0 49.5 Z" fill="#f9a66e"/>
<polygon points="0.0,18.0 41.0,16.0 51.0,50.0 0.0,69.0" fill="#28699a"/>
<polygon points="0.0,18.0 41.0,16.0 42.0,19.0 0.0,21.0" fill="#6ec6f0"/>
<polygon points="328.0,16.0 355.0,17.0 355.0,68.0 312.0,58.0" fill="#a7abb3"/>
<polygon points="328.0,16.0 355.0,17.0 355.0,20.0 327.0,19.0" fill="#e6e8ea"/>
<polygon points="45.0,72.0 98.0,64.0 100.0,76.0 75.0,91.0 33.0,93.0" fill="#4a5670" fill-opacity="0.6"/>
<polygon points="31.0,34.0 75.0,28.0 92.0,29.0 47.0,35.0" fill="#f2f2f2"/>
<polygon points="31.0,34.0 75.0,31.0 84.0,71.0 46.0,73.0" fill="#aeb0b6"/>
<polygon points="75.0,29.0 92.0,29.0 98.0,65.0 84.0,71.0" fill="#f27c8e"/>
<rect x="134.0" y="53.0" width="8" height="17" rx="4" fill="#b9bec6"/>
<ellipse cx="141.0" cy="73.0" rx="5" ry="2.5" fill="#4a5670" opacity="0.6"/>
<ellipse cx="187.0" cy="159.0" rx="9" ry="27" transform="rotate(-28 187.0 159.0)" fill="#4a5670" fill-opacity="0.8"/>
<path d="M195.0,132.0 L200.0,132.0 L203.0,153.0 L198.0,153.0 Z" fill="#4a5670" fill-opacity="0.75"/>
<rect x="168.0" y="109.0" width="18" height="27" rx="3" fill="#c42a3c"/>
<ellipse cx="177.0" cy="136.0" rx="9" ry="3" fill="#b02030"/>
<circle cx="177.0" cy="103.0" r="9" fill="#2b93cc"/>
<rect x="187.0" y="104.0" width="4" height="14" rx="1" fill="#7fe08a" transform="rotate(-10 189.0 111.0)"/>
</svg>

<!-- ===== INSP ===== -->
<div class="a" style="left:1162px;top:80px;width:203px;height:625px;background:#383838"></div>
<div class="a" style="left:1162px;top:81px;width:203px;height:19px;background:#282828;border-radius:4px 4px 0 0"></div>
<div class="a" style="left:1162px;top:81px;width:93px;height:19px;background:#3c3c3c;border-radius:3px 3px 0 0"></div>
<svg style="left:1171px;top:85px" width="11" height="11"><circle cx="5.5" cy="5.5" r="5.4" fill="#c4c4c4"/><rect x="4.7" y="4.6" width="1.7" height="4.2" fill="#3c3c3c"/><circle cx="5.5" cy="2.9" r="0.95" fill="#3c3c3c"/></svg>
<div class="a u" style="left:1187px;top:86px;color:#d2d2d2;font-size:12.5px">Inspector</div>
<svg style="left:1328px;top:84px" width="10" height="12"><path d="M3 5.5V3.2C3 1.8 4 1 5.2 1C6.4 1 7.4 1.8 7.4 3.2" stroke="#d0d0d0" fill="none" stroke-width="1.2"/><rect x="1" y="6" width="8" height="5.5" stroke="#c4c4c4" fill="none" stroke-width="1.2"/></svg>
<svg style="left:1350px;top:84px" width="3" height="12"><circle cx="1.5" cy="1.5" r="1.2" fill="#c4c4c4"/><circle cx="1.5" cy="6" r="1.2" fill="#c4c4c4"/><circle cx="1.5" cy="10.5" r="1.2" fill="#c4c4c4"/></svg>
<div class="a" style="left:1162px;top:100px;width:203px;height:59px;background:#3e3e3e;border-bottom:1px solid #242424"></div>
<svg style="left:1168px;top:109px" width="30" height="28" viewBox="0 0 30 28"><path d="M11 1.5L20 6V17L11 21.5L2 17V6Z M2 6L11 10.5L20 6 M11 10.5V21.5" stroke="#c8c8c8" fill="none" stroke-width="1.4" stroke-linejoin="round"/><path d="M21 23H28L24.5 27Z" fill="#c8c8c8"/></svg>
<div class="a" style="left:1209px;top:110px;width:14px;height:14px;background:#2a2a2a;border:1px solid #212121;border-radius:2px"></div><svg style="left:1211px;top:113px" width="10" height="9"><path d="M1 4.5L3.8 7.3L9 1.5" stroke="#e8e8e8" stroke-width="1.5" fill="none"/></svg>
<div class="a" style="left:1229px;top:109px;width:56px;height:18px;background:#2a2a2a;border:1px solid #212121;border-radius:3px"></div>
<div class="a u" style="left:1233px;top:112px;color:#e0e0e0;font-size:12.5px;font-weight:bold">Player</div>
<div class="a" style="left:1288px;top:110px;width:14px;height:14px;background:#2a2a2a;border:1px solid #212121;border-radius:2px"></div>
<div class="a u" style="left:1306px;top:112px;color:#c4c4c4;font-size:12.5px">Static</div>
<svg style="left:1350px;top:116px" width="9" height="6"><path d="M0 0H8.5L4.25 5.5Z" fill="#c4c4c4"/></svg>
<div class="a u" style="left:1203px;top:136px;color:#c4c4c4;font-size:12.5px">Tag</div>
<div class="a" style="left:1229px;top:134px;width:45px;height:17px;background:#515151;border-radius:3px;overflow:hidden"><div class="a u" style="left:3px;top:1px;color:#d2d2d2;font-size:12.5px">Player</div><div class="a" style="left:31px;top:0;width:14px;height:17px;background:#515151"></div></div>
<svg style="left:1263px;top:140px" width="9" height="6"><path d="M0 0H8.5L4.25 5.5Z" fill="#d2d2d2"/></svg>
<div class="a u" style="left:1288px;top:136px;color:#c4c4c4;font-size:12.5px">Layer</div>
<div class="a" style="left:1325px;top:134px;width:35px;height:17px;background:#515151;border-radius:3px;overflow:hidden"><div class="a u" style="left:3px;top:1px;color:#d2d2d2;font-size:12.5px">Default</div><div class="a" style="left:21px;top:0;width:14px;height:17px;background:#515151"></div></div>
<svg style="left:1349px;top:140px" width="9" height="6"><path d="M0 0H8.5L4.25 5.5Z" fill="#d2d2d2"/></svg>
<div class="a" style="left:1162px;top:159px;width:203px;height:1px;background:#1e1e1e"></div>
<div class="a" style="left:1162px;top:160px;width:203px;height:20px;background:#3e3e3e;border-bottom:1px solid #2e2e2e"></div>
<svg style="left:1167px;top:167px" width="10" height="8"><path d="M0 0H9L4.5 7.5Z" fill="#7d7d7d"/></svg>
<svg style="left:1183px;top:163px" width="15" height="13" viewBox="0 0 15 13"><path d="M7.5 1.5V6.5" stroke="#9be05a" stroke-width="2.2" stroke-linecap="round"/><path d="M6.5 7.5L2 10" stroke="#4cc3f5" stroke-width="2.2" stroke-linecap="round"/><path d="M8.5 7.5L13 10" stroke="#f26d3d" stroke-width="2.2" stroke-linecap="round"/></svg>
<div class="a" style="left:1222px;top:160px;width:80px;height:20px;overflow:hidden"><div class="a u" style="left:0;top:4px;color:#d8d8d8;font-size:12.5px;font-weight:bold">Transform</div></div>
<svg style="left:1307px;top:165px" width="11" height="11"><circle cx="5.5" cy="5.5" r="5.3" fill="#c4c4c4"/><text x="5.5" y="9" font-size="9" font-weight="bold" text-anchor="middle" fill="#3e3e3e" font-family="Liberation Sans">?</text></svg>
<svg style="left:1327px;top:165px" width="11" height="11"><path d="M0 3H11M0 8H11" stroke="#c4c4c4" stroke-width="1.3"/><path d="M7 0.5V5.5M4 5.5V10.5" stroke="#c4c4c4" stroke-width="1.6"/></svg>
<svg style="left:1351px;top:164px" width="3" height="12"><circle cx="1.5" cy="1.5" r="1.2" fill="#c4c4c4"/><circle cx="1.5" cy="6" r="1.2" fill="#c4c4c4"/><circle cx="1.5" cy="10.5" r="1.2" fill="#c4c4c4"/></svg>
<div class="a" style="left:1162px;top:181px;width:203px;height:72px;background:#383838"></div>
<div class="a u" style="left:1181px;top:188px;color:#d2d2d2;font-size:12.5px">Position</div>
<div class="a u" style="left:1302px;top:188px;color:#c4c4c4;font-size:12.5px">X</div>
<div class="a u" style="left:1323px;top:188px;color:#c4c4c4;font-size:12.5px">Y</div>
<div class="a u" style="left:1344px;top:188px;color:#c4c4c4;font-size:12.5px">Z</div>
<div class="a" style="left:1318px;top:186px;width:2px;height:17px;background:#232323"></div>
<div class="a" style="left:1339px;top:186px;width:2px;height:17px;background:#232323"></div>
<div class="a" style="left:1360px;top:186px;width:2px;height:17px;background:#232323"></div>
<div class="a u" style="left:1181px;top:208px;color:#d2d2d2;font-size:12.5px">Rotation</div>
<div class="a u" style="left:1302px;top:208px;color:#c4c4c4;font-size:12.5px">X</div>
<div class="a u" style="left:1323px;top:208px;color:#c4c4c4;font-size:12.5px">Y</div>
<div class="a u" style="left:1344px;top:208px;color:#c4c4c4;font-size:12.5px">Z</div>
<div class="a" style="left:1318px;top:206px;width:2px;height:17px;background:#232323"></div>
<div class="a" style="left:1339px;top:206px;width:2px;height:17px;background:#232323"></div>
<div class="a" style="left:1360px;top:206px;width:2px;height:17px;background:#232323"></div>
<div class="a u" style="left:1181px;top:228px;color:#d2d2d2;font-size:12.5px">Scale</div>
<div class="a u" style="left:1302px;top:228px;color:#c4c4c4;font-size:12.5px">X</div>
<div class="a u" style="left:1323px;top:228px;color:#c4c4c4;font-size:12.5px">Y</div>
<div class="a u" style="left:1344px;top:228px;color:#c4c4c4;font-size:12.5px">Z</div>
<div class="a" style="left:1318px;top:226px;width:2px;height:17px;background:#232323"></div>
<div class="a" style="left:1339px;top:226px;width:2px;height:17px;background:#232323"></div>
<div class="a" style="left:1360px;top:226px;width:2px;height:17px;background:#232323"></div>
<svg style="left:1280px;top:229px" width="14" height="11" viewBox="0 0 14 11"><path d="M1 5.5C2.5 3 4.5 2 7 2C9.5 2 11.5 3 13 5.5C11.5 8 9.5 9 7 9C4.5 9 2.5 8 1 5.5Z" stroke="#c4c4c4" fill="none" stroke-width="1.1"/><path d="M2.5 1L11.5 10" stroke="#c4c4c4" stroke-width="1.1"/></svg>
<div class="a" style="left:1162px;top:252px;width:203px;height:1px;background:#1e1e1e"></div>
<div class="a" style="left:1162px;top:253px;width:203px;height:20px;background:#3e3e3e;border-bottom:1px solid #2e2e2e"></div>
<svg style="left:1167px;top:260px" width="10" height="8"><path d="M0 0H9L4.5 7.5Z" fill="#7d7d7d"/></svg>
<svg style="left:1183px;top:256px" width="14" height="14" viewBox="0 0 14 14"><path d="M0.5 0.5H3V2H2V3H0.5Z M13.5 0.5H11V2H12V3H13.5Z M0.5 13.5H3V12H2V11H0.5Z M13.5 13.5H11V12H12V11H13.5Z" fill="#9be05a"/><rect x="3.5" y="1.5" width="7" height="11" rx="3.5" fill="#9be05a"/></svg>
<div class="a" style="left:1202px;top:256px;width:14px;height:14px;background:#2a2a2a;border:1px solid #212121;border-radius:2px"></div><svg style="left:1204px;top:259px" width="10" height="9"><path d="M1 4.5L3.8 7.3L9 1.5" stroke="#e8e8e8" stroke-width="1.5" fill="none"/></svg>
<div class="a" style="left:1222px;top:253px;width:80px;height:20px;overflow:hidden"><div class="a u" style="left:0;top:4px;color:#d8d8d8;font-size:12.5px;font-weight:bold">Character Controller</div></div>
<svg style="left:1307px;top:258px" width="11" height="11"><circle cx="5.5" cy="5.5" r="5.3" fill="#c4c4c4"/><text x="5.5" y="9" font-size="9" font-weight="bold" text-anchor="middle" fill="#3e3e3e" font-family="Liberation Sans">?</text></svg>
<svg style="left:1327px;top:258px" width="11" height="11"><path d="M0 3H11M0 8H11" stroke="#c4c4c4" stroke-width="1.3"/><path d="M7 0.5V5.5M4 5.5V10.5" stroke="#c4c4c4" stroke-width="1.6"/></svg>
<svg style="left:1351px;top:257px" width="3" height="12"><circle cx="1.5" cy="1.5" r="1.2" fill="#c4c4c4"/><circle cx="1.5" cy="6" r="1.2" fill="#c4c4c4"/><circle cx="1.5" cy="10.5" r="1.2" fill="#c4c4c4"/></svg>
<div class="a u" style="left:1181px;top:282px;color:#d2d2d2;font-size:12.5px">Slope Limit</div>
<div class="a" style="left:1302px;top:278px;width:58px;height:18px;background:#2a2a2a;border:1px solid #212121;border-radius:3px;overflow:hidden"><div class="a u" style="left:3px;top:2px;color:#d2d2d2;font-size:12.5px">45</div></div>
<div class="a u" style="left:1181px;top:302px;color:#d2d2d2;font-size:12.5px">Step Offset</div>
<div class="a" style="left:1302px;top:298px;width:58px;height:18px;background:#2a2a2a;border:1px solid #212121;border-radius:3px;overflow:hidden"><div class="a u" style="left:3px;top:2px;color:#d2d2d2;font-size:12.5px">0.3</div></div>
<div class="a u" style="left:1181px;top:322px;color:#d2d2d2;font-size:12.5px">Skin Width</div>
<div class="a" style="left:1302px;top:318px;width:58px;height:18px;background:#2a2a2a;border:1px solid #212121;border-radius:3px;overflow:hidden"><div class="a u" style="left:3px;top:2px;color:#d2d2d2;font-size:12.5px">0.0001</div></div>
<div class="a u" style="left:1181px;top:342px;color:#d2d2d2;font-size:12.5px">Min Move Distance</div>
<div class="a" style="left:1302px;top:338px;width:58px;height:18px;background:#2a2a2a;border:1px solid #212121;border-radius:3px;overflow:hidden"><div class="a u" style="left:3px;top:2px;color:#d2d2d2;font-size:12.5px">0.001</div></div>
<div class="a u" style="left:1181px;top:362px;color:#d2d2d2;font-size:12.5px">Center</div>
<div class="a u" style="left:1196px;top:382px;color:#c4c4c4;font-size:12.5px">X</div>
<div class="a" style="left:1210px;top:378px;width:38px;height:18px;background:#2a2a2a;border:1px solid #212121;border-radius:3px;overflow:hidden"><div class="a u" style="left:3px;top:2px;color:#d2d2d2;font-size:12.5px">0</div></div>
<div class="a u" style="left:1253px;top:382px;color:#c4c4c4;font-size:12.5px">Y</div>
<div class="a" style="left:1267px;top:378px;width:38px;height:18px;background:#2a2a2a;border:1px solid #212121;border-radius:3px;overflow:hidden"><div class="a u" style="left:3px;top:2px;color:#d2d2d2;font-size:12.5px">1</div></div>
<div class="a u" style="left:1310px;top:382px;color:#c4c4c4;font-size:12.5px">Z</div>
<div class="a" style="left:1323px;top:378px;width:38px;height:18px;background:#2a2a2a;border:1px solid #212121;border-radius:3px;overflow:hidden"><div class="a u" style="left:3px;top:2px;color:#d2d2d2;font-size:12.5px">0</div></div>
<div class="a u" style="left:1181px;top:402px;color:#d2d2d2;font-size:12.5px">Radius</div>
<div class="a" style="left:1302px;top:398px;width:58px;height:18px;background:#2a2a2a;border:1px solid #212121;border-radius:3px;overflow:hidden"><div class="a u" style="left:3px;top:2px;color:#d2d2d2;font-size:12.5px">0.5</div></div>
<div class="a u" style="left:1181px;top:422px;color:#d2d2d2;font-size:12.5px">Height</div>
<div class="a" style="left:1302px;top:418px;width:58px;height:18px;background:#2a2a2a;border:1px solid #212121;border-radius:3px;overflow:hidden"><div class="a u" style="left:3px;top:2px;color:#d2d2d2;font-size:12.5px">2</div></div>
<svg style="left:1170px;top:444px" width="7" height="9"><path d="M0 0L6.5 4.5L0 9Z" fill="#7d7d7d"/></svg>
<div class="a u" style="left:1181px;top:442px;color:#d2d2d2;font-size:12.5px">Layer Overrides</div>
<div class="a" style="left:1162px;top:463px;width:203px;height:1px;background:#1e1e1e"></div>
<div class="a" style="left:1162px;top:464px;width:203px;height:20px;background:#3e3e3e;border-bottom:1px solid #2e2e2e"></div>
<svg style="left:1167px;top:471px" width="10" height="8"><path d="M0 0H9L4.5 7.5Z" fill="#7d7d7d"/></svg>
<svg style="left:1184px;top:467px" width="12" height="14" viewBox="0 0 12 14"><path d="M0.5 1C0.5 0.7 0.7 0.5 1 0.5H8L11.5 4V13C11.5 13.3 11.3 13.5 11 13.5H1C0.7 13.5 0.5 13.3 0.5 13Z" fill="#f0f0f0"/><path d="M4.5 3.5L3.3 11M7.5 3.5L6.3 11M2.5 5.8H9M2 8.8H8.5" stroke="#2e7d32" stroke-width="1.3"/></svg>
<div class="a" style="left:1202px;top:467px;width:14px;height:14px;background:#2a2a2a;border:1px solid #212121;border-radius:2px"></div><svg style="left:1204px;top:470px" width="10" height="9"><path d="M1 4.5L3.8 7.3L9 1.5" stroke="#e8e8e8" stroke-width="1.5" fill="none"/></svg>
<div class="a" style="left:1222px;top:464px;width:80px;height:20px;overflow:hidden"><div class="a u" style="left:0;top:4px;color:#d8d8d8;font-size:12.5px;font-weight:bold">Player Movement</div></div>
<svg style="left:1307px;top:469px" width="11" height="11"><circle cx="5.5" cy="5.5" r="5.3" fill="#c4c4c4"/><text x="5.5" y="9" font-size="9" font-weight="bold" text-anchor="middle" fill="#3e3e3e" font-family="Liberation Sans">?</text></svg>
<svg style="left:1327px;top:469px" width="11" height="11"><path d="M0 3H11M0 8H11" stroke="#c4c4c4" stroke-width="1.3"/><path d="M7 0.5V5.5M4 5.5V10.5" stroke="#c4c4c4" stroke-width="1.6"/></svg>
<svg style="left:1351px;top:468px" width="3" height="12"><circle cx="1.5" cy="1.5" r="1.2" fill="#c4c4c4"/><circle cx="1.5" cy="6" r="1.2" fill="#c4c4c4"/><circle cx="1.5" cy="10.5" r="1.2" fill="#c4c4c4"/></svg>
<div class="a u" style="left:1181px;top:491px;color:#7f7f7f;font-size:12.5px">Script</div>
<div class="a" style="left:1302px;top:488px;width:59px;height:18px;background:#2a2a2a;border:1px solid #212121;border-radius:3px;overflow:hidden"><svg style="left:4px;top:2px" width="10" height="12" viewBox="0 0 12 14"><path d="M0.5 1H8L11.5 4V13.5H0.5Z" fill="#7c8a7c"/><path d="M4.5 3.5L3.3 11M7.5 3.5L6.3 11M2.5 5.8H9M2 8.8H8.5" stroke="#4d5e4d" stroke-width="1.3"/></svg><div class="a u" style="left:19px;top:2px;color:#d2d2d2;font-size:12.5px"><span style="color:#7f7f7f">PlayerMovement</span></div><div class="a" style="left:39px;top:0;width:18px;height:16px;background:#2a2a2a"></div><svg style="left:43px;top:3px" width="11" height="11"><circle cx="5.5" cy="5.5" r="4.6" stroke="#c4c4c4" fill="none" stroke-width="1.2"/><circle cx="5.5" cy="5.5" r="2" fill="#c4c4c4"/></svg></div>
<div class="a" style="left:1162px;top:514px;width:203px;height:1px;background:#1e1e1e"></div>
<div class="a" style="left:1162px;top:515px;width:203px;height:20px;background:#3e3e3e;border-bottom:1px solid #2e2e2e"></div>
<svg style="left:1167px;top:522px" width="10" height="8"><path d="M0 0H9L4.5 7.5Z" fill="#7d7d7d"/></svg>
<svg style="left:1184px;top:518px" width="12" height="14" viewBox="0 0 12 14"><path d="M0.5 1C0.5 0.7 0.7 0.5 1 0.5H8L11.5 4V13C11.5 13.3 11.3 13.5 11 13.5H1C0.7 13.5 0.5 13.3 0.5 13Z" fill="#f0f0f0"/><path d="M4.5 3.5L3.3 11M7.5 3.5L6.3 11M2.5 5.8H9M2 8.8H8.5" stroke="#2e7d32" stroke-width="1.3"/></svg>
<div class="a" style="left:1202px;top:518px;width:14px;height:14px;background:#2a2a2a;border:1px solid #212121;border-radius:2px"></div><svg style="left:1204px;top:521px" width="10" height="9"><path d="M1 4.5L3.8 7.3L9 1.5" stroke="#e8e8e8" stroke-width="1.5" fill="none"/></svg>
<div class="a" style="left:1222px;top:515px;width:80px;height:20px;overflow:hidden"><div class="a u" style="left:0;top:4px;color:#d8d8d8;font-size:12.5px;font-weight:bold">Player Shooting</div></div>
<svg style="left:1307px;top:520px" width="11" height="11"><circle cx="5.5" cy="5.5" r="5.3" fill="#c4c4c4"/><text x="5.5" y="9" font-size="9" font-weight="bold" text-anchor="middle" fill="#3e3e3e" font-family="Liberation Sans">?</text></svg>
<svg style="left:1327px;top:520px" width="11" height="11"><path d="M0 3H11M0 8H11" stroke="#c4c4c4" stroke-width="1.3"/><path d="M7 0.5V5.5M4 5.5V10.5" stroke="#c4c4c4" stroke-width="1.6"/></svg>
<svg style="left:1351px;top:519px" width="3" height="12"><circle cx="1.5" cy="1.5" r="1.2" fill="#c4c4c4"/><circle cx="1.5" cy="6" r="1.2" fill="#c4c4c4"/><circle cx="1.5" cy="10.5" r="1.2" fill="#c4c4c4"/></svg>
<div class="a u" style="left:1181px;top:542px;color:#7f7f7f;font-size:12.5px">Script</div>
<div class="a" style="left:1302px;top:539px;width:59px;height:18px;background:#2a2a2a;border:1px solid #212121;border-radius:3px;overflow:hidden"><svg style="left:4px;top:2px" width="10" height="12" viewBox="0 0 12 14"><path d="M0.5 1H8L11.5 4V13.5H0.5Z" fill="#7c8a7c"/><path d="M4.5 3.5L3.3 11M7.5 3.5L6.3 11M2.5 5.8H9M2 8.8H8.5" stroke="#4d5e4d" stroke-width="1.3"/></svg><div class="a u" style="left:19px;top:2px;color:#d2d2d2;font-size:12.5px"><span style="color:#7f7f7f">PlayerShooting</span></div><div class="a" style="left:39px;top:0;width:18px;height:16px;background:#2a2a2a"></div><svg style="left:43px;top:3px" width="11" height="11"><circle cx="5.5" cy="5.5" r="4.6" stroke="#c4c4c4" fill="none" stroke-width="1.2"/><circle cx="5.5" cy="5.5" r="2" fill="#c4c4c4"/></svg></div>
<div class="a u" style="left:1181px;top:562px;color:#d2d2d2;font-size:12.5px">Bullet Object</div>
<div class="a" style="left:1302px;top:559px;width:59px;height:18px;background:#2a2a2a;border:1px solid #212121;border-radius:3px;overflow:hidden"><svg style="left:3px;top:2px" width="12" height="12" viewBox="0 0 12 12"><path d="M6 0.5L11 3V9L6 11.5L1 9V3Z" fill="#5ec8f2"/><path d="M1 3L6 5.5L11 3M6 5.5V11.5" stroke="#2a2a2a" stroke-width="0.9" fill="none"/></svg><div class="a u" style="left:19px;top:2px;color:#d2d2d2;font-size:12.5px">Bullet</div><div class="a" style="left:39px;top:0;width:18px;height:16px;background:#2a2a2a"></div><svg style="left:43px;top:3px" width="11" height="11"><circle cx="5.5" cy="5.5" r="4.6" stroke="#c4c4c4" fill="none" stroke-width="1.2"/><circle cx="5.5" cy="5.5" r="2" fill="#c4c4c4"/></svg></div>
<div class="a u" style="left:1181px;top:582px;color:#d2d2d2;font-size:12.5px">Bullet Out</div>
<div class="a" style="left:1302px;top:579px;width:59px;height:18px;background:#2a2a2a;border:1px solid #212121;border-radius:3px;overflow:hidden"><svg style="left:3px;top:2px" width="12" height="12" viewBox="0 0 15 13"><path d="M7.5 1.5V6.5" stroke="#9be05a" stroke-width="2" stroke-linecap="round"/><path d="M6.5 7.5L2 10" stroke="#4cc3f5" stroke-width="2" stroke-linecap="round"/><path d="M8.5 7.5L13 10" stroke="#f26d3d" stroke-width="2" stroke-linecap="round"/></svg><div class="a u" style="left:19px;top:2px;color:#d2d2d2;font-size:12.5px">BulletOut</div><div class="a" style="left:39px;top:0;width:18px;height:16px;background:#2a2a2a"></div><svg style="left:43px;top:3px" width="11" height="11"><circle cx="5.5" cy="5.5" r="4.6" stroke="#c4c4c4" fill="none" stroke-width="1.2"/><circle cx="5.5" cy="5.5" r="2" fill="#c4c4c4"/></svg></div>
<div class="a u" style="left:1181px;top:602px;color:#d2d2d2;font-size:12.5px">Shoot Force</div>
<div class="a" style="left:1302px;top:599px;width:59px;height:18px;background:#2a2a2a;border:1px solid #212121;border-radius:3px;overflow:hidden"><div class="a u" style="left:3px;top:2px;color:#d2d2d2;font-size:12.5px">5000</div></div>
<div class="a" style="left:1162px;top:625px;width:203px;height:1px;background:#1e1e1e"></div>
<div class="a" style="left:1163px;top:635px;width:205px;height:22px;background:#585858;border-radius:3px;border-bottom:1px solid #242424"></div>
<div class="a u" style="left:1232px;top:639px;color:#e4e4e4;font-size:12.5px">Add Component</div>
<div class="a" style="left:1161px;top:80px;width:1px;height:625px;background:#191919"></div>

<!-- ===== PROJ ===== -->
<div class="a" style="left:476px;top:528px;width:685px;height:177px;background:#191919"></div>
<div class="a" style="left:476px;top:530px;width:684px;height:19px;background:#282828"></div>
<div class="a" style="left:476px;top:530px;width:80px;height:19px;background:#3c3c3c;border-top:2px solid #3a79bb;border-radius:2px 2px 0 0"></div>
<svg style="left:483px;top:534px" width="13" height="11" viewBox="0 0 13 11"><path d="M0.5 1C0.5 0.7 0.7 0.5 1 0.5H5L6.5 2H12C12.3 2 12.5 2.2 12.5 2.5V10C12.5 10.3 12.3 10.5 12 10.5H1C0.7 10.5 0.5 10.3 0.5 10Z" fill="#c4c4c4"/></svg>
<div class="a u" style="left:499px;top:535px;color:#d2d2d2;font-size:12.5px">Project</div>
<svg style="left:566px;top:534px" width="11" height="12" viewBox="0 0 11 12"><rect x="0.5" y="0.5" width="10" height="11" fill="#c4c4c4"/><path d="M2.5 3H8.5M2.5 5H8.5M2.5 7H8.5M2.5 9H6.5" stroke="#282828" stroke-width="1"/></svg>
<div class="a u" style="left:581px;top:535px;color:#d2d2d2;font-size:12.5px">Console</div>
<svg style="left:1125px;top:534px" width="10" height="12"><path d="M3 5.5V3.2C3 1.8 4 1 5.2 1C6.4 1 7.4 1.8 7.4 3.2" stroke="#d0d0d0" fill="none" stroke-width="1.2"/><rect x="1" y="6" width="8" height="5.5" stroke="#c4c4c4" fill="none" stroke-width="1.2"/></svg>
<svg style="left:1146px;top:534px" width="3" height="12"><circle cx="1.5" cy="1.5" r="1.2" fill="#c4c4c4"/><circle cx="1.5" cy="6" r="1.2" fill="#c4c4c4"/><circle cx="1.5" cy="10.5" r="1.2" fill="#c4c4c4"/></svg>
<div class="a" style="left:476px;top:549px;width:684px;height:21px;background:#3c3c3c;border-bottom:1px solid #242424"></div>
<svg style="left:482px;top:552px" width="13" height="13"><path d="M6.5 0.5V12.5M0.5 6.5H12.5" stroke="#d0d0d0" stroke-width="2"/></svg>
<svg style="left:498px;top:557px" width="8" height="5"><path d="M0 0H7.5L3.75 4.5Z" fill="#c4c4c4"/></svg>
<div class="a" style="left:695px;top:551px;width:318px;height:16px;background:#2a2a2a;border:1px solid #212121;border-radius:4px"></div>
<svg style="left:699px;top:554px" width="10" height="10"><circle cx="4" cy="4" r="2.8" stroke="#c4c4c4" fill="none" stroke-width="1.3"/><path d="M6 6L8.8 8.8" stroke="#c4c4c4" stroke-width="1.6"/></svg>
<div class="a" style="left:994px;top:552px;width:18px;height:14px;background:#383838;border-left:1px solid #2a2a2a"></div>
<svg style="left:997px;top:552px" width="14" height="14"><rect x="4.5" y="1" width="8.5" height="8.5" stroke="#c4c4c4" fill="none" stroke-width="1.1"/><rect x="1" y="8.5" width="5" height="5" stroke="#c4c4c4" fill="#383838" stroke-width="1.1"/><path d="M6 8L11 3M8 3H11V6" stroke="#c4c4c4" fill="none" stroke-width="1.1"/></svg>
<div class="a" style="left:1016px;top:549px;width:1px;height:20px;background:#2a2a2a"></div>
<div class="a" style="left:1042px;top:549px;width:1px;height:20px;background:#2a2a2a"></div>
<div class="a" style="left:1068px;top:549px;width:1px;height:20px;background:#2a2a2a"></div>
<div class="a" style="left:1094px;top:549px;width:1px;height:20px;background:#2a2a2a"></div>
<div class="a" style="left:1120px;top:549px;width:1px;height:20px;background:#2a2a2a"></div>
<svg style="left:1022px;top:552px" width="14" height="13" viewBox="0 0 14 13"><rect x="2" y="0.5" width="6" height="6" fill="#c4c4c4"/><circle cx="4.5" cy="9" r="3.8" fill="#c4c4c4"/><path d="M10 4L13.5 11H6.5Z" fill="#c4c4c4"/></svg>
<svg style="left:1048px;top:553px" width="13" height="12" viewBox="0 0 13 12"><path d="M6 0.5H12.5V7L6.5 11.5L0.8 6Z" fill="#c4c4c4"/><circle cx="9.5" cy="3.5" r="1.2" fill="#3c3c3c"/></svg>
<svg style="left:1073px;top:552px" width="14" height="14" viewBox="0 0 14 14"><path d="M4.5 0.5H9.5L13.5 4.5V9.5L9.5 13.5H4.5L0.5 9.5V4.5Z" fill="#c4c4c4"/><rect x="6.2" y="3" width="1.8" height="5.5" fill="#3c3c3c"/><rect x="6.2" y="9.5" width="1.8" height="1.8" fill="#3c3c3c"/></svg>
<svg style="left:1099px;top:553px" width="13" height="12" viewBox="0 0 13 12"><path d="M6.5 0.5L8.2 4.2L12.3 4.5L9.2 7.2L10.1 11.3L6.5 9.2L2.9 11.3L3.8 7.2L0.7 4.5L4.8 4.2Z" fill="#8a8a8a"/></svg>
<svg style="left:1124px;top:554px" width="16" height="10" viewBox="0 0 16 10"><path d="M1 5C2.8 2 5 0.8 8 0.8C11 0.8 13.2 2 15 5C13.2 8 11 9.2 8 9.2C5 9.2 2.8 8 1 5Z" stroke="#8a8a8a" fill="none" stroke-width="1.2"/><circle cx="8" cy="5" r="2.6" fill="#8a8a8a"/></svg>
<div class="a u" style="left:1141px;top:553px;color:#8a8a8a;font-size:12.5px">14</div>
<div class="a" style="left:476px;top:570px;width:195px;height:135px;background:#383838"></div>
<div class="a" style="left:671px;top:570px;width:12px;height:135px;background:#353535"></div>
<svg style="left:674px;top:575px" width="7" height="5"><path d="M0 5H7L3.5 0Z" fill="#c4c4c4"/></svg>
<div class="a" style="left:673px;top:590px;width:9px;height:88px;background:#5e5e5e;border-radius:4px"></div>
<svg style="left:674px;top:694px" width="7" height="5"><path d="M0 0H7L3.5 5Z" fill="#c4c4c4"/></svg>
<div class="a" style="left:683px;top:570px;width:1px;height:135px;background:#232323"></div>
<div class="a" style="left:476px;top:570px;width:195px;height:7px;overflow:hidden"><div class="a u" style="left:35px;top:-7px;color:#d2d2d2;font-weight:bold;font-size:12.5px">Favorites</div><svg style="left:6px;top:-4px" width="9" height="8"><path d="M0 0H9L4.5 7.5Z" fill="#6e6e6e"/></svg><svg style="left:19px;top:-6px" width="12" height="12"><path d="M6 0.5L7.6 4L11.5 4.3L8.6 6.8L9.5 10.7L6 8.7L2.5 10.7L3.4 6.8L0.5 4.3L4.4 4Z" fill="#c4c4c4"/></svg></div>
<svg style="left:507px;top:579px" width="13" height="13"><circle cx="5" cy="5" r="4" stroke="#c4c4c4" fill="none" stroke-width="1.2"/><path d="M8 8L12 12" stroke="#c4c4c4" stroke-width="1.6"/></svg>
<div class="a u" style="left:524px;top:580px;color:#d2d2d2;font-size:12.5px">All Materials</div>
<svg style="left:507px;top:595px" width="13" height="13"><circle cx="5" cy="5" r="4" stroke="#c4c4c4" fill="none" stroke-width="1.2"/><path d="M8 8L12 12" stroke="#c4c4c4" stroke-width="1.6"/></svg>
<div class="a u" style="left:524px;top:596px;color:#d2d2d2;font-size:12.5px">All Models</div>
<svg style="left:507px;top:611px" width="13" height="13"><circle cx="5" cy="5" r="4" stroke="#c4c4c4" fill="none" stroke-width="1.2"/><path d="M8 8L12 12" stroke="#c4c4c4" stroke-width="1.6"/></svg>
<div class="a u" style="left:524px;top:612px;color:#d2d2d2;font-size:12.5px">All Prefabs</div>
<svg style="left:480px;top:645px" width="9" height="8"><path d="M0 0H9L4.5 7.5Z" fill="#6e6e6e"/></svg>
<svg style="left:493px;top:642px" width="16" height="13" viewBox="0 0 16 13"><path d="M0.5 1.5C0.5 1 0.8 0.7 1.2 0.7H5.5L7 2.2H12.5C13 2.2 13.3 2.5 13.3 3V4.5H3.5L0.5 12Z" fill="#c4c4c4"/><path d="M3.8 5.2H15.5L12.8 12.3H1.2Z" fill="#c4c4c4"/></svg>
<div class="a u" style="left:511px;top:643px;color:#d8d8d8;font-size:12.5px;font-weight:bold">Assets</div>
<div class="a" style="left:476px;top:689px;width:195px;height:16px;background:#4d4d4d"></div>
<svg style="left:495px;top:660px" width="7" height="9"><path d="M0 0L6.5 4.5L0 9Z" fill="#6e6e6e"/></svg>
<svg style="left:507px;top:659px" width="14" height="12" viewBox="0 0 14 12"><path d="M0.5 1C0.5 0.7 0.7 0.5 1 0.5H5L6.5 2H13C13.3 2 13.5 2.2 13.5 2.5V11C13.5 11.3 13.3 11.5 13 11.5H1C0.7 11.5 0.5 11.3 0.5 11Z" fill="#c4c4c4"/></svg>
<div class="a u" style="left:524px;top:659px;color:#d2d2d2;font-size:12.5px">Resources</div>
<svg style="left:507px;top:675px" width="14" height="12" viewBox="0 0 14 12"><path d="M0.5 1C0.5 0.7 0.7 0.5 1 0.5H5L6.5 2H13C13.3 2 13.5 2.2 13.5 2.5V11C13.5 11.3 13.3 11.5 13 11.5H1C0.7 11.5 0.5 11.3 0.5 11Z" fill="#c4c4c4"/></svg>
<div class="a u" style="left:524px;top:675px;color:#d2d2d2;font-size:12.5px">Scenes</div>
<svg style="left:507px;top:691px" width="14" height="12" viewBox="0 0 14 12"><path d="M0.5 1C0.5 0.7 0.7 0.5 1 0.5H5L6.5 2H13C13.3 2 13.5 2.2 13.5 2.5V11C13.5 11.3 13.3 11.5 13 11.5H1C0.7 11.5 0.5 11.3 0.5 11Z" fill="#c4c4c4"/></svg>
<div class="a u" style="left:524px;top:691px;color:#d2d2d2;font-size:12.5px">Scripts</div>
<div class="a" style="left:684px;top:570px;width:476px;height:21px;background:#3e3e3e"></div>
<div class="a u" style="left:688px;top:574px;color:#b4b4b4;font-size:12.5px">Assets</div>
<svg style="left:733px;top:575px" width="6" height="10"><path d="M0.5 0.5L5 5L0.5 9.5" stroke="#9a9a9a" fill="none" stroke-width="1.1"/></svg>
<div class="a u" style="left:743px;top:574px;color:#d8d8d8;font-size:12.5px;font-weight:bold">Scripts</div>
<div class="a" style="left:684px;top:591px;width:476px;height:92px;background:#333333"></div>
<svg style="left:707px;top:605px" width="51" height="59" viewBox="0 0 51 59"><path d="M0 3C0 1.3 1.3 0 3 0H39L51 12V56C51 57.7 49.7 59 48 59H3C1.3 59 0 57.7 0 56Z" fill="#ececec"/><path d="M21 13L16.5 47M33 13L28.5 47M10 23.5H41.5M8.5 36.5H40" stroke="#27782e" stroke-width="6"/></svg>
<div class="a u" style="left:683px;top:670px;width:100px;text-align:center;color:#d2d2d2;font-size:11.5px">Bullet</div>
<svg style="left:786px;top:605px" width="51" height="59" viewBox="0 0 51 59"><path d="M0 3C0 1.3 1.3 0 3 0H39L51 12V56C51 57.7 49.7 59 48 59H3C1.3 59 0 57.7 0 56Z" fill="#ececec"/><path d="M21 13L16.5 47M33 13L28.5 47M10 23.5H41.5M8.5 36.5H40" stroke="#27782e" stroke-width="6"/></svg>
<div class="a u" style="left:762px;top:670px;width:100px;text-align:center;color:#d2d2d2;font-size:11.5px">PlayerMov...</div>
<svg style="left:865px;top:605px" width="51" height="59" viewBox="0 0 51 59"><path d="M0 3C0 1.3 1.3 0 3 0H39L51 12V56C51 57.7 49.7 59 48 59H3C1.3 59 0 57.7 0 56Z" fill="#ececec"/><path d="M21 13L16.5 47M33 13L28.5 47M10 23.5H41.5M8.5 36.5H40" stroke="#27782e" stroke-width="6"/></svg>
<div class="a u" style="left:841px;top:670px;width:100px;text-align:center;color:#d2d2d2;font-size:11.5px">PlayerShoot...</div>
<div class="a" style="left:1148px;top:591px;width:11px;height:92px;background:#333333"></div>
<svg style="left:1150px;top:596px" width="7" height="5"><path d="M0 5H7L3.5 0Z" fill="#c4c4c4"/></svg>
<div class="a" style="left:1149px;top:607px;width:9px;height:58px;background:#5e5e5e;border-radius:4px"></div>
<svg style="left:1150px;top:673px" width="7" height="5"><path d="M0 0H7L3.5 5Z" fill="#c4c4c4"/></svg>
<div class="a" style="left:684px;top:683px;width:476px;height:22px;background:#3e3e3e"></div>
<div class="a" style="left:1089px;top:694px;width:54px;height:2px;background:#7a7a7a"></div>
<div class="a" style="left:1117px;top:689px;width:11px;height:11px;border-radius:6px;background:#a8a8a8"></div>
<div class="a" style="left:1160px;top:528px;width:2px;height:177px;background:#191919"></div>


<!-- unity status bar -->
<div class="a" style="left:476px;top:705px;width:889px;height:23px;background:#191919"></div>
<div class="a" style="left:1261px;top:706px;width:1px;height:21px;background:#2c2c2c"></div>
<div class="a" style="left:1286px;top:706px;width:1px;height:21px;background:#2c2c2c"></div>
<div class="a" style="left:1312px;top:706px;width:1px;height:21px;background:#2c2c2c"></div>
<div class="a" style="left:1338px;top:706px;width:1px;height:21px;background:#2c2c2c"></div>
<svg style="left:1266px;top:710px" width="15" height="15" viewBox="0 0 15 15"><ellipse cx="7.5" cy="9" rx="4" ry="5" fill="#c4c4c4"/><circle cx="7.5" cy="3.5" r="2.3" fill="#c4c4c4"/><path d="M1 6L3.5 7M1 10H3.5M1.5 14L3.5 12M14 6L11.5 7M14 10H11.5M13.5 14L11.5 12M1 1L14 14" stroke="#c4c4c4" stroke-width="1.2"/><path d="M2 1.5L13.5 13" stroke="#191919" stroke-width="0.8" transform="translate(1,-1)"/></svg>
<svg style="left:1292px;top:710px" width="15" height="15" viewBox="0 0 15 15"><ellipse cx="7" cy="3" rx="5.5" ry="2.3" fill="#c4c4c4"/><path d="M1.5 5C1.5 6.3 4 7.3 7 7.3C10 7.3 12.5 6.3 12.5 5V7.5C12.5 8.8 10 9.8 7 9.8C4 9.8 1.5 8.8 1.5 7.5Z M1.5 10C1.5 11.3 4 12.3 7 12.3C10 12.3 12.5 11.3 12.5 10V12C12.5 13.3 10 14.3 7 14.3C4 14.3 1.5 13.3 1.5 12Z" fill="#c4c4c4"/><path d="M1 1L14 14" stroke="#c4c4c4" stroke-width="1.2"/></svg>
<svg style="left:1318px;top:710px" width="15" height="15" viewBox="0 0 15 15"><circle cx="7.5" cy="7.5" r="5" stroke="#c4c4c4" fill="none" stroke-width="1.3"/><circle cx="7.5" cy="7.5" r="2" fill="#c4c4c4"/><path d="M1 4L3 2M14 11L12 13M7.5 0.5V2.5M0.5 7.5H2.5M1 1L14 14" stroke="#c4c4c4" stroke-width="1.2"/></svg>
<svg style="left:1344px;top:710px" width="15" height="15" viewBox="0 0 15 15"><circle cx="7.5" cy="7.5" r="6.3" stroke="#c4c4c4" fill="none" stroke-width="1.3"/><path d="M4.5 7.5L6.8 9.8L10.8 5.5" stroke="#c4c4c4" stroke-width="1.4" fill="none"/></svg>
<!-- ================= TASKBAR ================= -->
<div class="a" style="left:0;top:728px;width:1366px;height:40px;background:linear-gradient(90deg,#283126 0%,#2a3726 30%,#2b3c27 55%,#2d4129 68%,#2c4028 73%,#233820 78%,#22361f 88%,#213420 100%)"></div>
<svg style="left:16px;top:740px" width="17" height="17" viewBox="0 0 17 17"><path d="M0 2.3L6.9 1.3V8H0Z M7.7 1.2L17 0V8H7.7Z M0 8.8H6.9V15.6L0 14.6Z M7.7 8.8H17V17L7.7 15.7Z" fill="#ffffff"/></svg>
<div class="a" style="left:48px;top:728px;width:287px;height:40px;background:#f0f0f0;border-top:1px solid #d8d8d8"></div>
<svg style="left:60px;top:740px" width="17" height="17" viewBox="0 0 17 17"><circle cx="10.5" cy="6.5" r="5.3" stroke="#1e1e1e" fill="none" stroke-width="1.3"/><path d="M6.7 10.3L0.8 16.2" stroke="#1e1e1e" stroke-width="1.5"/></svg>
<div class="a" style="left:88px;top:741px;font-size:14.5px;color:#333333;white-space:pre">Type here to search</div>
<svg style="left:263px;top:735px" width="62" height="28" viewBox="0 0 62 28"><path d="M28 3Q30 13 39 15Q30 17 28 27Q26 17 17 15Q26 13 28 3Z" fill="#f7c22c"/><path d="M44 13Q45 18 49 19Q45 20 44 25Q43 20 39 19Q43 18 44 13Z" fill="#f7c22c"/><path d="M6 18Q7 21 9.5 22Q7 23 6 26Q5 23 2.5 22Q5 21 6 18Z" fill="#2d9be8"/><circle cx="41" cy="4" r="1.8" fill="#ee6a3a"/><circle cx="58" cy="24" r="1.8" fill="#7ec444"/></svg>
<!-- word -->
<svg style="left:351px;top:736px" width="22" height="22" viewBox="0 0 22 22"><rect x="6" y="2" width="15" height="18" fill="#f4f8fc" stroke="#9db8d6" stroke-width="1"/><path d="M9 6H19M9 9H19M9 12H19M9 15H19" stroke="#6f97c5" stroke-width="1"/><rect x="0.5" y="3.5" width="13" height="14" fill="#2a5ba8"/><text x="7" y="15" font-size="11" font-weight="bold" fill="#fff" text-anchor="middle" font-family="Liberation Sans">W</text></svg>
<!-- powerpoint -->
<svg style="left:400px;top:736px" width="22" height="22" viewBox="0 0 22 22"><rect x="6" y="2" width="15" height="18" fill="#fbf3ef" stroke="#d9a58c" stroke-width="1"/><circle cx="15" cy="12" r="4" fill="#e36f3e"/><rect x="0.5" y="3.5" width="13" height="14" fill="#d35230"/><text x="7" y="15" font-size="11" font-weight="bold" fill="#fff" text-anchor="middle" font-family="Liberation Sans">P</text></svg>
<!-- excel -->
<svg style="left:449px;top:736px" width="22" height="22" viewBox="0 0 22 22"><rect x="6" y="2" width="15" height="18" fill="#f2f8f3" stroke="#8fbf9c" stroke-width="1"/><path d="M9 7H19M9 10H19M9 13H19M9 16H19" stroke="#5aa06c" stroke-width="1"/><rect x="0.5" y="3.5" width="13" height="14" fill="#1f7a43"/><text x="7" y="15" font-size="11" font-weight="bold" fill="#fff" text-anchor="middle" font-family="Liberation Sans">X</text></svg>
<!-- explorer -->
<svg style="left:498px;top:737px" width="22" height="20" viewBox="0 0 22 20"><path d="M0.5 2C0.5 1.2 1.2 0.5 2 0.5H8L10 2.5H20C20.8 2.5 21.5 3.2 21.5 4V17C21.5 17.8 20.8 18.5 20 18.5H2C1.2 18.5 0.5 17.8 0.5 17Z" fill="#f5c343"/><path d="M0.5 5H21.5V17C21.5 17.8 20.8 18.5 20 18.5H2C1.2 18.5 0.5 17.8 0.5 17Z" fill="#ffd766"/><path d="M6 19V12H16V19H13V15H9V19Z" fill="#2c8fe0"/></svg>
<!-- whatsapp -->
<svg style="left:547px;top:736px" width="30" height="26" viewBox="0 0 30 26"><path d="M12 1.5A10.5 10.5 0 1 1 6.5 20.8L1 22.5L2.8 17.3A10.5 10.5 0 0 1 12 1.5Z" fill="none" stroke="#25d366" stroke-width="2.2"/><path d="M8 7C8 6 9 5.5 9.6 5.5L11 8.5L10 10C11 12 12.5 13.5 14.3 14.3L15.8 13.3L18.5 14.7C18.5 15.8 17.5 17 16 17C11.5 17 7.5 12 8 7Z" fill="#25d366"/><circle cx="24.5" cy="18.5" r="6.5" fill="#2b2b2b" stroke="#cfcfcf" stroke-width="0.8"/><text x="24.5" y="22.5" font-size="10.5" fill="#fff" text-anchor="middle" font-family="Liberation Sans">2</text></svg>
<!-- chrome apps -->
<svg style="left:596px;top:738px" width="22" height="19" viewBox="0 0 22 19"><rect x="5" y="0.5" width="16" height="12" fill="#e8e8e8" stroke="#bdbdbd" stroke-width="0.8"/><rect x="1" y="4" width="17" height="14" fill="#f4f4f4" stroke="#bdbdbd" stroke-width="0.8"/><path d="M4.5 18A5 5 0 0 1 14.5 18Z" fill="#de4b3a"/><path d="M7 18A2.5 2.5 0 0 1 12 18Z" fill="#3f7ee8"/><path d="M4.5 18H7" stroke="#2ea44f" stroke-width="1.2"/><path d="M12 18H14.5" stroke="#f2c230" stroke-width="1.2"/></svg>
<!-- unity hub -->
<svg style="left:645px;top:735px" width="22" height="24" viewBox="0 0 22 24"><path d="M11 0.8L21 6.5V17.5L11 23.2L1 17.5V6.5Z" fill="#4b5360" stroke="#9aa3ad" stroke-width="1"/><path d="M11 5.5L16.5 8.7V15.3L11 18.5L5.5 15.3V8.7Z M5.5 8.7L11 11.8L16.5 8.7 M11 11.8V18.5" stroke="#e3e6ea" stroke-width="1.3" fill="none"/></svg>
<div class="a" style="left:638px;top:766px;width:39px;height:2px;background:#8fc3e8"></div>
<!-- vscode -->
<svg style="left:694px;top:736px" width="24" height="24" viewBox="0 0 16 16"><path d="M11.5 0.8 L15.2 2.6 V13.4 L11.5 15.2 L4.6 8.9 L1.8 11.1 L0.8 10.6 V5.4 L1.8 4.9 L4.6 7.1 Z M11.5 4.4 L7 8 L11.5 11.6 Z" fill="#2aa0f0"/><path d="M11.5 0.8 L15.2 2.6 V13.4 L11.5 15.2 Z" fill="#1f8ad8"/></svg>
<div class="a" style="left:686px;top:766px;width:40px;height:2px;background:#8fc3e8"></div>
<!-- chrome -->
<svg style="left:743px;top:736px" width="24" height="24" viewBox="0 0 24 24"><circle cx="12" cy="12" r="11.5" fill="#db4437"/><path d="M12 12L22 6.2A11.5 11.5 0 0 1 12 23.5Z" fill="#f4c20d"/><path d="M12 12L12 23.5A11.5 11.5 0 0 1 2 6.2Z" fill="#0f9d58"/><circle cx="12" cy="12" r="5.5" fill="#ffffff"/><circle cx="12" cy="12" r="4.3" fill="#4285f4"/></svg>
<div class="a" style="left:735px;top:766px;width:40px;height:2px;background:#8fc3e8"></div>
<!-- unity active -->
<div class="a" style="left:780px;top:728px;width:48px;height:40px;background:rgba(255,255,255,0.16)"></div>
<svg style="left:793px;top:736px" width="22" height="24" viewBox="0 0 22 24"><path d="M11 0.8L21 6.5V17.5L11 23.2L1 17.5V6.5Z" fill="#222222" stroke="#8a8a8a" stroke-width="1"/><path d="M11 5.5L16.5 8.7V15.3L11 18.5L5.5 15.3V8.7Z M5.5 8.7L11 11.8L16.5 8.7 M11 11.8V18.5" stroke="#f0f0f0" stroke-width="1.5" fill="none"/></svg>
<div class="a" style="left:780px;top:766px;width:48px;height:2px;background:#8fc3e8"></div>
<!-- tray -->
<svg style="left:1188px;top:744px" width="13" height="8"><path d="M0.8 7L6.5 1.2L12.2 7" stroke="#ffffff" stroke-width="1.3" fill="none"/></svg>
<div class="a" style="left:1213px;top:741px;font-size:12px;color:#ffffff;white-space:pre">ENG</div>
<div class="a" style="left:1250px;top:732px;width:58px;text-align:center;font-size:12px;color:#ffffff;white-space:pre">19.47</div>
<div class="a" style="left:1245px;top:750px;width:68px;text-align:center;font-size:12px;color:#ffffff;white-space:pre">16/07/2025</div>
<svg style="left:1325px;top:740px" width="17" height="17" viewBox="0 0 17 17"><path d="M0.5 0.5H16.5V12.5H11L8.5 16L6 12.5H0.5Z" fill="#ffffff"/><path d="M3.5 4H13.5M3.5 7H13.5M3.5 10H9.5" stroke="#263a24" stroke-width="1.2"/></svg>
</body></html>
